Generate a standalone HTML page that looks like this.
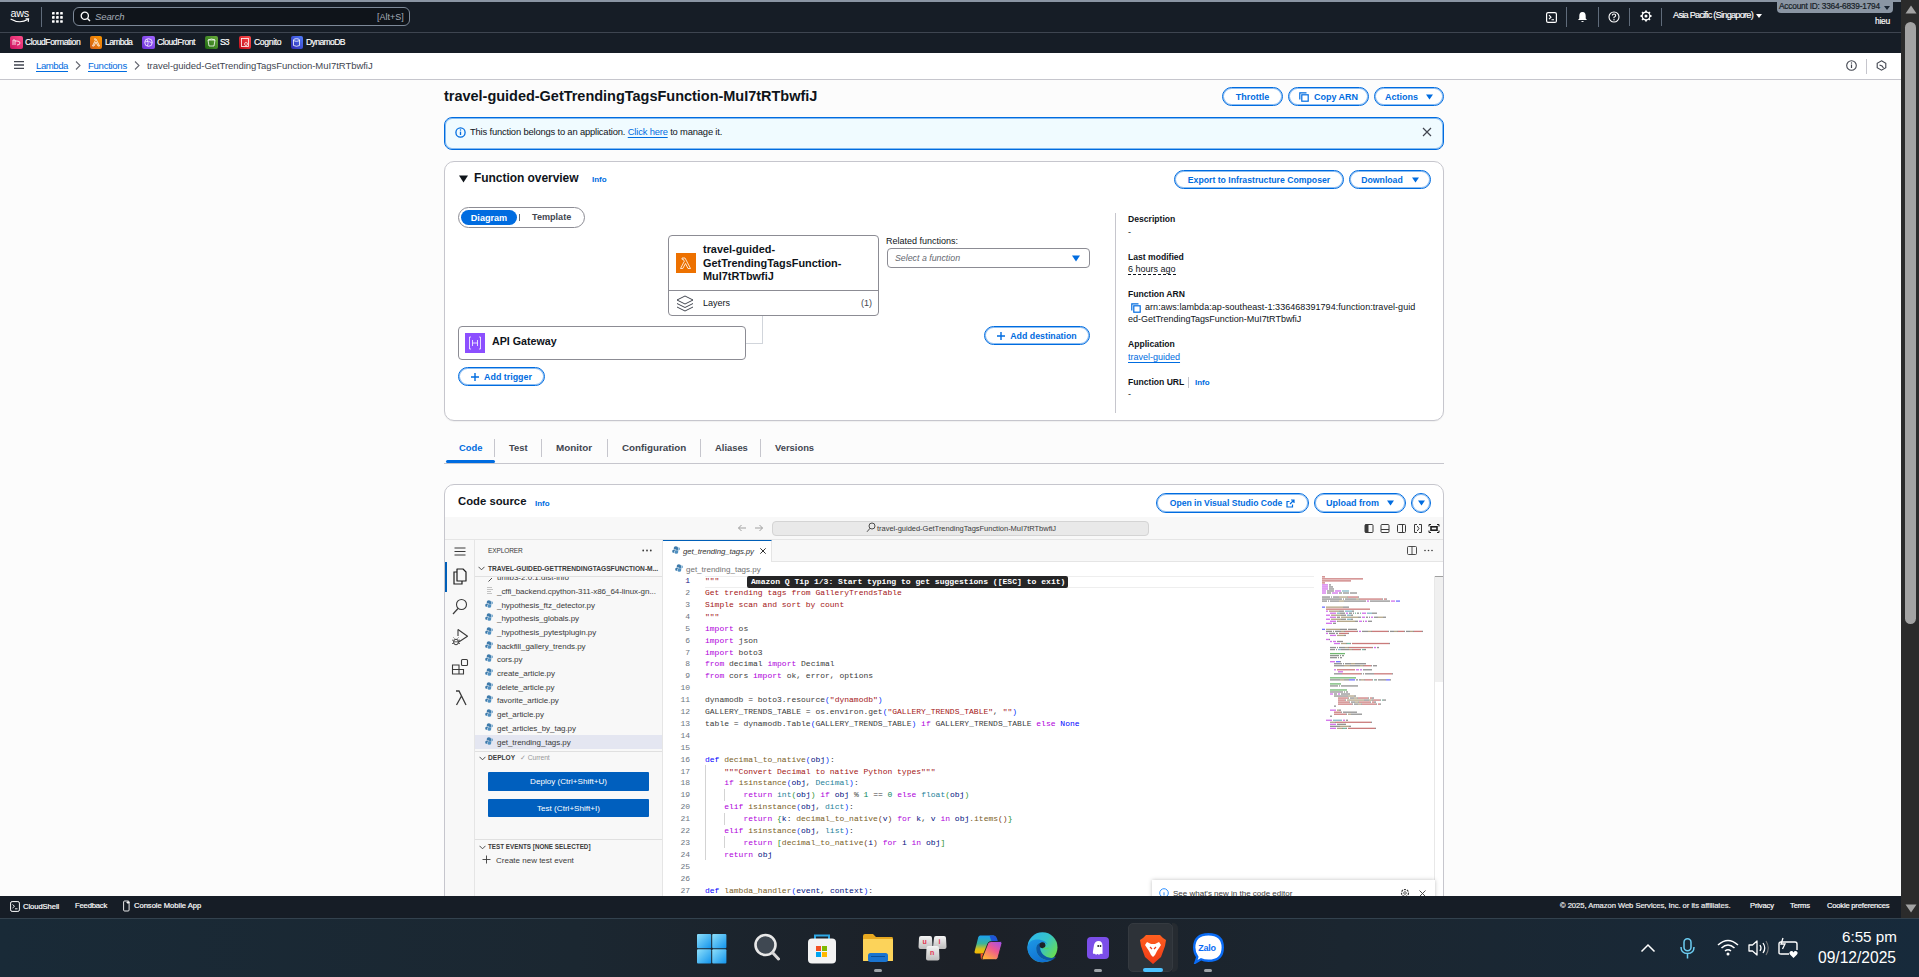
<!DOCTYPE html>
<html><head><meta charset="utf-8">
<style>
*{box-sizing:border-box;margin:0;padding:0}
html,body{width:1919px;height:977px;overflow:hidden;background:#fcfcfc;font-family:"Liberation Sans",sans-serif;color:#0f141a}
.a{position:absolute;white-space:nowrap}
svg{display:block}
.wt{color:#fff;-webkit-text-stroke:0.18px #fff}
.lnk{color:#006ce0;text-decoration:underline;text-underline-offset:2px}
.btn{position:absolute;border:1px solid #006ce0;box-shadow:inset 0 0 0 1px rgba(0,108,224,0.45);border-radius:12px;color:#006ce0;font-weight:700;font-size:9px;display:flex;align-items:center;justify-content:center;background:#fff;white-space:nowrap}
.lbl{font-weight:700;font-size:8.6px;color:#0f141a}
.val{font-size:9px;color:#0f141a}
.sep{position:absolute;width:1px;background:#5f6b7a}
</style></head>
<body>
<!-- top chrome -->
<div class="a" style="left:0;top:0;width:1901px;height:2px;background:#8a95a3"></div>
<div class="a" style="left:0;top:2px;width:1901px;height:30px;background:#161d26"></div>
<div class="a" style="left:0;top:32px;width:1901px;height:1px;background:#3e4550"></div>
<div class="a" style="left:0;top:33px;width:1901px;height:20px;background:#161d26"></div>
<!-- aws logo -->
<svg class="a" style="left:10px;top:9px" width="21" height="14" viewBox="0 0 21 14">
<text x="0.6" y="8.1" font-family="Liberation Sans" font-size="10.8" fill="#fff" letter-spacing="-0.35">aws</text>
<path d="M0.6 10 Q9.5 15.2 17.8 10.6" stroke="#fff" stroke-width="1.2" fill="none"/>
<path d="M15.6 9.9 L18.6 9.9 L18.2 12.9" stroke="#fff" stroke-width="1.1" fill="none"/>
</svg>
<div class="a" style="left:41px;top:7px;width:1px;height:20px;background:#5f6b7a"></div>
<!-- grid -->
<svg class="a" style="left:52px;top:12px" width="11" height="11" viewBox="0 0 10.5 10.5" fill="#fff"><rect x="0" y="0" width="2.5" height="2.5" rx="0.4"/><rect x="3.9" y="0" width="2.5" height="2.5" rx="0.4"/><rect x="7.8" y="0" width="2.5" height="2.5" rx="0.4"/><rect x="0" y="3.9" width="2.5" height="2.5" rx="0.4"/><rect x="3.9" y="3.9" width="2.5" height="2.5" rx="0.4"/><rect x="7.8" y="3.9" width="2.5" height="2.5" rx="0.4"/><rect x="0" y="7.8" width="2.5" height="2.5" rx="0.4"/><rect x="3.9" y="7.8" width="2.5" height="2.5" rx="0.4"/><rect x="7.8" y="7.8" width="2.5" height="2.5" rx="0.4"/></svg>
<!-- search -->
<div class="a" style="left:73px;top:7px;width:337px;height:19px;border:1px solid #7d8998;border-radius:6px;background:#0f141a"></div>
<svg class="a" style="left:80px;top:11px" width="11" height="11" viewBox="0 0 11 11"><circle cx="4.8" cy="4.8" r="3.6" stroke="#fff" stroke-width="1.3" fill="none"/><path d="M7.5 7.5 L10 10" stroke="#fff" stroke-width="1.4"/></svg>
<div class="a" style="left:95px;top:11px;font-size:9.5px;font-style:italic;color:#a4acb6;letter-spacing:-0.1px">Search</div>
<div class="a" style="left:377px;top:11.5px;font-size:9px;color:#a4acb6">[Alt+S]</div>
<!-- right icons -->
<svg class="a" style="left:1546px;top:12px" width="11" height="11" viewBox="0 0 11 11"><rect x="0.6" y="0.6" width="9.8" height="9.8" rx="1.5" stroke="#fff" stroke-width="1.2" fill="none"/><path d="M3 3.2 L5 5.2 L3 7.2 M5.5 7.8 H8" stroke="#fff" stroke-width="1.1" fill="none"/></svg>
<div class="sep" style="left:1566px;top:7px;height:20px"></div>
<svg class="a" style="left:1577px;top:11px" width="11" height="12" viewBox="0 0 11 12"><path d="M5.5 1 C3 1 2.3 3 2.3 5 V7.5 L1 9 H10 L8.7 7.5 V5 C8.7 3 8 1 5.5 1Z" fill="#fff"/><path d="M4 10 Q5.5 12 7 10" fill="#fff"/></svg>
<div class="sep" style="left:1598px;top:7px;height:20px"></div>
<svg class="a" style="left:1608px;top:11px" width="12" height="12" viewBox="0 0 12 12"><circle cx="6" cy="6" r="5" stroke="#fff" stroke-width="1.1" fill="none"/><path d="M4.3 4.6 Q4.3 3 6 3 Q7.7 3 7.7 4.5 Q7.7 5.5 6 6.3 V7.3" stroke="#fff" stroke-width="1.1" fill="none"/><circle cx="6" cy="8.8" r="0.7" fill="#fff"/></svg>
<div class="sep" style="left:1629px;top:8px;height:18px"></div>
<svg class="a" style="left:1640px;top:10px" width="12" height="12" viewBox="0 0 12 12"><circle cx="6" cy="6" r="3.9" stroke="#fff" stroke-width="1.2" fill="none"/><circle cx="6" cy="6" r="1.5" fill="#fff"/><g stroke="#fff" stroke-width="1.8"><path d="M6 0.5 V2.3 M6 9.7 V11.5 M0.5 6 H2.3 M9.7 6 H11.5 M2.1 2.1 L3.4 3.4 M8.6 8.6 L9.9 9.9 M2.1 9.9 L3.4 8.6 M8.6 3.4 L9.9 2.1"/></g></svg>
<div class="sep" style="left:1661px;top:8px;height:18px"></div>
<div class="a wt" style="left:1673px;top:10px;font-size:9.2px;letter-spacing:-0.75px;-webkit-text-stroke:0.15px #fff">Asia Pacific (Singapore)</div>
<svg class="a" style="left:1756px;top:14px" width="6" height="5" viewBox="0 0 6 5"><path d="M0 0 H6 L3 4Z" fill="#fff"/></svg>
<!-- account tag -->
<div class="a" style="left:1777px;top:0;width:116px;height:13px;background:#8a95a3;border-radius:0 0 4px 4px"></div>
<div class="a" style="left:1779px;top:1px;font-size:8.3px;color:#161d26;letter-spacing:-0.2px;-webkit-text-stroke:0.2px #161d26">Account ID: 3364-6839-1794</div>
<svg class="a" style="left:1884px;top:6px" width="6" height="5" viewBox="0 0 6 5"><path d="M0 0 H6 L3 4Z" fill="#1b2532"/></svg>
<div class="a wt" style="left:1875px;top:15.5px;font-size:8.5px;letter-spacing:-0.3px;-webkit-text-stroke:0.15px #fff">hieu</div>
<!-- services bar -->
<div class="a" style="left:10px;top:36px;width:13px;height:13px;border-radius:2px;background:linear-gradient(45deg,#c7105e,#ff4f8b)"></div>
<svg class="a" style="left:11px;top:37px" width="11" height="11" viewBox="0 0 11 11"><path d="M2 8 V3 H4 V8 M4 4 H6 Q9 4 9 6 Q9 8 6 8" stroke="#fff" stroke-width="0.8" fill="none"/></svg>
<div class="a wt" style="left:25px;top:37px;font-size:8.6px;letter-spacing:-0.42px">CloudFormation</div>
<div class="a" style="left:90px;top:36px;width:12px;height:13px;border-radius:2px;background:linear-gradient(45deg,#d05c17,#ff9900)"></div>
<svg class="a" style="left:91px;top:37px" width="10" height="11" viewBox="0 0 10 11"><path d="M3 2 H5 L8.5 9 H7 L5 5 L3 9 H1.5 L4.3 3.5 L3.8 2.5" stroke="#fff" stroke-width="0.8" fill="none"/></svg>
<div class="a wt" style="left:105px;top:37px;font-size:8.6px;letter-spacing:-0.65px">Lambda</div>
<div class="a" style="left:142px;top:36px;width:13px;height:13px;border-radius:2px;background:linear-gradient(45deg,#6a2fd6,#a166ff)"></div>
<svg class="a" style="left:143px;top:37px" width="11" height="11" viewBox="0 0 11 11"><circle cx="5.5" cy="5.5" r="3.8" stroke="#fff" stroke-width="0.8" fill="none"/><path d="M2 5 Q5.5 3 9 6 M4 2.3 Q6 6 4.5 9" stroke="#fff" stroke-width="0.7" fill="none"/></svg>
<div class="a wt" style="left:157px;top:37px;font-size:8.6px;letter-spacing:-0.45px">CloudFront</div>
<div class="a" style="left:205px;top:36px;width:13px;height:13px;border-radius:2px;background:linear-gradient(45deg,#1b660f,#6cae3e)"></div>
<svg class="a" style="left:206px;top:37px" width="11" height="11" viewBox="0 0 11 11"><path d="M2 3 L3 9 H8 L9 3Z M2 3 Q5.5 1 9 3" stroke="#fff" stroke-width="0.8" fill="none"/></svg>
<div class="a wt" style="left:220px;top:37px;font-size:8.6px;letter-spacing:-0.9px">S3</div>
<div class="a" style="left:239px;top:36px;width:12px;height:13px;border-radius:2px;background:linear-gradient(45deg,#bd0816,#ff5252)"></div>
<svg class="a" style="left:240px;top:37px" width="10" height="11" viewBox="0 0 10 11"><rect x="1.5" y="1.5" width="7" height="8" stroke="#fff" stroke-width="0.8" fill="none"/><circle cx="6" cy="7" r="1.5" stroke="#fff" stroke-width="0.7" fill="none"/></svg>
<div class="a wt" style="left:254px;top:37px;font-size:8.6px;letter-spacing:-0.35px">Cognito</div>
<div class="a" style="left:291px;top:36px;width:12px;height:13px;border-radius:2px;background:linear-gradient(45deg,#2e27ad,#527fff)"></div>
<svg class="a" style="left:292px;top:37px" width="10" height="11" viewBox="0 0 10 11"><ellipse cx="4.5" cy="3" rx="3" ry="1.3" stroke="#fff" stroke-width="0.8" fill="none"/><path d="M1.5 3 V8.5 Q4.5 10 7.5 8.5 V3" stroke="#fff" stroke-width="0.8" fill="none"/></svg>
<div class="a wt" style="left:306px;top:37px;font-size:8.6px;letter-spacing:-0.62px">DynamoDB</div>
<!-- breadcrumb bar -->
<div class="a" style="left:0;top:53px;width:1901px;height:27px;background:#fff;border-bottom:1px solid #c6c6cd"></div>
<svg class="a" style="left:14px;top:61px" width="10" height="8" viewBox="0 0 10 8"><path d="M0 0.7 H10 M0 4 H10 M0 7.3 H10" stroke="#424650" stroke-width="1.3"/></svg>
<div class="a" style="left:36px;top:60px;font-size:9.6px;color:#006ce0;letter-spacing:-0.45px;text-decoration:underline;text-underline-offset:2px">Lambda</div>
<svg class="a" style="left:75px;top:61px" width="6" height="9" viewBox="0 0 6 9"><path d="M1 0.5 L5 4.5 L1 8.5" stroke="#656871" stroke-width="1.1" fill="none"/></svg>
<div class="a" style="left:88px;top:60px;font-size:9.6px;color:#006ce0;letter-spacing:-0.3px;text-decoration:underline;text-underline-offset:2px">Functions</div>
<svg class="a" style="left:134px;top:61px" width="6" height="9" viewBox="0 0 6 9"><path d="M1 0.5 L5 4.5 L1 8.5" stroke="#656871" stroke-width="1.1" fill="none"/></svg>
<div class="a" style="left:147px;top:60px;font-size:9.5px;color:#424650;letter-spacing:-0.05px">travel-guided-GetTrendingTagsFunction-MuI7tRTbwfiJ</div>
<svg class="a" style="left:1846px;top:60px" width="11" height="11" viewBox="0 0 11 11"><circle cx="5.5" cy="5.5" r="4.8" stroke="#424650" stroke-width="1.1" fill="none"/><path d="M5.5 4.5 V8" stroke="#424650" stroke-width="1.2"/><circle cx="5.5" cy="3" r="0.7" fill="#424650"/></svg>
<div class="a" style="left:1866px;top:59px;width:1px;height:15px;background:#c6c6cd"></div>
<svg class="a" style="left:1876px;top:60px" width="11" height="11" viewBox="0 0 11 11"><path d="M5.5 0.8 L9.8 3.2 V7.8 L5.5 10.2 L1.2 7.8 V3.2Z" stroke="#424650" stroke-width="1.1" fill="none"/><path d="M3.5 5 L6 6 L7.5 8" stroke="#424650" stroke-width="1.2" fill="none"/></svg>
<!-- header -->
<div class="a" style="left:444px;top:87.5px;font-size:14.5px;font-weight:700;color:#0f141a;letter-spacing:-0.02px">travel-guided-GetTrendingTagsFunction-MuI7tRTbwfiJ</div>
<div class="btn" style="left:1222px;top:87px;width:61px;height:19px">Throttle</div>
<div class="btn" style="left:1288px;top:87px;width:81px;height:19px;letter-spacing:0px"><svg style="margin-right:5px" width="10" height="10" viewBox="0 0 10 10"><path d="M0.8 7.5 V0.8 H7.5" stroke="#006ce0" stroke-width="1.2" fill="none"/><rect x="2.8" y="2.8" width="6.4" height="6.4" stroke="#006ce0" stroke-width="1.2" fill="none"/></svg>Copy ARN</div>
<div class="btn" style="left:1374px;top:87px;width:70px;height:19px">Actions<svg style="margin-left:8px" width="7" height="6" viewBox="0 0 7 6"><path d="M0 0.5 H7 L3.5 5.5Z" fill="#006ce0"/></svg></div>
<!-- flash -->
<div class="a" style="left:444px;top:117px;width:1000px;height:33px;border:1px solid #006ce0;box-shadow:inset 0 0 0 1px rgba(0,108,224,0.45);border-radius:8px;background:#f0fbff"></div>
<svg class="a" style="left:455px;top:127px" width="11" height="11" viewBox="0 0 11 11"><circle cx="5.5" cy="5.5" r="4.6" stroke="#006ce0" stroke-width="1.3" fill="none"/><path d="M5.5 4.6 V8" stroke="#006ce0" stroke-width="1.3"/><circle cx="5.5" cy="3" r="0.75" fill="#006ce0"/></svg>
<div class="a" style="left:470px;top:126px;font-size:9.4px;letter-spacing:-0.17px;color:#0f141a">This function belongs to an application. <span class="lnk">Click here</span> to manage it.</div>
<svg class="a" style="left:1422px;top:127px" width="10" height="10" viewBox="0 0 10 10"><path d="M1 1 L9 9 M9 1 L1 9" stroke="#424650" stroke-width="1.2"/></svg>
<!-- function overview container -->
<div class="a" style="left:444px;top:161px;width:1000px;height:260px;background:#fff;border:1px solid #c6c6cd;border-radius:10px;box-shadow:0 1px 1px rgba(0,7,22,0.05)"></div>
<svg class="a" style="left:459px;top:175px" width="9" height="8" viewBox="0 0 9 8"><path d="M0 0.5 H9 L4.5 7.5Z" fill="#0f141a"/></svg>
<div class="a" style="left:474px;top:171px;font-size:12px;font-weight:700;color:#0f141a;letter-spacing:-0.05px">Function overview</div>
<div class="a" style="left:592px;top:175px;font-size:8px;font-weight:700;color:#006ce0">Info</div>
<div class="btn" style="left:1174px;top:170px;width:170px;height:19px;font-size:8.7px">Export to Infrastructure Composer</div>
<div class="btn" style="left:1349px;top:170px;width:82px;height:19px;font-size:8.7px">Download<svg style="margin-left:9px" width="7" height="6" viewBox="0 0 7 6"><path d="M0 0.5 H7 L3.5 5.5Z" fill="#006ce0"/></svg></div>
<!-- segmented -->
<div class="a" style="left:458px;top:207px;width:127px;height:21px;border:1px solid #8c8c94;border-radius:11px;background:#fff"></div>
<div class="a" style="left:461px;top:210px;width:56px;height:15px;border-radius:8px;background:#006ce0;color:#fff;font-size:9.1px;font-weight:700;display:flex;align-items:center;justify-content:center">Diagram</div>
<div class="a" style="left:519px;top:214px;width:1px;height:6.5px;background:#5f6b7a"></div>
<div class="a" style="left:532px;top:212px;font-size:9.1px;font-weight:700;color:#424650">Template</div>
<!-- lambda node -->
<div class="a" style="left:668px;top:235px;width:211px;height:81px;border:1px solid #8c8c94;border-radius:4px;background:#fff"></div>
<div class="a" style="left:669px;top:290px;width:209px;height:1px;background:#8c8c94"></div>
<div class="a" style="left:676px;top:253px;width:20px;height:20px;background:#ed7100"></div>
<svg class="a" style="left:676px;top:253px" width="20" height="20" viewBox="0 0 20 20"><path d="M6 5 H9 L14.5 15.5 H12 L9.5 10.5 L6.8 15.5 H4.5 L8.3 8.3 L7.3 6.3 H6Z" stroke="#fff" stroke-width="0.8" fill="none"/></svg>
<div class="a" style="left:703px;top:243px;font-size:10.9px;font-weight:700;line-height:13.5px;color:#0f141a;white-space:normal;width:170px">travel-guided-<br>GetTrendingTagsFunction-<br>MuI7tRTbwfiJ</div>
<svg class="a" style="left:676px;top:295px" width="18" height="17" viewBox="0 0 18 17"><path d="M9 1 L17 5 L9 9 L1 5Z M1 8.5 L9 12.5 L17 8.5 M1 12 L9 16 L17 12" stroke="#424650" stroke-width="1" fill="none" stroke-linejoin="round"/></svg>
<div class="a" style="left:703px;top:298px;font-size:9px;color:#0f141a">Layers</div>
<div class="a" style="left:861px;top:298px;font-size:9px;color:#424650">(1)</div>
<!-- connector -->
<div class="a" style="left:762px;top:316px;width:1px;height:28px;background:#d1d5db"></div>
<div class="a" style="left:745px;top:343px;width:18px;height:1px;background:#d1d5db"></div>
<!-- api gateway node -->
<div class="a" style="left:458px;top:326px;width:288px;height:34px;border:1px solid #8c8c94;border-radius:4px;background:#fff"></div>
<div class="a" style="left:465px;top:333px;width:20px;height:20px;background:#8c4fff"></div>
<svg class="a" style="left:465px;top:333px" width="20" height="20" viewBox="0 0 20 20"><path d="M6 4 H4.5 V16 H6 M14 4 H15.5 V16 H14 M7.5 7 V13 M12.5 7 V13 M7.5 10 H12.5" stroke="#fff" stroke-width="0.8" fill="none"/></svg>
<div class="a" style="left:492px;top:335px;font-size:10.7px;font-weight:700;color:#0f141a">API Gateway</div>
<div class="btn" style="left:458px;top:367px;width:87px;height:19px;font-size:8.9px"><svg style="margin-right:5px" width="8" height="8" viewBox="0 0 8 8"><path d="M4 0 V8 M0 4 H8" stroke="#006ce0" stroke-width="1.4"/></svg>Add trigger</div>
<!-- related functions -->
<div class="a" style="left:886px;top:236px;font-size:9px;color:#0f141a">Related functions:</div>
<div class="a" style="left:887px;top:248px;width:203px;height:20px;border:1px solid #8c8c94;border-radius:4px;background:#fff"></div>
<div class="a" style="left:895px;top:253px;font-size:8.8px;font-style:italic;color:#656871">Select a function</div>
<svg class="a" style="left:1072px;top:255px" width="8" height="7" viewBox="0 0 8 7"><path d="M0 0.5 H8 L4 6.5Z" fill="#006ce0"/></svg>
<div class="btn" style="left:984px;top:326px;width:106px;height:19px;font-size:8.8px"><svg style="margin-right:5px" width="8" height="8" viewBox="0 0 8 8"><path d="M4 0 V8 M0 4 H8" stroke="#006ce0" stroke-width="1.4"/></svg>Add destination</div>
<!-- right column -->
<div class="a" style="left:1115px;top:213px;width:1px;height:200px;background:#c6c6cd"></div>
<div class="a lbl" style="left:1128px;top:214px">Description</div>
<div class="a val" style="left:1128px;top:227px">-</div>
<div class="a lbl" style="left:1128px;top:252px">Last modified</div>
<div class="a val" style="left:1128px;top:264px;border-bottom:1px dashed #0f141a;line-height:10px">6 hours ago</div>
<div class="a lbl" style="left:1128px;top:289px">Function ARN</div>
<svg class="a" style="left:1131px;top:303px" width="10" height="10" viewBox="0 0 10 10"><path d="M0.8 7.5 V0.8 H7.5" stroke="#006ce0" stroke-width="1.2" fill="none"/><rect x="2.8" y="2.8" width="6.4" height="6.4" stroke="#006ce0" stroke-width="1.2" fill="none"/></svg>
<div class="a val" style="left:1145px;top:302px;letter-spacing:0.05px">arn:aws:lambda:ap-southeast-1:336468391794:function:travel-guid</div>
<div class="a val" style="left:1128px;top:314px;letter-spacing:-0.02px">ed-GetTrendingTagsFunction-MuI7tRTbwfiJ</div>
<div class="a lbl" style="left:1128px;top:339px">Application</div>
<div class="a val" style="left:1128px;top:352px;color:#006ce0;text-decoration:underline;text-underline-offset:2px">travel-guided</div>
<div class="a lbl" style="left:1128px;top:377px">Function URL</div>
<div class="a" style="left:1188px;top:377px;width:1px;height:11px;background:#c6c6cd"></div>
<div class="a" style="left:1195px;top:378px;font-size:8px;font-weight:700;color:#006ce0">Info</div>
<div class="a val" style="left:1128px;top:389px">-</div>
<!-- tabs -->
<div class="a" style="left:444px;top:463px;width:1000px;height:1px;background:#c6c6cd"></div>
<div class="a" style="left:446px;top:460px;width:49px;height:3px;background:#006ce0;border-radius:2px"></div>
<div class="a" style="left:459px;top:442px;font-size:9.4px;font-weight:700;color:#006ce0">Code</div>
<div class="a" style="left:494px;top:439px;width:1px;height:18px;background:#c6c6cd"></div>
<div class="a" style="left:509px;top:442px;font-size:9.4px;font-weight:700;color:#424650">Test</div>
<div class="a" style="left:541px;top:439px;width:1px;height:18px;background:#c6c6cd"></div>
<div class="a" style="left:556px;top:442px;font-size:9.9px;font-weight:700;color:#424650">Monitor</div>
<div class="a" style="left:607px;top:439px;width:1px;height:18px;background:#c6c6cd"></div>
<div class="a" style="left:622px;top:442px;font-size:9.8px;font-weight:700;color:#424650">Configuration</div>
<div class="a" style="left:700px;top:439px;width:1px;height:18px;background:#c6c6cd"></div>
<div class="a" style="left:715px;top:442px;font-size:9.4px;font-weight:700;color:#424650">Aliases</div>
<div class="a" style="left:760px;top:439px;width:1px;height:18px;background:#c6c6cd"></div>
<div class="a" style="left:775px;top:442px;font-size:9.4px;font-weight:700;color:#424650">Versions</div>
<!-- code source container -->
<div class="a" style="left:444px;top:484px;width:1000px;height:450px;background:#fff;border:1px solid #c6c6cd;border-radius:10px"></div>
<div class="a" style="left:458px;top:495px;font-size:11.3px;font-weight:700;color:#0f141a">Code source</div>
<div class="a" style="left:535px;top:499px;font-size:8px;font-weight:700;color:#006ce0">Info</div>
<div class="btn" style="left:1156px;top:493px;width:153px;height:20px;font-size:8.6px">Open in Visual Studio Code<svg style="margin-left:4px" width="9" height="9" viewBox="0 0 9 9"><path d="M5 1 H8 V4 M8 1 L4 5 M6.5 5.5 V8 H1 V2.5 H3.5" stroke="#006ce0" stroke-width="1.2" fill="none"/></svg></div>
<div class="btn" style="left:1314px;top:493px;width:92px;height:20px;font-size:9px">Upload from<svg style="margin-left:8px" width="7" height="6" viewBox="0 0 7 6"><path d="M0 0.5 H7 L3.5 5.5Z" fill="#006ce0"/></svg></div>
<div class="btn" style="left:1411px;top:493px;width:20px;height:20px;border-radius:50%"><svg width="7" height="6" viewBox="0 0 7 6"><path d="M0 0.5 H7 L3.5 5.5Z" fill="#006ce0"/></svg></div>
<style>
.ln{left:660px;width:30px;text-align:right;font-family:"Liberation Mono",monospace;font-size:8px;line-height:12px}
.cd{left:705px;font-family:"Liberation Mono",monospace;font-size:8px;line-height:12px;white-space:pre}
.fr{position:absolute;left:475px;width:187px;height:14px}
.fi{position:absolute;left:497px;font-size:8px;color:#3b3b3b;white-space:nowrap;letter-spacing:-0.05px}
</style>
<!-- editor chrome -->
<div class="a" style="left:445px;top:517px;width:998px;height:23px;background:#f8f8f8;border-bottom:1px solid #e5e5e5"></div>
<svg class="a" style="left:737px;top:524px" width="10" height="8" viewBox="0 0 10 8"><path d="M9 4 H1.5 M4.5 1 L1.5 4 L4.5 7" stroke="#a0a0a0" stroke-width="1" fill="none"/></svg>
<svg class="a" style="left:754px;top:524px" width="10" height="8" viewBox="0 0 10 8"><path d="M1 4 H8.5 M5.5 1 L8.5 4 L5.5 7" stroke="#a0a0a0" stroke-width="1" fill="none"/></svg>
<div class="a" style="left:772px;top:521px;width:377px;height:15px;background:#e9e9e9;border:1px solid #d4d4d4;border-radius:4px"></div>
<svg class="a" style="left:866px;top:522px" width="10" height="11" viewBox="0 0 10 11"><circle cx="6" cy="4" r="3" stroke="#3b3b3b" stroke-width="0.9" fill="none"/><path d="M4 6.3 L1 9.8" stroke="#3b3b3b" stroke-width="0.9"/></svg>
<div class="a" style="left:877px;top:524px;font-size:7.5px;color:#3b3b3b;letter-spacing:-0.02px">travel-guided-GetTrendingTagsFunction-MuI7tRTbwfiJ</div>
<!-- layout icons -->
<svg class="a" style="left:1364px;top:523px" width="76" height="11" viewBox="0 0 76 11">
<rect x="1" y="1.5" width="8" height="8" rx="1" stroke="#3b3b3b" stroke-width="1" fill="none"/><rect x="1" y="1.5" width="3.5" height="8" fill="#3b3b3b"/>
<rect x="17" y="1.5" width="8" height="8" rx="1" stroke="#3b3b3b" stroke-width="1" fill="none"/><path d="M17 6.5 H25" stroke="#3b3b3b" stroke-width="1"/>
<rect x="33.5" y="1.5" width="8" height="8" rx="1" stroke="#3b3b3b" stroke-width="1" fill="none"/><path d="M38.5 1.5 V9.5" stroke="#3b3b3b" stroke-width="1"/>
<path d="M53 1.5 H50.5 V9.5 H53 M55 1.5 H57.5 V9.5 H55 M53.2 3 L55 5.5 L53.2 8" stroke="#3b3b3b" stroke-width="1" fill="none"/>
<rect x="67" y="3.8" width="6" height="3.4" stroke="#1f1f1f" stroke-width="1.6" fill="none"/><path d="M65 1.5 V3.5 M65 1.5 H67 M75 1.5 V3.5 M75 1.5 H73 M65 9.5 V7.5 M65 9.5 H67 M75 9.5 V7.5 M75 9.5 H73" stroke="#1f1f1f" stroke-width="1.1" fill="none"/>
</svg>
<!-- activity bar -->
<div class="a" style="left:445px;top:540px;width:30px;height:356px;background:#f8f8f8;border-right:1px solid #e5e5e5"></div>
<div class="a" style="left:445px;top:562px;width:2px;height:30px;background:#005fb8"></div>
<svg class="a" style="left:454px;top:547px" width="12" height="9" viewBox="0 0 12 9"><path d="M0.5 1 H11.5 M0.5 4.5 H11.5 M0.5 8 H11.5" stroke="#3b3b3b" stroke-width="1"/></svg>
<svg class="a" style="left:452px;top:568px" width="16" height="17" viewBox="0 0 16 17"><path d="M5 4 H2 V16 H10 V13" stroke="#1f1f1f" stroke-width="1.2" fill="none"/><path d="M5 1 H11 L14 4 V13 H5Z" stroke="#1f1f1f" stroke-width="1.2" fill="none" stroke-linejoin="round"/></svg>
<svg class="a" style="left:452px;top:598px" width="16" height="17" viewBox="0 0 16 17"><circle cx="9.5" cy="6.5" r="5" stroke="#3b3b3b" stroke-width="1.1" fill="none"/><path d="M6 10.5 L1 16" stroke="#3b3b3b" stroke-width="1.2"/></svg>
<svg class="a" style="left:451px;top:628px" width="18" height="18" viewBox="0 0 18 18"><path d="M7 1.5 L16.5 8.2 L7 14.5" stroke="#3b3b3b" stroke-width="1.1" fill="none" stroke-linejoin="round"/><path d="M7 1.5 V8" stroke="#3b3b3b" stroke-width="1.1"/><ellipse cx="5" cy="14" rx="2.4" ry="2.8" stroke="#3b3b3b" stroke-width="1" fill="#f8f8f8"/><path d="M1 12.2 H2.6 M7.4 12.2 H9 M1 15.5 H2.6 M7.4 15.5 H9 M3.5 10.5 L2.5 9.5 M6.5 10.5 L7.5 9.5 M2.6 13.8 H7.4" stroke="#3b3b3b" stroke-width="0.8"/></svg>
<svg class="a" style="left:451px;top:658px" width="18" height="18" viewBox="0 0 18 18"><path d="M1.5 7 H8 V16 H1.5Z M1.5 11.5 H8 M8 11.5 H12.5 V16 H8" stroke="#3b3b3b" stroke-width="1.1" fill="none"/><rect x="10.5" y="1.5" width="6" height="6" rx="1" stroke="#3b3b3b" stroke-width="1.1" fill="none"/></svg>
<svg class="a" style="left:454px;top:689px" width="14" height="17" viewBox="0 0 14 17"><path d="M2 2 H5 L12 16 M7.5 7 L2.5 16" stroke="#3b3b3b" stroke-width="1.3" fill="none"/></svg>
<!-- sidebar -->
<div class="a" style="left:475px;top:540px;width:188px;height:356px;background:#f8f8f8;border-right:1px solid #e5e5e5"></div>
<div class="a" style="left:488px;top:547px;font-size:6.6px;color:#3b3b3b;letter-spacing:-0.15px">EXPLORER</div>
<svg class="a" style="left:642px;top:549px" width="10" height="3" viewBox="0 0 10 3" fill="#3b3b3b"><circle cx="1.2" cy="1.5" r="0.9"/><circle cx="5" cy="1.5" r="0.9"/><circle cx="8.8" cy="1.5" r="0.9"/></svg>
<svg class="a" style="left:478px;top:566px" width="7" height="5" viewBox="0 0 7 5"><path d="M0.5 0.8 L3.5 3.8 L6.5 0.8" stroke="#3b3b3b" stroke-width="0.9" fill="none"/></svg>
<div class="a" style="left:488px;top:564.5px;font-size:6.65px;font-weight:700;color:#3b3b3b;letter-spacing:0px">TRAVEL-GUIDED-GETTRENDINGTAGSFUNCTION-M...</div>
<div class="a" style="left:475px;top:576px;width:187px;height:1px;background:#e0e0e0"></div>
<div class="a" style="left:497px;top:577px;height:5px;overflow:hidden;width:150px"><div style="margin-top:-4px;font-size:8px;color:#3b3b3b">urllib3-2.0.1.dist-info</div></div>
<svg class="a" style="left:488px;top:577px" width="5" height="5" viewBox="0 0 5 5"><path d="M0.5 4.5 L4 1" stroke="#3b3b3b" stroke-width="0.9"/></svg>
<svg class="a" style="left:487px;top:587px" width="7" height="7" viewBox="0 0 7 7"><path d="M0 0.5 H5 M0 2.5 H6 M0 4.5 H4 M0 6.5 H5" stroke="#a0a0a0" stroke-width="0.6"/></svg>
<div class="fi" style="top:587px">_cffi_backend.cpython-311-x86_64-linux-gn...</div>
<svg class="a" style="left:485px;top:599.5px" width="8" height="8" viewBox="0 0 8 8"><path d="M3.8 0.3 Q1.8 0.3 1.8 1.8 V3.2 H4.2 V3.7 H1.2 Q0.2 3.7 0.2 5.2 Q0.2 6.8 1.3 6.8 H2.2 V5.6 Q2.2 4.5 3.4 4.5 H5 Q6 4.5 6 3.5 V1.8 Q6 0.3 3.8 0.3Z" fill="#3d7aab"/><path d="M4.2 7.7 Q6.2 7.7 6.2 6.2 V4.8 H3.8 V4.3 H6.8 Q7.8 4.3 7.8 2.8 Q7.8 1.2 6.7 1.2 H6.5 V3.5 Q6.5 5 5 5 H3.4 Q2.5 5 2.5 6 V6.2 Q2.5 7.7 4.2 7.7Z" fill="#4f8fc0"/></svg>
<div class="fi" style="top:600.5px">_hypothesis_ftz_detector.py</div>
<svg class="a" style="left:485px;top:613.2px" width="8" height="8" viewBox="0 0 8 8"><path d="M3.8 0.3 Q1.8 0.3 1.8 1.8 V3.2 H4.2 V3.7 H1.2 Q0.2 3.7 0.2 5.2 Q0.2 6.8 1.3 6.8 H2.2 V5.6 Q2.2 4.5 3.4 4.5 H5 Q6 4.5 6 3.5 V1.8 Q6 0.3 3.8 0.3Z" fill="#3d7aab"/><path d="M4.2 7.7 Q6.2 7.7 6.2 6.2 V4.8 H3.8 V4.3 H6.8 Q7.8 4.3 7.8 2.8 Q7.8 1.2 6.7 1.2 H6.5 V3.5 Q6.5 5 5 5 H3.4 Q2.5 5 2.5 6 V6.2 Q2.5 7.7 4.2 7.7Z" fill="#4f8fc0"/></svg>
<div class="fi" style="top:614.2px">_hypothesis_globals.py</div>
<svg class="a" style="left:485px;top:626.9px" width="8" height="8" viewBox="0 0 8 8"><path d="M3.8 0.3 Q1.8 0.3 1.8 1.8 V3.2 H4.2 V3.7 H1.2 Q0.2 3.7 0.2 5.2 Q0.2 6.8 1.3 6.8 H2.2 V5.6 Q2.2 4.5 3.4 4.5 H5 Q6 4.5 6 3.5 V1.8 Q6 0.3 3.8 0.3Z" fill="#3d7aab"/><path d="M4.2 7.7 Q6.2 7.7 6.2 6.2 V4.8 H3.8 V4.3 H6.8 Q7.8 4.3 7.8 2.8 Q7.8 1.2 6.7 1.2 H6.5 V3.5 Q6.5 5 5 5 H3.4 Q2.5 5 2.5 6 V6.2 Q2.5 7.7 4.2 7.7Z" fill="#4f8fc0"/></svg>
<div class="fi" style="top:627.9px">_hypothesis_pytestplugin.py</div>
<svg class="a" style="left:485px;top:640.6px" width="8" height="8" viewBox="0 0 8 8"><path d="M3.8 0.3 Q1.8 0.3 1.8 1.8 V3.2 H4.2 V3.7 H1.2 Q0.2 3.7 0.2 5.2 Q0.2 6.8 1.3 6.8 H2.2 V5.6 Q2.2 4.5 3.4 4.5 H5 Q6 4.5 6 3.5 V1.8 Q6 0.3 3.8 0.3Z" fill="#3d7aab"/><path d="M4.2 7.7 Q6.2 7.7 6.2 6.2 V4.8 H3.8 V4.3 H6.8 Q7.8 4.3 7.8 2.8 Q7.8 1.2 6.7 1.2 H6.5 V3.5 Q6.5 5 5 5 H3.4 Q2.5 5 2.5 6 V6.2 Q2.5 7.7 4.2 7.7Z" fill="#4f8fc0"/></svg>
<div class="fi" style="top:641.6px">backfill_gallery_trends.py</div>
<svg class="a" style="left:485px;top:654.3px" width="8" height="8" viewBox="0 0 8 8"><path d="M3.8 0.3 Q1.8 0.3 1.8 1.8 V3.2 H4.2 V3.7 H1.2 Q0.2 3.7 0.2 5.2 Q0.2 6.8 1.3 6.8 H2.2 V5.6 Q2.2 4.5 3.4 4.5 H5 Q6 4.5 6 3.5 V1.8 Q6 0.3 3.8 0.3Z" fill="#3d7aab"/><path d="M4.2 7.7 Q6.2 7.7 6.2 6.2 V4.8 H3.8 V4.3 H6.8 Q7.8 4.3 7.8 2.8 Q7.8 1.2 6.7 1.2 H6.5 V3.5 Q6.5 5 5 5 H3.4 Q2.5 5 2.5 6 V6.2 Q2.5 7.7 4.2 7.7Z" fill="#4f8fc0"/></svg>
<div class="fi" style="top:655.3px">cors.py</div>
<svg class="a" style="left:485px;top:668.0px" width="8" height="8" viewBox="0 0 8 8"><path d="M3.8 0.3 Q1.8 0.3 1.8 1.8 V3.2 H4.2 V3.7 H1.2 Q0.2 3.7 0.2 5.2 Q0.2 6.8 1.3 6.8 H2.2 V5.6 Q2.2 4.5 3.4 4.5 H5 Q6 4.5 6 3.5 V1.8 Q6 0.3 3.8 0.3Z" fill="#3d7aab"/><path d="M4.2 7.7 Q6.2 7.7 6.2 6.2 V4.8 H3.8 V4.3 H6.8 Q7.8 4.3 7.8 2.8 Q7.8 1.2 6.7 1.2 H6.5 V3.5 Q6.5 5 5 5 H3.4 Q2.5 5 2.5 6 V6.2 Q2.5 7.7 4.2 7.7Z" fill="#4f8fc0"/></svg>
<div class="fi" style="top:669.0px">create_article.py</div>
<svg class="a" style="left:485px;top:681.7px" width="8" height="8" viewBox="0 0 8 8"><path d="M3.8 0.3 Q1.8 0.3 1.8 1.8 V3.2 H4.2 V3.7 H1.2 Q0.2 3.7 0.2 5.2 Q0.2 6.8 1.3 6.8 H2.2 V5.6 Q2.2 4.5 3.4 4.5 H5 Q6 4.5 6 3.5 V1.8 Q6 0.3 3.8 0.3Z" fill="#3d7aab"/><path d="M4.2 7.7 Q6.2 7.7 6.2 6.2 V4.8 H3.8 V4.3 H6.8 Q7.8 4.3 7.8 2.8 Q7.8 1.2 6.7 1.2 H6.5 V3.5 Q6.5 5 5 5 H3.4 Q2.5 5 2.5 6 V6.2 Q2.5 7.7 4.2 7.7Z" fill="#4f8fc0"/></svg>
<div class="fi" style="top:682.7px">delete_article.py</div>
<svg class="a" style="left:485px;top:695.4px" width="8" height="8" viewBox="0 0 8 8"><path d="M3.8 0.3 Q1.8 0.3 1.8 1.8 V3.2 H4.2 V3.7 H1.2 Q0.2 3.7 0.2 5.2 Q0.2 6.8 1.3 6.8 H2.2 V5.6 Q2.2 4.5 3.4 4.5 H5 Q6 4.5 6 3.5 V1.8 Q6 0.3 3.8 0.3Z" fill="#3d7aab"/><path d="M4.2 7.7 Q6.2 7.7 6.2 6.2 V4.8 H3.8 V4.3 H6.8 Q7.8 4.3 7.8 2.8 Q7.8 1.2 6.7 1.2 H6.5 V3.5 Q6.5 5 5 5 H3.4 Q2.5 5 2.5 6 V6.2 Q2.5 7.7 4.2 7.7Z" fill="#4f8fc0"/></svg>
<div class="fi" style="top:696.4px">favorite_article.py</div>
<svg class="a" style="left:485px;top:709.1px" width="8" height="8" viewBox="0 0 8 8"><path d="M3.8 0.3 Q1.8 0.3 1.8 1.8 V3.2 H4.2 V3.7 H1.2 Q0.2 3.7 0.2 5.2 Q0.2 6.8 1.3 6.8 H2.2 V5.6 Q2.2 4.5 3.4 4.5 H5 Q6 4.5 6 3.5 V1.8 Q6 0.3 3.8 0.3Z" fill="#3d7aab"/><path d="M4.2 7.7 Q6.2 7.7 6.2 6.2 V4.8 H3.8 V4.3 H6.8 Q7.8 4.3 7.8 2.8 Q7.8 1.2 6.7 1.2 H6.5 V3.5 Q6.5 5 5 5 H3.4 Q2.5 5 2.5 6 V6.2 Q2.5 7.7 4.2 7.7Z" fill="#4f8fc0"/></svg>
<div class="fi" style="top:710.1px">get_article.py</div>
<svg class="a" style="left:485px;top:722.8px" width="8" height="8" viewBox="0 0 8 8"><path d="M3.8 0.3 Q1.8 0.3 1.8 1.8 V3.2 H4.2 V3.7 H1.2 Q0.2 3.7 0.2 5.2 Q0.2 6.8 1.3 6.8 H2.2 V5.6 Q2.2 4.5 3.4 4.5 H5 Q6 4.5 6 3.5 V1.8 Q6 0.3 3.8 0.3Z" fill="#3d7aab"/><path d="M4.2 7.7 Q6.2 7.7 6.2 6.2 V4.8 H3.8 V4.3 H6.8 Q7.8 4.3 7.8 2.8 Q7.8 1.2 6.7 1.2 H6.5 V3.5 Q6.5 5 5 5 H3.4 Q2.5 5 2.5 6 V6.2 Q2.5 7.7 4.2 7.7Z" fill="#4f8fc0"/></svg>
<div class="fi" style="top:723.8px">get_articles_by_tag.py</div>
<div class="a" style="left:475px;top:735px;width:187px;height:14px;background:#e4e6f1"></div>
<svg class="a" style="left:485px;top:736.5px" width="8" height="8" viewBox="0 0 8 8"><path d="M3.8 0.3 Q1.8 0.3 1.8 1.8 V3.2 H4.2 V3.7 H1.2 Q0.2 3.7 0.2 5.2 Q0.2 6.8 1.3 6.8 H2.2 V5.6 Q2.2 4.5 3.4 4.5 H5 Q6 4.5 6 3.5 V1.8 Q6 0.3 3.8 0.3Z" fill="#3d7aab"/><path d="M4.2 7.7 Q6.2 7.7 6.2 6.2 V4.8 H3.8 V4.3 H6.8 Q7.8 4.3 7.8 2.8 Q7.8 1.2 6.7 1.2 H6.5 V3.5 Q6.5 5 5 5 H3.4 Q2.5 5 2.5 6 V6.2 Q2.5 7.7 4.2 7.7Z" fill="#4f8fc0"/></svg>
<div class="fi" style="top:737.5px">get_trending_tags.py</div><div class="a" style="left:475px;top:751px;width:187px;height:1px;background:#e0e0e0"></div>
<svg class="a" style="left:479px;top:756px" width="7" height="5" viewBox="0 0 7 5"><path d="M0.5 0.8 L3.5 3.8 L6.5 0.8" stroke="#3b3b3b" stroke-width="0.9" fill="none"/></svg>
<div class="a" style="left:488px;top:754px;font-size:6.6px;font-weight:700;color:#3b3b3b">DEPLOY</div>
<div class="a" style="left:520px;top:754px;font-size:6.8px;color:#9a9a9a;letter-spacing:-0.1px">&#10003; Current</div>
<div class="a" style="left:488px;top:772px;width:161px;height:19px;background:#005fbe;border-radius:1px;color:#fff;font-size:8.1px;display:flex;align-items:center;justify-content:center">Deploy (Ctrl+Shift+U)</div>
<div class="a" style="left:488px;top:799px;width:161px;height:18px;background:#005fbe;border-radius:1px;color:#fff;font-size:8.1px;display:flex;align-items:center;justify-content:center">Test (Ctrl+Shift+I)</div>
<div class="a" style="left:475px;top:839px;width:187px;height:1px;background:#e0e0e0"></div>
<svg class="a" style="left:479px;top:845px" width="7" height="5" viewBox="0 0 7 5"><path d="M0.5 0.8 L3.5 3.8 L6.5 0.8" stroke="#3b3b3b" stroke-width="0.9" fill="none"/></svg>
<div class="a" style="left:488px;top:843px;font-size:6.3px;font-weight:700;color:#3b3b3b">TEST EVENTS [NONE SELECTED]</div>
<svg class="a" style="left:482px;top:855px" width="9" height="9" viewBox="0 0 9 9"><path d="M4.5 0.5 V8.5 M0.5 4.5 H8.5" stroke="#3b3b3b" stroke-width="0.9"/></svg>
<div class="a" style="left:496px;top:856px;font-size:8px;color:#3b3b3b">Create new test event</div>
<!-- editor tabs -->
<div class="a" style="left:663px;top:540px;width:780px;height:22px;background:#f8f8f8;border-bottom:1px solid #e5e5e5"></div>
<div class="a" style="left:663px;top:540px;width:109px;height:22px;background:#fff;border-top:1px solid #005fb8;border-right:1px solid #e5e5e5"></div>
<svg class="a" style="left:672px;top:546px" width="8" height="8" viewBox="0 0 8 8"><path d="M3.8 0.3 Q1.8 0.3 1.8 1.8 V3.2 H4.2 V3.7 H1.2 Q0.2 3.7 0.2 5.2 Q0.2 6.8 1.3 6.8 H2.2 V5.6 Q2.2 4.5 3.4 4.5 H5 Q6 4.5 6 3.5 V1.8 Q6 0.3 3.8 0.3Z" fill="#3d7aab"/><path d="M4.2 7.7 Q6.2 7.7 6.2 6.2 V4.8 H3.8 V4.3 H6.8 Q7.8 4.3 7.8 2.8 Q7.8 1.2 6.7 1.2 H6.5 V3.5 Q6.5 5 5 5 H3.4 Q2.5 5 2.5 6 V6.2 Q2.5 7.7 4.2 7.7Z" fill="#4f8fc0"/></svg>
<div class="a" style="left:683px;top:546.5px;font-size:7.8px;font-style:italic;color:#333;letter-spacing:-0.1px">get_trending_tags.py</div>
<svg class="a" style="left:760px;top:548px" width="6" height="6" viewBox="0 0 6 6"><path d="M0.3 0.3 L5.7 5.7 M5.7 0.3 L0.3 5.7" stroke="#333" stroke-width="1"/></svg>
<svg class="a" style="left:1407px;top:546px" width="10" height="9" viewBox="0 0 10 9"><rect x="0.5" y="0.5" width="9" height="8" rx="1" stroke="#3b3b3b" stroke-width="0.9" fill="none"/><path d="M5 0.5 V8.5" stroke="#3b3b3b" stroke-width="0.9"/></svg>
<svg class="a" style="left:1424px;top:549px" width="9" height="3" viewBox="0 0 9 3" fill="#3b3b3b"><circle cx="1" cy="1.5" r="0.8"/><circle cx="4.5" cy="1.5" r="0.8"/><circle cx="8" cy="1.5" r="0.8"/></svg>
<!-- editor body -->
<div class="a" style="left:663px;top:562px;width:780px;height:334px;background:#fff"></div>
<svg class="a" style="left:675px;top:564px" width="8" height="8" viewBox="0 0 8 8"><path d="M3.8 0.3 Q1.8 0.3 1.8 1.8 V3.2 H4.2 V3.7 H1.2 Q0.2 3.7 0.2 5.2 Q0.2 6.8 1.3 6.8 H2.2 V5.6 Q2.2 4.5 3.4 4.5 H5 Q6 4.5 6 3.5 V1.8 Q6 0.3 3.8 0.3Z" fill="#3d7aab"/><path d="M4.2 7.7 Q6.2 7.7 6.2 6.2 V4.8 H3.8 V4.3 H6.8 Q7.8 4.3 7.8 2.8 Q7.8 1.2 6.7 1.2 H6.5 V3.5 Q6.5 5 5 5 H3.4 Q2.5 5 2.5 6 V6.2 Q2.5 7.7 4.2 7.7Z" fill="#4f8fc0"/></svg>
<div class="a" style="left:686px;top:565px;font-size:8px;color:#737373">get_trending_tags.py</div>
<div class="a" style="left:705px;top:576px;width:609px;height:12px;border-top:1px solid #eeeeee;border-bottom:1px solid #eeeeee"></div>
<!-- indent guides -->
<div class="a" style="left:705px;top:765px;width:1px;height:95px;background:#d3d3d3"></div>
<div class="a" style="left:724px;top:789px;width:1px;height:12px;background:#d3d3d3"></div>
<div class="a" style="left:724px;top:813px;width:1px;height:12px;background:#d3d3d3"></div>
<div class="a" style="left:724px;top:836px;width:1px;height:12px;background:#d3d3d3"></div>
<div class="a ln" style="top:575.1px;color:#171184">1</div>
<div class="a cd" style="top:575.1px"><span style="color:#a31515">&quot;&quot;&quot;</span></div>
<div class="a ln" style="top:587.0px;color:#6e7681">2</div>
<div class="a cd" style="top:587.0px"><span style="color:#a31515">Get trending tags from GalleryTrendsTable</span></div>
<div class="a ln" style="top:598.9px;color:#6e7681">3</div>
<div class="a cd" style="top:598.9px"><span style="color:#a31515">Simple scan and sort by count</span></div>
<div class="a ln" style="top:610.8px;color:#6e7681">4</div>
<div class="a cd" style="top:610.8px"><span style="color:#a31515">&quot;&quot;&quot;</span></div>
<div class="a ln" style="top:622.7px;color:#6e7681">5</div>
<div class="a cd" style="top:622.7px"><span style="color:#af00db">import</span><span style="color:#3b3b3b"> os</span></div>
<div class="a ln" style="top:634.6px;color:#6e7681">6</div>
<div class="a cd" style="top:634.6px"><span style="color:#af00db">import</span><span style="color:#3b3b3b"> json</span></div>
<div class="a ln" style="top:646.5px;color:#6e7681">7</div>
<div class="a cd" style="top:646.5px"><span style="color:#af00db">import</span><span style="color:#3b3b3b"> boto3</span></div>
<div class="a ln" style="top:658.4px;color:#6e7681">8</div>
<div class="a cd" style="top:658.4px"><span style="color:#af00db">from</span><span style="color:#3b3b3b"> decimal </span><span style="color:#af00db">import</span><span style="color:#3b3b3b"> Decimal</span></div>
<div class="a ln" style="top:670.3px;color:#6e7681">9</div>
<div class="a cd" style="top:670.3px"><span style="color:#af00db">from</span><span style="color:#3b3b3b"> cors </span><span style="color:#af00db">import</span><span style="color:#3b3b3b"> ok, error, options</span></div>
<div class="a ln" style="top:682.2px;color:#6e7681">10</div>
<div class="a ln" style="top:694.1px;color:#6e7681">11</div>
<div class="a cd" style="top:694.1px"><span style="color:#3b3b3b">dynamodb = boto3.resource</span><span style="color:#0431fa">(</span><span style="color:#a31515">&quot;dynamodb&quot;</span><span style="color:#0431fa">)</span></div>
<div class="a ln" style="top:706.0px;color:#6e7681">12</div>
<div class="a cd" style="top:706.0px"><span style="color:#3b3b3b">GALLERY_TRENDS_TABLE = os.environ.get</span><span style="color:#0431fa">(</span><span style="color:#a31515">&quot;GALLERY_TRENDS_TABLE&quot;</span><span style="color:#3b3b3b">, </span><span style="color:#a31515">&quot;&quot;</span><span style="color:#0431fa">)</span></div>
<div class="a ln" style="top:717.9px;color:#6e7681">13</div>
<div class="a cd" style="top:717.9px"><span style="color:#3b3b3b">table = dynamodb.Table</span><span style="color:#0431fa">(</span><span style="color:#3b3b3b">GALLERY_TRENDS_TABLE</span><span style="color:#0431fa">)</span><span style="color:#3b3b3b"> </span><span style="color:#af00db">if</span><span style="color:#3b3b3b"> GALLERY_TRENDS_TABLE </span><span style="color:#af00db">else</span><span style="color:#3b3b3b"> </span><span style="color:#0000ff">None</span></div>
<div class="a ln" style="top:729.8px;color:#6e7681">14</div>
<div class="a ln" style="top:741.7px;color:#6e7681">15</div>
<div class="a ln" style="top:753.6px;color:#6e7681">16</div>
<div class="a cd" style="top:753.6px"><span style="color:#0000ff">def</span><span style="color:#3b3b3b"> </span><span style="color:#795e26">decimal_to_native</span><span style="color:#0431fa">(</span><span style="color:#001080">obj</span><span style="color:#0431fa">)</span><span style="color:#3b3b3b">:</span></div>
<div class="a ln" style="top:765.5px;color:#6e7681">17</div>
<div class="a cd" style="top:765.5px"><span style="color:#3b3b3b">    </span><span style="color:#a31515">&quot;&quot;&quot;Convert Decimal to native Python types&quot;&quot;&quot;</span></div>
<div class="a ln" style="top:777.4px;color:#6e7681">18</div>
<div class="a cd" style="top:777.4px"><span style="color:#3b3b3b">    </span><span style="color:#af00db">if</span><span style="color:#3b3b3b"> </span><span style="color:#795e26">isinstance</span><span style="color:#0431fa">(</span><span style="color:#001080">obj</span><span style="color:#3b3b3b">, </span><span style="color:#267f99">Decimal</span><span style="color:#0431fa">)</span><span style="color:#3b3b3b">:</span></div>
<div class="a ln" style="top:789.3px;color:#6e7681">19</div>
<div class="a cd" style="top:789.3px"><span style="color:#3b3b3b">        </span><span style="color:#af00db">return</span><span style="color:#3b3b3b"> </span><span style="color:#267f99">int</span><span style="color:#319331">(</span><span style="color:#001080">obj</span><span style="color:#319331">)</span><span style="color:#3b3b3b"> </span><span style="color:#af00db">if</span><span style="color:#3b3b3b"> </span><span style="color:#001080">obj</span><span style="color:#3b3b3b"> % </span><span style="color:#098658">1</span><span style="color:#3b3b3b"> == </span><span style="color:#098658">0</span><span style="color:#3b3b3b"> </span><span style="color:#af00db">else</span><span style="color:#3b3b3b"> </span><span style="color:#267f99">float</span><span style="color:#319331">(</span><span style="color:#001080">obj</span><span style="color:#319331">)</span></div>
<div class="a ln" style="top:801.2px;color:#6e7681">20</div>
<div class="a cd" style="top:801.2px"><span style="color:#3b3b3b">    </span><span style="color:#af00db">elif</span><span style="color:#3b3b3b"> </span><span style="color:#795e26">isinstance</span><span style="color:#0431fa">(</span><span style="color:#001080">obj</span><span style="color:#3b3b3b">, </span><span style="color:#267f99">dict</span><span style="color:#0431fa">)</span><span style="color:#3b3b3b">:</span></div>
<div class="a ln" style="top:813.1px;color:#6e7681">21</div>
<div class="a cd" style="top:813.1px"><span style="color:#3b3b3b">        </span><span style="color:#af00db">return</span><span style="color:#3b3b3b"> </span><span style="color:#319331">{</span><span style="color:#001080">k</span><span style="color:#3b3b3b">: </span><span style="color:#795e26">decimal_to_native</span><span style="color:#7b3814">(</span><span style="color:#001080">v</span><span style="color:#7b3814">)</span><span style="color:#3b3b3b"> </span><span style="color:#af00db">for</span><span style="color:#3b3b3b"> </span><span style="color:#001080">k</span><span style="color:#3b3b3b">, </span><span style="color:#001080">v</span><span style="color:#3b3b3b"> </span><span style="color:#af00db">in</span><span style="color:#3b3b3b"> </span><span style="color:#001080">obj</span><span style="color:#795e26">.items</span><span style="color:#7b3814">(</span><span style="color:#7b3814">)</span><span style="color:#319331">}</span></div>
<div class="a ln" style="top:825.0px;color:#6e7681">22</div>
<div class="a cd" style="top:825.0px"><span style="color:#3b3b3b">    </span><span style="color:#af00db">elif</span><span style="color:#3b3b3b"> </span><span style="color:#795e26">isinstance</span><span style="color:#0431fa">(</span><span style="color:#001080">obj</span><span style="color:#3b3b3b">, </span><span style="color:#267f99">list</span><span style="color:#0431fa">)</span><span style="color:#3b3b3b">:</span></div>
<div class="a ln" style="top:836.9px;color:#6e7681">23</div>
<div class="a cd" style="top:836.9px"><span style="color:#3b3b3b">        </span><span style="color:#af00db">return</span><span style="color:#3b3b3b"> </span><span style="color:#319331">[</span><span style="color:#795e26">decimal_to_native</span><span style="color:#7b3814">(</span><span style="color:#001080">i</span><span style="color:#7b3814">)</span><span style="color:#3b3b3b"> </span><span style="color:#af00db">for</span><span style="color:#3b3b3b"> </span><span style="color:#001080">i</span><span style="color:#3b3b3b"> </span><span style="color:#af00db">in</span><span style="color:#3b3b3b"> </span><span style="color:#001080">obj</span><span style="color:#319331">]</span></div>
<div class="a ln" style="top:848.8px;color:#6e7681">24</div>
<div class="a cd" style="top:848.8px"><span style="color:#3b3b3b">    </span><span style="color:#af00db">return</span><span style="color:#3b3b3b"> </span><span style="color:#001080">obj</span></div>
<div class="a ln" style="top:860.7px;color:#6e7681">25</div>
<div class="a ln" style="top:872.6px;color:#6e7681">26</div>
<div class="a ln" style="top:884.5px;color:#6e7681">27</div>
<div class="a cd" style="top:884.5px"><span style="color:#0000ff">def</span><span style="color:#3b3b3b"> </span><span style="color:#795e26">lambda_handler</span><span style="color:#0431fa">(</span><span style="color:#001080">event</span><span style="color:#3b3b3b">, </span><span style="color:#001080">context</span><span style="color:#0431fa">)</span><span style="color:#3b3b3b">:</span></div><svg class="a" style="left:1322px;top:575.6px;opacity:0.7" width="115" height="160" viewBox="0 0 115 160"><rect x="0.1" y="0.20" width="0.8" height="1.3" fill="#a31515"/><rect x="1.1" y="0.20" width="0.8" height="1.3" fill="#a31515"/><rect x="2.1" y="0.20" width="0.8" height="1.3" fill="#a31515"/><rect x="0.1" y="2.22" width="0.8" height="1.3" fill="#a31515"/><rect x="1.1" y="2.22" width="0.8" height="1.3" fill="#a31515"/><rect x="2.1" y="2.22" width="0.8" height="1.3" fill="#a31515"/><rect x="3.1" y="2.22" width="0.8" height="1.3" fill="#a31515"/><rect x="4.1" y="2.22" width="0.8" height="1.3" fill="#a31515"/><rect x="5.1" y="2.22" width="0.8" height="1.3" fill="#a31515"/><rect x="6.1" y="2.22" width="0.8" height="1.3" fill="#a31515"/><rect x="7.1" y="2.22" width="0.8" height="1.3" fill="#a31515"/><rect x="8.1" y="2.22" width="0.8" height="1.3" fill="#a31515"/><rect x="9.1" y="2.22" width="0.8" height="1.3" fill="#a31515"/><rect x="10.1" y="2.22" width="0.8" height="1.3" fill="#a31515"/><rect x="11.1" y="2.22" width="0.8" height="1.3" fill="#a31515"/><rect x="12.1" y="2.22" width="0.8" height="1.3" fill="#a31515"/><rect x="13.1" y="2.22" width="0.8" height="1.3" fill="#a31515"/><rect x="14.1" y="2.22" width="0.8" height="1.3" fill="#a31515"/><rect x="15.1" y="2.22" width="0.8" height="1.3" fill="#a31515"/><rect x="16.1" y="2.22" width="0.8" height="1.3" fill="#a31515"/><rect x="17.1" y="2.22" width="0.8" height="1.3" fill="#a31515"/><rect x="18.1" y="2.22" width="0.8" height="1.3" fill="#a31515"/><rect x="19.1" y="2.22" width="0.8" height="1.3" fill="#a31515"/><rect x="20.1" y="2.22" width="0.8" height="1.3" fill="#a31515"/><rect x="21.1" y="2.22" width="0.8" height="1.3" fill="#a31515"/><rect x="22.1" y="2.22" width="0.8" height="1.3" fill="#a31515"/><rect x="23.1" y="2.22" width="0.8" height="1.3" fill="#a31515"/><rect x="24.1" y="2.22" width="0.8" height="1.3" fill="#a31515"/><rect x="25.1" y="2.22" width="0.8" height="1.3" fill="#a31515"/><rect x="26.1" y="2.22" width="0.8" height="1.3" fill="#a31515"/><rect x="27.1" y="2.22" width="0.8" height="1.3" fill="#a31515"/><rect x="28.1" y="2.22" width="0.8" height="1.3" fill="#a31515"/><rect x="29.1" y="2.22" width="0.8" height="1.3" fill="#a31515"/><rect x="30.1" y="2.22" width="0.8" height="1.3" fill="#a31515"/><rect x="31.1" y="2.22" width="0.8" height="1.3" fill="#a31515"/><rect x="32.1" y="2.22" width="0.8" height="1.3" fill="#a31515"/><rect x="33.1" y="2.22" width="0.8" height="1.3" fill="#a31515"/><rect x="34.1" y="2.22" width="0.8" height="1.3" fill="#a31515"/><rect x="35.1" y="2.22" width="0.8" height="1.3" fill="#a31515"/><rect x="36.1" y="2.22" width="0.8" height="1.3" fill="#a31515"/><rect x="37.1" y="2.22" width="0.8" height="1.3" fill="#a31515"/><rect x="38.1" y="2.22" width="0.8" height="1.3" fill="#a31515"/><rect x="39.1" y="2.22" width="0.8" height="1.3" fill="#a31515"/><rect x="40.1" y="2.22" width="0.8" height="1.3" fill="#a31515"/><rect x="0.1" y="4.24" width="0.8" height="1.3" fill="#a31515"/><rect x="1.1" y="4.24" width="0.8" height="1.3" fill="#a31515"/><rect x="2.1" y="4.24" width="0.8" height="1.3" fill="#a31515"/><rect x="3.1" y="4.24" width="0.8" height="1.3" fill="#a31515"/><rect x="4.1" y="4.24" width="0.8" height="1.3" fill="#a31515"/><rect x="5.1" y="4.24" width="0.8" height="1.3" fill="#a31515"/><rect x="6.1" y="4.24" width="0.8" height="1.3" fill="#a31515"/><rect x="7.1" y="4.24" width="0.8" height="1.3" fill="#a31515"/><rect x="8.1" y="4.24" width="0.8" height="1.3" fill="#a31515"/><rect x="9.1" y="4.24" width="0.8" height="1.3" fill="#a31515"/><rect x="10.1" y="4.24" width="0.8" height="1.3" fill="#a31515"/><rect x="11.1" y="4.24" width="0.8" height="1.3" fill="#a31515"/><rect x="12.1" y="4.24" width="0.8" height="1.3" fill="#a31515"/><rect x="13.1" y="4.24" width="0.8" height="1.3" fill="#a31515"/><rect x="14.1" y="4.24" width="0.8" height="1.3" fill="#a31515"/><rect x="15.1" y="4.24" width="0.8" height="1.3" fill="#a31515"/><rect x="16.1" y="4.24" width="0.8" height="1.3" fill="#a31515"/><rect x="17.1" y="4.24" width="0.8" height="1.3" fill="#a31515"/><rect x="18.1" y="4.24" width="0.8" height="1.3" fill="#a31515"/><rect x="19.1" y="4.24" width="0.8" height="1.3" fill="#a31515"/><rect x="20.1" y="4.24" width="0.8" height="1.3" fill="#a31515"/><rect x="21.1" y="4.24" width="0.8" height="1.3" fill="#a31515"/><rect x="22.1" y="4.24" width="0.8" height="1.3" fill="#a31515"/><rect x="23.1" y="4.24" width="0.8" height="1.3" fill="#a31515"/><rect x="24.1" y="4.24" width="0.8" height="1.3" fill="#a31515"/><rect x="25.1" y="4.24" width="0.8" height="1.3" fill="#a31515"/><rect x="26.1" y="4.24" width="0.8" height="1.3" fill="#a31515"/><rect x="27.1" y="4.24" width="0.8" height="1.3" fill="#a31515"/><rect x="28.1" y="4.24" width="0.8" height="1.3" fill="#a31515"/><rect x="0.1" y="6.26" width="0.8" height="1.3" fill="#a31515"/><rect x="1.1" y="6.26" width="0.8" height="1.3" fill="#a31515"/><rect x="2.1" y="6.26" width="0.8" height="1.3" fill="#a31515"/><rect x="0.1" y="8.28" width="0.8" height="1.3" fill="#af00db"/><rect x="1.1" y="8.28" width="0.8" height="1.3" fill="#af00db"/><rect x="2.1" y="8.28" width="0.8" height="1.3" fill="#af00db"/><rect x="3.1" y="8.28" width="0.8" height="1.3" fill="#af00db"/><rect x="4.1" y="8.28" width="0.8" height="1.3" fill="#af00db"/><rect x="5.1" y="8.28" width="0.8" height="1.3" fill="#af00db"/><rect x="7.1" y="8.28" width="0.8" height="1.3" fill="#3b3b3b"/><rect x="8.1" y="8.28" width="0.8" height="1.3" fill="#3b3b3b"/><rect x="0.1" y="10.30" width="0.8" height="1.3" fill="#af00db"/><rect x="1.1" y="10.30" width="0.8" height="1.3" fill="#af00db"/><rect x="2.1" y="10.30" width="0.8" height="1.3" fill="#af00db"/><rect x="3.1" y="10.30" width="0.8" height="1.3" fill="#af00db"/><rect x="4.1" y="10.30" width="0.8" height="1.3" fill="#af00db"/><rect x="5.1" y="10.30" width="0.8" height="1.3" fill="#af00db"/><rect x="7.1" y="10.30" width="0.8" height="1.3" fill="#3b3b3b"/><rect x="8.1" y="10.30" width="0.8" height="1.3" fill="#3b3b3b"/><rect x="9.1" y="10.30" width="0.8" height="1.3" fill="#3b3b3b"/><rect x="10.1" y="10.30" width="0.8" height="1.3" fill="#3b3b3b"/><rect x="0.1" y="12.32" width="0.8" height="1.3" fill="#af00db"/><rect x="1.1" y="12.32" width="0.8" height="1.3" fill="#af00db"/><rect x="2.1" y="12.32" width="0.8" height="1.3" fill="#af00db"/><rect x="3.1" y="12.32" width="0.8" height="1.3" fill="#af00db"/><rect x="4.1" y="12.32" width="0.8" height="1.3" fill="#af00db"/><rect x="5.1" y="12.32" width="0.8" height="1.3" fill="#af00db"/><rect x="7.1" y="12.32" width="0.8" height="1.3" fill="#3b3b3b"/><rect x="8.1" y="12.32" width="0.8" height="1.3" fill="#3b3b3b"/><rect x="9.1" y="12.32" width="0.8" height="1.3" fill="#3b3b3b"/><rect x="10.1" y="12.32" width="0.8" height="1.3" fill="#3b3b3b"/><rect x="11.1" y="12.32" width="0.8" height="1.3" fill="#3b3b3b"/><rect x="0.1" y="14.34" width="0.8" height="1.3" fill="#af00db"/><rect x="1.1" y="14.34" width="0.8" height="1.3" fill="#af00db"/><rect x="2.1" y="14.34" width="0.8" height="1.3" fill="#af00db"/><rect x="3.1" y="14.34" width="0.8" height="1.3" fill="#af00db"/><rect x="5.1" y="14.34" width="0.8" height="1.3" fill="#3b3b3b"/><rect x="6.1" y="14.34" width="0.8" height="1.3" fill="#3b3b3b"/><rect x="7.1" y="14.34" width="0.8" height="1.3" fill="#3b3b3b"/><rect x="8.1" y="14.34" width="0.8" height="1.3" fill="#3b3b3b"/><rect x="9.1" y="14.34" width="0.8" height="1.3" fill="#3b3b3b"/><rect x="10.1" y="14.34" width="0.8" height="1.3" fill="#3b3b3b"/><rect x="11.1" y="14.34" width="0.8" height="1.3" fill="#3b3b3b"/><rect x="13.1" y="14.34" width="0.8" height="1.3" fill="#af00db"/><rect x="14.1" y="14.34" width="0.8" height="1.3" fill="#af00db"/><rect x="15.1" y="14.34" width="0.8" height="1.3" fill="#af00db"/><rect x="16.1" y="14.34" width="0.8" height="1.3" fill="#af00db"/><rect x="17.1" y="14.34" width="0.8" height="1.3" fill="#af00db"/><rect x="18.1" y="14.34" width="0.8" height="1.3" fill="#af00db"/><rect x="20.1" y="14.34" width="0.8" height="1.3" fill="#267f99"/><rect x="21.1" y="14.34" width="0.8" height="1.3" fill="#267f99"/><rect x="22.1" y="14.34" width="0.8" height="1.3" fill="#267f99"/><rect x="23.1" y="14.34" width="0.8" height="1.3" fill="#267f99"/><rect x="24.1" y="14.34" width="0.8" height="1.3" fill="#267f99"/><rect x="25.1" y="14.34" width="0.8" height="1.3" fill="#267f99"/><rect x="26.1" y="14.34" width="0.8" height="1.3" fill="#267f99"/><rect x="0.1" y="16.36" width="0.8" height="1.3" fill="#af00db"/><rect x="1.1" y="16.36" width="0.8" height="1.3" fill="#af00db"/><rect x="2.1" y="16.36" width="0.8" height="1.3" fill="#af00db"/><rect x="3.1" y="16.36" width="0.8" height="1.3" fill="#af00db"/><rect x="5.1" y="16.36" width="0.8" height="1.3" fill="#3b3b3b"/><rect x="6.1" y="16.36" width="0.8" height="1.3" fill="#3b3b3b"/><rect x="7.1" y="16.36" width="0.8" height="1.3" fill="#3b3b3b"/><rect x="8.1" y="16.36" width="0.8" height="1.3" fill="#3b3b3b"/><rect x="10.1" y="16.36" width="0.8" height="1.3" fill="#af00db"/><rect x="11.1" y="16.36" width="0.8" height="1.3" fill="#af00db"/><rect x="12.1" y="16.36" width="0.8" height="1.3" fill="#af00db"/><rect x="13.1" y="16.36" width="0.8" height="1.3" fill="#af00db"/><rect x="14.1" y="16.36" width="0.8" height="1.3" fill="#af00db"/><rect x="15.1" y="16.36" width="0.8" height="1.3" fill="#af00db"/><rect x="17.1" y="16.36" width="0.8" height="1.3" fill="#3b3b3b"/><rect x="18.1" y="16.36" width="0.8" height="1.3" fill="#3b3b3b"/><rect x="19.1" y="16.36" width="0.8" height="1.3" fill="#3b3b3b"/><rect x="21.1" y="16.36" width="0.8" height="1.3" fill="#3b3b3b"/><rect x="22.1" y="16.36" width="0.8" height="1.3" fill="#3b3b3b"/><rect x="23.1" y="16.36" width="0.8" height="1.3" fill="#3b3b3b"/><rect x="24.1" y="16.36" width="0.8" height="1.3" fill="#3b3b3b"/><rect x="25.1" y="16.36" width="0.8" height="1.3" fill="#3b3b3b"/><rect x="26.1" y="16.36" width="0.8" height="1.3" fill="#3b3b3b"/><rect x="28.1" y="16.36" width="0.8" height="1.3" fill="#3b3b3b"/><rect x="29.1" y="16.36" width="0.8" height="1.3" fill="#3b3b3b"/><rect x="30.1" y="16.36" width="0.8" height="1.3" fill="#3b3b3b"/><rect x="31.1" y="16.36" width="0.8" height="1.3" fill="#3b3b3b"/><rect x="32.1" y="16.36" width="0.8" height="1.3" fill="#3b3b3b"/><rect x="33.1" y="16.36" width="0.8" height="1.3" fill="#3b3b3b"/><rect x="34.1" y="16.36" width="0.8" height="1.3" fill="#3b3b3b"/><rect x="0.1" y="20.40" width="0.8" height="1.3" fill="#3b3b3b"/><rect x="1.1" y="20.40" width="0.8" height="1.3" fill="#3b3b3b"/><rect x="2.1" y="20.40" width="0.8" height="1.3" fill="#3b3b3b"/><rect x="3.1" y="20.40" width="0.8" height="1.3" fill="#3b3b3b"/><rect x="4.1" y="20.40" width="0.8" height="1.3" fill="#3b3b3b"/><rect x="5.1" y="20.40" width="0.8" height="1.3" fill="#3b3b3b"/><rect x="6.1" y="20.40" width="0.8" height="1.3" fill="#3b3b3b"/><rect x="7.1" y="20.40" width="0.8" height="1.3" fill="#3b3b3b"/><rect x="9.1" y="20.40" width="0.8" height="1.3" fill="#3b3b3b"/><rect x="11.1" y="20.40" width="0.8" height="1.3" fill="#3b3b3b"/><rect x="12.1" y="20.40" width="0.8" height="1.3" fill="#3b3b3b"/><rect x="13.1" y="20.40" width="0.8" height="1.3" fill="#3b3b3b"/><rect x="14.1" y="20.40" width="0.8" height="1.3" fill="#3b3b3b"/><rect x="15.1" y="20.40" width="0.8" height="1.3" fill="#3b3b3b"/><rect x="16.1" y="20.40" width="0.8" height="1.3" fill="#3b3b3b"/><rect x="17.1" y="20.40" width="0.8" height="1.3" fill="#795e26"/><rect x="18.1" y="20.40" width="0.8" height="1.3" fill="#795e26"/><rect x="19.1" y="20.40" width="0.8" height="1.3" fill="#795e26"/><rect x="20.1" y="20.40" width="0.8" height="1.3" fill="#795e26"/><rect x="21.1" y="20.40" width="0.8" height="1.3" fill="#795e26"/><rect x="22.1" y="20.40" width="0.8" height="1.3" fill="#795e26"/><rect x="23.1" y="20.40" width="0.8" height="1.3" fill="#795e26"/><rect x="24.1" y="20.40" width="0.8" height="1.3" fill="#795e26"/><rect x="25.1" y="20.40" width="0.8" height="1.3" fill="#3b3b3b"/><rect x="26.1" y="20.40" width="0.8" height="1.3" fill="#a31515"/><rect x="27.1" y="20.40" width="0.8" height="1.3" fill="#a31515"/><rect x="28.1" y="20.40" width="0.8" height="1.3" fill="#a31515"/><rect x="29.1" y="20.40" width="0.8" height="1.3" fill="#a31515"/><rect x="30.1" y="20.40" width="0.8" height="1.3" fill="#a31515"/><rect x="31.1" y="20.40" width="0.8" height="1.3" fill="#a31515"/><rect x="32.1" y="20.40" width="0.8" height="1.3" fill="#a31515"/><rect x="33.1" y="20.40" width="0.8" height="1.3" fill="#a31515"/><rect x="34.1" y="20.40" width="0.8" height="1.3" fill="#a31515"/><rect x="35.1" y="20.40" width="0.8" height="1.3" fill="#a31515"/><rect x="36.1" y="20.40" width="0.8" height="1.3" fill="#3b3b3b"/><rect x="0.1" y="22.42" width="0.8" height="1.3" fill="#3b3b3b"/><rect x="1.1" y="22.42" width="0.8" height="1.3" fill="#3b3b3b"/><rect x="2.1" y="22.42" width="0.8" height="1.3" fill="#3b3b3b"/><rect x="3.1" y="22.42" width="0.8" height="1.3" fill="#3b3b3b"/><rect x="4.1" y="22.42" width="0.8" height="1.3" fill="#3b3b3b"/><rect x="5.1" y="22.42" width="0.8" height="1.3" fill="#3b3b3b"/><rect x="6.1" y="22.42" width="0.8" height="1.3" fill="#3b3b3b"/><rect x="7.1" y="22.42" width="0.8" height="1.3" fill="#3b3b3b"/><rect x="8.1" y="22.42" width="0.8" height="1.3" fill="#3b3b3b"/><rect x="9.1" y="22.42" width="0.8" height="1.3" fill="#3b3b3b"/><rect x="10.1" y="22.42" width="0.8" height="1.3" fill="#3b3b3b"/><rect x="11.1" y="22.42" width="0.8" height="1.3" fill="#3b3b3b"/><rect x="12.1" y="22.42" width="0.8" height="1.3" fill="#3b3b3b"/><rect x="13.1" y="22.42" width="0.8" height="1.3" fill="#3b3b3b"/><rect x="14.1" y="22.42" width="0.8" height="1.3" fill="#3b3b3b"/><rect x="15.1" y="22.42" width="0.8" height="1.3" fill="#3b3b3b"/><rect x="16.1" y="22.42" width="0.8" height="1.3" fill="#3b3b3b"/><rect x="17.1" y="22.42" width="0.8" height="1.3" fill="#3b3b3b"/><rect x="18.1" y="22.42" width="0.8" height="1.3" fill="#3b3b3b"/><rect x="19.1" y="22.42" width="0.8" height="1.3" fill="#3b3b3b"/><rect x="21.1" y="22.42" width="0.8" height="1.3" fill="#3b3b3b"/><rect x="23.1" y="22.42" width="0.8" height="1.3" fill="#3b3b3b"/><rect x="24.1" y="22.42" width="0.8" height="1.3" fill="#3b3b3b"/><rect x="25.1" y="22.42" width="0.8" height="1.3" fill="#3b3b3b"/><rect x="26.1" y="22.42" width="0.8" height="1.3" fill="#3b3b3b"/><rect x="27.1" y="22.42" width="0.8" height="1.3" fill="#3b3b3b"/><rect x="28.1" y="22.42" width="0.8" height="1.3" fill="#3b3b3b"/><rect x="29.1" y="22.42" width="0.8" height="1.3" fill="#3b3b3b"/><rect x="30.1" y="22.42" width="0.8" height="1.3" fill="#3b3b3b"/><rect x="31.1" y="22.42" width="0.8" height="1.3" fill="#3b3b3b"/><rect x="32.1" y="22.42" width="0.8" height="1.3" fill="#3b3b3b"/><rect x="33.1" y="22.42" width="0.8" height="1.3" fill="#3b3b3b"/><rect x="34.1" y="22.42" width="0.8" height="1.3" fill="#795e26"/><rect x="35.1" y="22.42" width="0.8" height="1.3" fill="#795e26"/><rect x="36.1" y="22.42" width="0.8" height="1.3" fill="#795e26"/><rect x="37.1" y="22.42" width="0.8" height="1.3" fill="#3b3b3b"/><rect x="38.1" y="22.42" width="0.8" height="1.3" fill="#a31515"/><rect x="39.1" y="22.42" width="0.8" height="1.3" fill="#a31515"/><rect x="40.1" y="22.42" width="0.8" height="1.3" fill="#a31515"/><rect x="41.1" y="22.42" width="0.8" height="1.3" fill="#a31515"/><rect x="42.1" y="22.42" width="0.8" height="1.3" fill="#a31515"/><rect x="43.1" y="22.42" width="0.8" height="1.3" fill="#a31515"/><rect x="44.1" y="22.42" width="0.8" height="1.3" fill="#a31515"/><rect x="45.1" y="22.42" width="0.8" height="1.3" fill="#a31515"/><rect x="46.1" y="22.42" width="0.8" height="1.3" fill="#a31515"/><rect x="47.1" y="22.42" width="0.8" height="1.3" fill="#a31515"/><rect x="48.1" y="22.42" width="0.8" height="1.3" fill="#a31515"/><rect x="49.1" y="22.42" width="0.8" height="1.3" fill="#a31515"/><rect x="50.1" y="22.42" width="0.8" height="1.3" fill="#a31515"/><rect x="51.1" y="22.42" width="0.8" height="1.3" fill="#a31515"/><rect x="52.1" y="22.42" width="0.8" height="1.3" fill="#a31515"/><rect x="53.1" y="22.42" width="0.8" height="1.3" fill="#a31515"/><rect x="54.1" y="22.42" width="0.8" height="1.3" fill="#a31515"/><rect x="55.1" y="22.42" width="0.8" height="1.3" fill="#a31515"/><rect x="56.1" y="22.42" width="0.8" height="1.3" fill="#a31515"/><rect x="57.1" y="22.42" width="0.8" height="1.3" fill="#a31515"/><rect x="58.1" y="22.42" width="0.8" height="1.3" fill="#a31515"/><rect x="59.1" y="22.42" width="0.8" height="1.3" fill="#a31515"/><rect x="60.1" y="22.42" width="0.8" height="1.3" fill="#3b3b3b"/><rect x="62.1" y="22.42" width="0.8" height="1.3" fill="#a31515"/><rect x="63.1" y="22.42" width="0.8" height="1.3" fill="#a31515"/><rect x="64.1" y="22.42" width="0.8" height="1.3" fill="#3b3b3b"/><rect x="0.1" y="24.44" width="0.8" height="1.3" fill="#3b3b3b"/><rect x="1.1" y="24.44" width="0.8" height="1.3" fill="#3b3b3b"/><rect x="2.1" y="24.44" width="0.8" height="1.3" fill="#3b3b3b"/><rect x="3.1" y="24.44" width="0.8" height="1.3" fill="#3b3b3b"/><rect x="4.1" y="24.44" width="0.8" height="1.3" fill="#3b3b3b"/><rect x="6.1" y="24.44" width="0.8" height="1.3" fill="#3b3b3b"/><rect x="8.1" y="24.44" width="0.8" height="1.3" fill="#3b3b3b"/><rect x="9.1" y="24.44" width="0.8" height="1.3" fill="#3b3b3b"/><rect x="10.1" y="24.44" width="0.8" height="1.3" fill="#3b3b3b"/><rect x="11.1" y="24.44" width="0.8" height="1.3" fill="#3b3b3b"/><rect x="12.1" y="24.44" width="0.8" height="1.3" fill="#3b3b3b"/><rect x="13.1" y="24.44" width="0.8" height="1.3" fill="#3b3b3b"/><rect x="14.1" y="24.44" width="0.8" height="1.3" fill="#3b3b3b"/><rect x="15.1" y="24.44" width="0.8" height="1.3" fill="#3b3b3b"/><rect x="16.1" y="24.44" width="0.8" height="1.3" fill="#3b3b3b"/><rect x="17.1" y="24.44" width="0.8" height="1.3" fill="#795e26"/><rect x="18.1" y="24.44" width="0.8" height="1.3" fill="#795e26"/><rect x="19.1" y="24.44" width="0.8" height="1.3" fill="#795e26"/><rect x="20.1" y="24.44" width="0.8" height="1.3" fill="#795e26"/><rect x="21.1" y="24.44" width="0.8" height="1.3" fill="#795e26"/><rect x="22.1" y="24.44" width="0.8" height="1.3" fill="#3b3b3b"/><rect x="23.1" y="24.44" width="0.8" height="1.3" fill="#3b3b3b"/><rect x="24.1" y="24.44" width="0.8" height="1.3" fill="#3b3b3b"/><rect x="25.1" y="24.44" width="0.8" height="1.3" fill="#3b3b3b"/><rect x="26.1" y="24.44" width="0.8" height="1.3" fill="#3b3b3b"/><rect x="27.1" y="24.44" width="0.8" height="1.3" fill="#3b3b3b"/><rect x="28.1" y="24.44" width="0.8" height="1.3" fill="#3b3b3b"/><rect x="29.1" y="24.44" width="0.8" height="1.3" fill="#3b3b3b"/><rect x="30.1" y="24.44" width="0.8" height="1.3" fill="#3b3b3b"/><rect x="31.1" y="24.44" width="0.8" height="1.3" fill="#3b3b3b"/><rect x="32.1" y="24.44" width="0.8" height="1.3" fill="#3b3b3b"/><rect x="33.1" y="24.44" width="0.8" height="1.3" fill="#3b3b3b"/><rect x="34.1" y="24.44" width="0.8" height="1.3" fill="#3b3b3b"/><rect x="35.1" y="24.44" width="0.8" height="1.3" fill="#3b3b3b"/><rect x="36.1" y="24.44" width="0.8" height="1.3" fill="#3b3b3b"/><rect x="37.1" y="24.44" width="0.8" height="1.3" fill="#3b3b3b"/><rect x="38.1" y="24.44" width="0.8" height="1.3" fill="#3b3b3b"/><rect x="39.1" y="24.44" width="0.8" height="1.3" fill="#3b3b3b"/><rect x="40.1" y="24.44" width="0.8" height="1.3" fill="#3b3b3b"/><rect x="41.1" y="24.44" width="0.8" height="1.3" fill="#3b3b3b"/><rect x="42.1" y="24.44" width="0.8" height="1.3" fill="#3b3b3b"/><rect x="43.1" y="24.44" width="0.8" height="1.3" fill="#3b3b3b"/><rect x="45.1" y="24.44" width="0.8" height="1.3" fill="#af00db"/><rect x="46.1" y="24.44" width="0.8" height="1.3" fill="#af00db"/><rect x="48.1" y="24.44" width="0.8" height="1.3" fill="#3b3b3b"/><rect x="49.1" y="24.44" width="0.8" height="1.3" fill="#3b3b3b"/><rect x="50.1" y="24.44" width="0.8" height="1.3" fill="#3b3b3b"/><rect x="51.1" y="24.44" width="0.8" height="1.3" fill="#3b3b3b"/><rect x="52.1" y="24.44" width="0.8" height="1.3" fill="#3b3b3b"/><rect x="53.1" y="24.44" width="0.8" height="1.3" fill="#3b3b3b"/><rect x="54.1" y="24.44" width="0.8" height="1.3" fill="#3b3b3b"/><rect x="55.1" y="24.44" width="0.8" height="1.3" fill="#3b3b3b"/><rect x="56.1" y="24.44" width="0.8" height="1.3" fill="#3b3b3b"/><rect x="57.1" y="24.44" width="0.8" height="1.3" fill="#3b3b3b"/><rect x="58.1" y="24.44" width="0.8" height="1.3" fill="#3b3b3b"/><rect x="59.1" y="24.44" width="0.8" height="1.3" fill="#3b3b3b"/><rect x="60.1" y="24.44" width="0.8" height="1.3" fill="#3b3b3b"/><rect x="61.1" y="24.44" width="0.8" height="1.3" fill="#3b3b3b"/><rect x="62.1" y="24.44" width="0.8" height="1.3" fill="#3b3b3b"/><rect x="63.1" y="24.44" width="0.8" height="1.3" fill="#3b3b3b"/><rect x="64.1" y="24.44" width="0.8" height="1.3" fill="#3b3b3b"/><rect x="65.1" y="24.44" width="0.8" height="1.3" fill="#3b3b3b"/><rect x="66.1" y="24.44" width="0.8" height="1.3" fill="#3b3b3b"/><rect x="67.1" y="24.44" width="0.8" height="1.3" fill="#3b3b3b"/><rect x="69.1" y="24.44" width="0.8" height="1.3" fill="#af00db"/><rect x="70.1" y="24.44" width="0.8" height="1.3" fill="#af00db"/><rect x="71.1" y="24.44" width="0.8" height="1.3" fill="#af00db"/><rect x="72.1" y="24.44" width="0.8" height="1.3" fill="#af00db"/><rect x="74.1" y="24.44" width="0.8" height="1.3" fill="#0000ff"/><rect x="75.1" y="24.44" width="0.8" height="1.3" fill="#0000ff"/><rect x="76.1" y="24.44" width="0.8" height="1.3" fill="#0000ff"/><rect x="77.1" y="24.44" width="0.8" height="1.3" fill="#0000ff"/><rect x="0.1" y="30.50" width="0.8" height="1.3" fill="#0000ff"/><rect x="1.1" y="30.50" width="0.8" height="1.3" fill="#0000ff"/><rect x="2.1" y="30.50" width="0.8" height="1.3" fill="#0000ff"/><rect x="4.1" y="30.50" width="0.8" height="1.3" fill="#795e26"/><rect x="5.1" y="30.50" width="0.8" height="1.3" fill="#795e26"/><rect x="6.1" y="30.50" width="0.8" height="1.3" fill="#795e26"/><rect x="7.1" y="30.50" width="0.8" height="1.3" fill="#795e26"/><rect x="8.1" y="30.50" width="0.8" height="1.3" fill="#795e26"/><rect x="9.1" y="30.50" width="0.8" height="1.3" fill="#795e26"/><rect x="10.1" y="30.50" width="0.8" height="1.3" fill="#795e26"/><rect x="11.1" y="30.50" width="0.8" height="1.3" fill="#795e26"/><rect x="12.1" y="30.50" width="0.8" height="1.3" fill="#795e26"/><rect x="13.1" y="30.50" width="0.8" height="1.3" fill="#795e26"/><rect x="14.1" y="30.50" width="0.8" height="1.3" fill="#795e26"/><rect x="15.1" y="30.50" width="0.8" height="1.3" fill="#795e26"/><rect x="16.1" y="30.50" width="0.8" height="1.3" fill="#795e26"/><rect x="17.1" y="30.50" width="0.8" height="1.3" fill="#795e26"/><rect x="18.1" y="30.50" width="0.8" height="1.3" fill="#795e26"/><rect x="19.1" y="30.50" width="0.8" height="1.3" fill="#795e26"/><rect x="20.1" y="30.50" width="0.8" height="1.3" fill="#795e26"/><rect x="21.1" y="30.50" width="0.8" height="1.3" fill="#3b3b3b"/><rect x="22.1" y="30.50" width="0.8" height="1.3" fill="#3b3b3b"/><rect x="23.1" y="30.50" width="0.8" height="1.3" fill="#3b3b3b"/><rect x="24.1" y="30.50" width="0.8" height="1.3" fill="#3b3b3b"/><rect x="25.1" y="30.50" width="0.8" height="1.3" fill="#3b3b3b"/><rect x="26.1" y="30.50" width="0.8" height="1.3" fill="#3b3b3b"/><rect x="4.1" y="32.52" width="0.8" height="1.3" fill="#a31515"/><rect x="5.1" y="32.52" width="0.8" height="1.3" fill="#a31515"/><rect x="6.1" y="32.52" width="0.8" height="1.3" fill="#a31515"/><rect x="7.1" y="32.52" width="0.8" height="1.3" fill="#a31515"/><rect x="8.1" y="32.52" width="0.8" height="1.3" fill="#a31515"/><rect x="9.1" y="32.52" width="0.8" height="1.3" fill="#a31515"/><rect x="10.1" y="32.52" width="0.8" height="1.3" fill="#a31515"/><rect x="11.1" y="32.52" width="0.8" height="1.3" fill="#a31515"/><rect x="12.1" y="32.52" width="0.8" height="1.3" fill="#a31515"/><rect x="13.1" y="32.52" width="0.8" height="1.3" fill="#a31515"/><rect x="14.1" y="32.52" width="0.8" height="1.3" fill="#a31515"/><rect x="15.1" y="32.52" width="0.8" height="1.3" fill="#a31515"/><rect x="16.1" y="32.52" width="0.8" height="1.3" fill="#a31515"/><rect x="17.1" y="32.52" width="0.8" height="1.3" fill="#a31515"/><rect x="18.1" y="32.52" width="0.8" height="1.3" fill="#a31515"/><rect x="19.1" y="32.52" width="0.8" height="1.3" fill="#a31515"/><rect x="20.1" y="32.52" width="0.8" height="1.3" fill="#a31515"/><rect x="21.1" y="32.52" width="0.8" height="1.3" fill="#a31515"/><rect x="22.1" y="32.52" width="0.8" height="1.3" fill="#a31515"/><rect x="23.1" y="32.52" width="0.8" height="1.3" fill="#a31515"/><rect x="24.1" y="32.52" width="0.8" height="1.3" fill="#a31515"/><rect x="25.1" y="32.52" width="0.8" height="1.3" fill="#a31515"/><rect x="26.1" y="32.52" width="0.8" height="1.3" fill="#a31515"/><rect x="27.1" y="32.52" width="0.8" height="1.3" fill="#a31515"/><rect x="28.1" y="32.52" width="0.8" height="1.3" fill="#a31515"/><rect x="29.1" y="32.52" width="0.8" height="1.3" fill="#a31515"/><rect x="30.1" y="32.52" width="0.8" height="1.3" fill="#a31515"/><rect x="31.1" y="32.52" width="0.8" height="1.3" fill="#a31515"/><rect x="32.1" y="32.52" width="0.8" height="1.3" fill="#a31515"/><rect x="33.1" y="32.52" width="0.8" height="1.3" fill="#a31515"/><rect x="34.1" y="32.52" width="0.8" height="1.3" fill="#a31515"/><rect x="35.1" y="32.52" width="0.8" height="1.3" fill="#a31515"/><rect x="36.1" y="32.52" width="0.8" height="1.3" fill="#a31515"/><rect x="37.1" y="32.52" width="0.8" height="1.3" fill="#a31515"/><rect x="38.1" y="32.52" width="0.8" height="1.3" fill="#a31515"/><rect x="39.1" y="32.52" width="0.8" height="1.3" fill="#a31515"/><rect x="40.1" y="32.52" width="0.8" height="1.3" fill="#a31515"/><rect x="41.1" y="32.52" width="0.8" height="1.3" fill="#a31515"/><rect x="42.1" y="32.52" width="0.8" height="1.3" fill="#a31515"/><rect x="43.1" y="32.52" width="0.8" height="1.3" fill="#a31515"/><rect x="44.1" y="32.52" width="0.8" height="1.3" fill="#a31515"/><rect x="45.1" y="32.52" width="0.8" height="1.3" fill="#a31515"/><rect x="46.1" y="32.52" width="0.8" height="1.3" fill="#a31515"/><rect x="47.1" y="32.52" width="0.8" height="1.3" fill="#a31515"/><rect x="4.1" y="34.54" width="0.8" height="1.3" fill="#af00db"/><rect x="5.1" y="34.54" width="0.8" height="1.3" fill="#af00db"/><rect x="7.1" y="34.54" width="0.8" height="1.3" fill="#795e26"/><rect x="8.1" y="34.54" width="0.8" height="1.3" fill="#795e26"/><rect x="9.1" y="34.54" width="0.8" height="1.3" fill="#795e26"/><rect x="10.1" y="34.54" width="0.8" height="1.3" fill="#795e26"/><rect x="11.1" y="34.54" width="0.8" height="1.3" fill="#795e26"/><rect x="12.1" y="34.54" width="0.8" height="1.3" fill="#795e26"/><rect x="13.1" y="34.54" width="0.8" height="1.3" fill="#795e26"/><rect x="14.1" y="34.54" width="0.8" height="1.3" fill="#795e26"/><rect x="15.1" y="34.54" width="0.8" height="1.3" fill="#795e26"/><rect x="16.1" y="34.54" width="0.8" height="1.3" fill="#795e26"/><rect x="17.1" y="34.54" width="0.8" height="1.3" fill="#3b3b3b"/><rect x="18.1" y="34.54" width="0.8" height="1.3" fill="#3b3b3b"/><rect x="19.1" y="34.54" width="0.8" height="1.3" fill="#3b3b3b"/><rect x="20.1" y="34.54" width="0.8" height="1.3" fill="#3b3b3b"/><rect x="21.1" y="34.54" width="0.8" height="1.3" fill="#3b3b3b"/><rect x="23.1" y="34.54" width="0.8" height="1.3" fill="#267f99"/><rect x="24.1" y="34.54" width="0.8" height="1.3" fill="#267f99"/><rect x="25.1" y="34.54" width="0.8" height="1.3" fill="#267f99"/><rect x="26.1" y="34.54" width="0.8" height="1.3" fill="#267f99"/><rect x="27.1" y="34.54" width="0.8" height="1.3" fill="#267f99"/><rect x="28.1" y="34.54" width="0.8" height="1.3" fill="#267f99"/><rect x="29.1" y="34.54" width="0.8" height="1.3" fill="#267f99"/><rect x="30.1" y="34.54" width="0.8" height="1.3" fill="#3b3b3b"/><rect x="31.1" y="34.54" width="0.8" height="1.3" fill="#3b3b3b"/><rect x="8.1" y="36.56" width="0.8" height="1.3" fill="#af00db"/><rect x="9.1" y="36.56" width="0.8" height="1.3" fill="#af00db"/><rect x="10.1" y="36.56" width="0.8" height="1.3" fill="#af00db"/><rect x="11.1" y="36.56" width="0.8" height="1.3" fill="#af00db"/><rect x="12.1" y="36.56" width="0.8" height="1.3" fill="#af00db"/><rect x="13.1" y="36.56" width="0.8" height="1.3" fill="#af00db"/><rect x="15.1" y="36.56" width="0.8" height="1.3" fill="#267f99"/><rect x="16.1" y="36.56" width="0.8" height="1.3" fill="#267f99"/><rect x="17.1" y="36.56" width="0.8" height="1.3" fill="#267f99"/><rect x="18.1" y="36.56" width="0.8" height="1.3" fill="#3b3b3b"/><rect x="19.1" y="36.56" width="0.8" height="1.3" fill="#3b3b3b"/><rect x="20.1" y="36.56" width="0.8" height="1.3" fill="#3b3b3b"/><rect x="21.1" y="36.56" width="0.8" height="1.3" fill="#3b3b3b"/><rect x="22.1" y="36.56" width="0.8" height="1.3" fill="#3b3b3b"/><rect x="24.1" y="36.56" width="0.8" height="1.3" fill="#af00db"/><rect x="25.1" y="36.56" width="0.8" height="1.3" fill="#af00db"/><rect x="27.1" y="36.56" width="0.8" height="1.3" fill="#3b3b3b"/><rect x="28.1" y="36.56" width="0.8" height="1.3" fill="#3b3b3b"/><rect x="29.1" y="36.56" width="0.8" height="1.3" fill="#3b3b3b"/><rect x="31.1" y="36.56" width="0.8" height="1.3" fill="#3b3b3b"/><rect x="33.1" y="36.56" width="0.8" height="1.3" fill="#098658"/><rect x="35.1" y="36.56" width="0.8" height="1.3" fill="#3b3b3b"/><rect x="36.1" y="36.56" width="0.8" height="1.3" fill="#3b3b3b"/><rect x="38.1" y="36.56" width="0.8" height="1.3" fill="#098658"/><rect x="40.1" y="36.56" width="0.8" height="1.3" fill="#af00db"/><rect x="41.1" y="36.56" width="0.8" height="1.3" fill="#af00db"/><rect x="42.1" y="36.56" width="0.8" height="1.3" fill="#af00db"/><rect x="43.1" y="36.56" width="0.8" height="1.3" fill="#af00db"/><rect x="45.1" y="36.56" width="0.8" height="1.3" fill="#267f99"/><rect x="46.1" y="36.56" width="0.8" height="1.3" fill="#267f99"/><rect x="47.1" y="36.56" width="0.8" height="1.3" fill="#267f99"/><rect x="48.1" y="36.56" width="0.8" height="1.3" fill="#267f99"/><rect x="49.1" y="36.56" width="0.8" height="1.3" fill="#267f99"/><rect x="50.1" y="36.56" width="0.8" height="1.3" fill="#3b3b3b"/><rect x="51.1" y="36.56" width="0.8" height="1.3" fill="#3b3b3b"/><rect x="52.1" y="36.56" width="0.8" height="1.3" fill="#3b3b3b"/><rect x="53.1" y="36.56" width="0.8" height="1.3" fill="#3b3b3b"/><rect x="54.1" y="36.56" width="0.8" height="1.3" fill="#3b3b3b"/><rect x="4.1" y="38.58" width="0.8" height="1.3" fill="#af00db"/><rect x="5.1" y="38.58" width="0.8" height="1.3" fill="#af00db"/><rect x="6.1" y="38.58" width="0.8" height="1.3" fill="#af00db"/><rect x="7.1" y="38.58" width="0.8" height="1.3" fill="#af00db"/><rect x="9.1" y="38.58" width="0.8" height="1.3" fill="#795e26"/><rect x="10.1" y="38.58" width="0.8" height="1.3" fill="#795e26"/><rect x="11.1" y="38.58" width="0.8" height="1.3" fill="#795e26"/><rect x="12.1" y="38.58" width="0.8" height="1.3" fill="#795e26"/><rect x="13.1" y="38.58" width="0.8" height="1.3" fill="#795e26"/><rect x="14.1" y="38.58" width="0.8" height="1.3" fill="#795e26"/><rect x="15.1" y="38.58" width="0.8" height="1.3" fill="#795e26"/><rect x="16.1" y="38.58" width="0.8" height="1.3" fill="#795e26"/><rect x="17.1" y="38.58" width="0.8" height="1.3" fill="#795e26"/><rect x="18.1" y="38.58" width="0.8" height="1.3" fill="#795e26"/><rect x="19.1" y="38.58" width="0.8" height="1.3" fill="#3b3b3b"/><rect x="20.1" y="38.58" width="0.8" height="1.3" fill="#3b3b3b"/><rect x="21.1" y="38.58" width="0.8" height="1.3" fill="#3b3b3b"/><rect x="22.1" y="38.58" width="0.8" height="1.3" fill="#3b3b3b"/><rect x="23.1" y="38.58" width="0.8" height="1.3" fill="#3b3b3b"/><rect x="25.1" y="38.58" width="0.8" height="1.3" fill="#267f99"/><rect x="26.1" y="38.58" width="0.8" height="1.3" fill="#267f99"/><rect x="27.1" y="38.58" width="0.8" height="1.3" fill="#267f99"/><rect x="28.1" y="38.58" width="0.8" height="1.3" fill="#267f99"/><rect x="29.1" y="38.58" width="0.8" height="1.3" fill="#3b3b3b"/><rect x="30.1" y="38.58" width="0.8" height="1.3" fill="#3b3b3b"/><rect x="8.1" y="40.60" width="0.8" height="1.3" fill="#af00db"/><rect x="9.1" y="40.60" width="0.8" height="1.3" fill="#af00db"/><rect x="10.1" y="40.60" width="0.8" height="1.3" fill="#af00db"/><rect x="11.1" y="40.60" width="0.8" height="1.3" fill="#af00db"/><rect x="12.1" y="40.60" width="0.8" height="1.3" fill="#af00db"/><rect x="13.1" y="40.60" width="0.8" height="1.3" fill="#af00db"/><rect x="15.1" y="40.60" width="0.8" height="1.3" fill="#3b3b3b"/><rect x="16.1" y="40.60" width="0.8" height="1.3" fill="#3b3b3b"/><rect x="17.1" y="40.60" width="0.8" height="1.3" fill="#3b3b3b"/><rect x="19.1" y="40.60" width="0.8" height="1.3" fill="#795e26"/><rect x="20.1" y="40.60" width="0.8" height="1.3" fill="#795e26"/><rect x="21.1" y="40.60" width="0.8" height="1.3" fill="#795e26"/><rect x="22.1" y="40.60" width="0.8" height="1.3" fill="#795e26"/><rect x="23.1" y="40.60" width="0.8" height="1.3" fill="#795e26"/><rect x="24.1" y="40.60" width="0.8" height="1.3" fill="#795e26"/><rect x="25.1" y="40.60" width="0.8" height="1.3" fill="#795e26"/><rect x="26.1" y="40.60" width="0.8" height="1.3" fill="#795e26"/><rect x="27.1" y="40.60" width="0.8" height="1.3" fill="#795e26"/><rect x="28.1" y="40.60" width="0.8" height="1.3" fill="#795e26"/><rect x="29.1" y="40.60" width="0.8" height="1.3" fill="#795e26"/><rect x="30.1" y="40.60" width="0.8" height="1.3" fill="#795e26"/><rect x="31.1" y="40.60" width="0.8" height="1.3" fill="#795e26"/><rect x="32.1" y="40.60" width="0.8" height="1.3" fill="#795e26"/><rect x="33.1" y="40.60" width="0.8" height="1.3" fill="#795e26"/><rect x="34.1" y="40.60" width="0.8" height="1.3" fill="#795e26"/><rect x="35.1" y="40.60" width="0.8" height="1.3" fill="#795e26"/><rect x="36.1" y="40.60" width="0.8" height="1.3" fill="#3b3b3b"/><rect x="37.1" y="40.60" width="0.8" height="1.3" fill="#3b3b3b"/><rect x="38.1" y="40.60" width="0.8" height="1.3" fill="#3b3b3b"/><rect x="40.1" y="40.60" width="0.8" height="1.3" fill="#af00db"/><rect x="41.1" y="40.60" width="0.8" height="1.3" fill="#af00db"/><rect x="42.1" y="40.60" width="0.8" height="1.3" fill="#af00db"/><rect x="44.1" y="40.60" width="0.8" height="1.3" fill="#3b3b3b"/><rect x="45.1" y="40.60" width="0.8" height="1.3" fill="#3b3b3b"/><rect x="47.1" y="40.60" width="0.8" height="1.3" fill="#3b3b3b"/><rect x="49.1" y="40.60" width="0.8" height="1.3" fill="#af00db"/><rect x="50.1" y="40.60" width="0.8" height="1.3" fill="#af00db"/><rect x="52.1" y="40.60" width="0.8" height="1.3" fill="#3b3b3b"/><rect x="53.1" y="40.60" width="0.8" height="1.3" fill="#3b3b3b"/><rect x="54.1" y="40.60" width="0.8" height="1.3" fill="#3b3b3b"/><rect x="55.1" y="40.60" width="0.8" height="1.3" fill="#3b3b3b"/><rect x="56.1" y="40.60" width="0.8" height="1.3" fill="#795e26"/><rect x="57.1" y="40.60" width="0.8" height="1.3" fill="#795e26"/><rect x="58.1" y="40.60" width="0.8" height="1.3" fill="#795e26"/><rect x="59.1" y="40.60" width="0.8" height="1.3" fill="#795e26"/><rect x="60.1" y="40.60" width="0.8" height="1.3" fill="#795e26"/><rect x="61.1" y="40.60" width="0.8" height="1.3" fill="#3b3b3b"/><rect x="62.1" y="40.60" width="0.8" height="1.3" fill="#3b3b3b"/><rect x="63.1" y="40.60" width="0.8" height="1.3" fill="#3b3b3b"/><rect x="4.1" y="42.62" width="0.8" height="1.3" fill="#af00db"/><rect x="5.1" y="42.62" width="0.8" height="1.3" fill="#af00db"/><rect x="6.1" y="42.62" width="0.8" height="1.3" fill="#af00db"/><rect x="7.1" y="42.62" width="0.8" height="1.3" fill="#af00db"/><rect x="9.1" y="42.62" width="0.8" height="1.3" fill="#795e26"/><rect x="10.1" y="42.62" width="0.8" height="1.3" fill="#795e26"/><rect x="11.1" y="42.62" width="0.8" height="1.3" fill="#795e26"/><rect x="12.1" y="42.62" width="0.8" height="1.3" fill="#795e26"/><rect x="13.1" y="42.62" width="0.8" height="1.3" fill="#795e26"/><rect x="14.1" y="42.62" width="0.8" height="1.3" fill="#795e26"/><rect x="15.1" y="42.62" width="0.8" height="1.3" fill="#795e26"/><rect x="16.1" y="42.62" width="0.8" height="1.3" fill="#795e26"/><rect x="17.1" y="42.62" width="0.8" height="1.3" fill="#795e26"/><rect x="18.1" y="42.62" width="0.8" height="1.3" fill="#795e26"/><rect x="19.1" y="42.62" width="0.8" height="1.3" fill="#3b3b3b"/><rect x="20.1" y="42.62" width="0.8" height="1.3" fill="#3b3b3b"/><rect x="21.1" y="42.62" width="0.8" height="1.3" fill="#3b3b3b"/><rect x="22.1" y="42.62" width="0.8" height="1.3" fill="#3b3b3b"/><rect x="23.1" y="42.62" width="0.8" height="1.3" fill="#3b3b3b"/><rect x="25.1" y="42.62" width="0.8" height="1.3" fill="#267f99"/><rect x="26.1" y="42.62" width="0.8" height="1.3" fill="#267f99"/><rect x="27.1" y="42.62" width="0.8" height="1.3" fill="#267f99"/><rect x="28.1" y="42.62" width="0.8" height="1.3" fill="#267f99"/><rect x="29.1" y="42.62" width="0.8" height="1.3" fill="#3b3b3b"/><rect x="30.1" y="42.62" width="0.8" height="1.3" fill="#3b3b3b"/><rect x="8.1" y="44.64" width="0.8" height="1.3" fill="#af00db"/><rect x="9.1" y="44.64" width="0.8" height="1.3" fill="#af00db"/><rect x="10.1" y="44.64" width="0.8" height="1.3" fill="#af00db"/><rect x="11.1" y="44.64" width="0.8" height="1.3" fill="#af00db"/><rect x="12.1" y="44.64" width="0.8" height="1.3" fill="#af00db"/><rect x="13.1" y="44.64" width="0.8" height="1.3" fill="#af00db"/><rect x="15.1" y="44.64" width="0.8" height="1.3" fill="#3b3b3b"/><rect x="16.1" y="44.64" width="0.8" height="1.3" fill="#795e26"/><rect x="17.1" y="44.64" width="0.8" height="1.3" fill="#795e26"/><rect x="18.1" y="44.64" width="0.8" height="1.3" fill="#795e26"/><rect x="19.1" y="44.64" width="0.8" height="1.3" fill="#795e26"/><rect x="20.1" y="44.64" width="0.8" height="1.3" fill="#795e26"/><rect x="21.1" y="44.64" width="0.8" height="1.3" fill="#795e26"/><rect x="22.1" y="44.64" width="0.8" height="1.3" fill="#795e26"/><rect x="23.1" y="44.64" width="0.8" height="1.3" fill="#795e26"/><rect x="24.1" y="44.64" width="0.8" height="1.3" fill="#795e26"/><rect x="25.1" y="44.64" width="0.8" height="1.3" fill="#795e26"/><rect x="26.1" y="44.64" width="0.8" height="1.3" fill="#795e26"/><rect x="27.1" y="44.64" width="0.8" height="1.3" fill="#795e26"/><rect x="28.1" y="44.64" width="0.8" height="1.3" fill="#795e26"/><rect x="29.1" y="44.64" width="0.8" height="1.3" fill="#795e26"/><rect x="30.1" y="44.64" width="0.8" height="1.3" fill="#795e26"/><rect x="31.1" y="44.64" width="0.8" height="1.3" fill="#795e26"/><rect x="32.1" y="44.64" width="0.8" height="1.3" fill="#795e26"/><rect x="33.1" y="44.64" width="0.8" height="1.3" fill="#3b3b3b"/><rect x="34.1" y="44.64" width="0.8" height="1.3" fill="#3b3b3b"/><rect x="35.1" y="44.64" width="0.8" height="1.3" fill="#3b3b3b"/><rect x="37.1" y="44.64" width="0.8" height="1.3" fill="#af00db"/><rect x="38.1" y="44.64" width="0.8" height="1.3" fill="#af00db"/><rect x="39.1" y="44.64" width="0.8" height="1.3" fill="#af00db"/><rect x="41.1" y="44.64" width="0.8" height="1.3" fill="#3b3b3b"/><rect x="43.1" y="44.64" width="0.8" height="1.3" fill="#af00db"/><rect x="44.1" y="44.64" width="0.8" height="1.3" fill="#af00db"/><rect x="46.1" y="44.64" width="0.8" height="1.3" fill="#3b3b3b"/><rect x="47.1" y="44.64" width="0.8" height="1.3" fill="#3b3b3b"/><rect x="48.1" y="44.64" width="0.8" height="1.3" fill="#3b3b3b"/><rect x="49.1" y="44.64" width="0.8" height="1.3" fill="#3b3b3b"/><rect x="4.1" y="46.66" width="0.8" height="1.3" fill="#af00db"/><rect x="5.1" y="46.66" width="0.8" height="1.3" fill="#af00db"/><rect x="6.1" y="46.66" width="0.8" height="1.3" fill="#af00db"/><rect x="7.1" y="46.66" width="0.8" height="1.3" fill="#af00db"/><rect x="8.1" y="46.66" width="0.8" height="1.3" fill="#af00db"/><rect x="9.1" y="46.66" width="0.8" height="1.3" fill="#af00db"/><rect x="11.1" y="46.66" width="0.8" height="1.3" fill="#3b3b3b"/><rect x="12.1" y="46.66" width="0.8" height="1.3" fill="#3b3b3b"/><rect x="13.1" y="46.66" width="0.8" height="1.3" fill="#3b3b3b"/><rect x="0.1" y="52.72" width="0.8" height="1.3" fill="#0000ff"/><rect x="1.1" y="52.72" width="0.8" height="1.3" fill="#0000ff"/><rect x="2.1" y="52.72" width="0.8" height="1.3" fill="#0000ff"/><rect x="4.1" y="52.72" width="0.8" height="1.3" fill="#795e26"/><rect x="5.1" y="52.72" width="0.8" height="1.3" fill="#795e26"/><rect x="6.1" y="52.72" width="0.8" height="1.3" fill="#795e26"/><rect x="7.1" y="52.72" width="0.8" height="1.3" fill="#795e26"/><rect x="8.1" y="52.72" width="0.8" height="1.3" fill="#795e26"/><rect x="9.1" y="52.72" width="0.8" height="1.3" fill="#795e26"/><rect x="10.1" y="52.72" width="0.8" height="1.3" fill="#795e26"/><rect x="11.1" y="52.72" width="0.8" height="1.3" fill="#795e26"/><rect x="12.1" y="52.72" width="0.8" height="1.3" fill="#795e26"/><rect x="13.1" y="52.72" width="0.8" height="1.3" fill="#795e26"/><rect x="14.1" y="52.72" width="0.8" height="1.3" fill="#795e26"/><rect x="15.1" y="52.72" width="0.8" height="1.3" fill="#795e26"/><rect x="16.1" y="52.72" width="0.8" height="1.3" fill="#795e26"/><rect x="17.1" y="52.72" width="0.8" height="1.3" fill="#795e26"/><rect x="18.1" y="52.72" width="0.8" height="1.3" fill="#3b3b3b"/><rect x="19.1" y="52.72" width="0.8" height="1.3" fill="#3b3b3b"/><rect x="20.1" y="52.72" width="0.8" height="1.3" fill="#3b3b3b"/><rect x="21.1" y="52.72" width="0.8" height="1.3" fill="#3b3b3b"/><rect x="22.1" y="52.72" width="0.8" height="1.3" fill="#3b3b3b"/><rect x="23.1" y="52.72" width="0.8" height="1.3" fill="#3b3b3b"/><rect x="24.1" y="52.72" width="0.8" height="1.3" fill="#3b3b3b"/><rect x="26.1" y="52.72" width="0.8" height="1.3" fill="#3b3b3b"/><rect x="27.1" y="52.72" width="0.8" height="1.3" fill="#3b3b3b"/><rect x="28.1" y="52.72" width="0.8" height="1.3" fill="#3b3b3b"/><rect x="29.1" y="52.72" width="0.8" height="1.3" fill="#3b3b3b"/><rect x="30.1" y="52.72" width="0.8" height="1.3" fill="#3b3b3b"/><rect x="31.1" y="52.72" width="0.8" height="1.3" fill="#3b3b3b"/><rect x="32.1" y="52.72" width="0.8" height="1.3" fill="#3b3b3b"/><rect x="33.1" y="52.72" width="0.8" height="1.3" fill="#3b3b3b"/><rect x="34.1" y="52.72" width="0.8" height="1.3" fill="#3b3b3b"/><rect x="4.1" y="54.74" width="0.8" height="1.3" fill="#3b3b3b"/><rect x="5.1" y="54.74" width="0.8" height="1.3" fill="#3b3b3b"/><rect x="6.1" y="54.74" width="0.8" height="1.3" fill="#3b3b3b"/><rect x="7.1" y="54.74" width="0.8" height="1.3" fill="#3b3b3b"/><rect x="8.1" y="54.74" width="0.8" height="1.3" fill="#3b3b3b"/><rect x="9.1" y="54.74" width="0.8" height="1.3" fill="#3b3b3b"/><rect x="11.1" y="54.74" width="0.8" height="1.3" fill="#3b3b3b"/><rect x="13.1" y="54.74" width="0.8" height="1.3" fill="#3b3b3b"/><rect x="14.1" y="54.74" width="0.8" height="1.3" fill="#3b3b3b"/><rect x="15.1" y="54.74" width="0.8" height="1.3" fill="#3b3b3b"/><rect x="16.1" y="54.74" width="0.8" height="1.3" fill="#3b3b3b"/><rect x="17.1" y="54.74" width="0.8" height="1.3" fill="#3b3b3b"/><rect x="18.1" y="54.74" width="0.8" height="1.3" fill="#3b3b3b"/><rect x="19.1" y="54.74" width="0.8" height="1.3" fill="#795e26"/><rect x="20.1" y="54.74" width="0.8" height="1.3" fill="#795e26"/><rect x="21.1" y="54.74" width="0.8" height="1.3" fill="#795e26"/><rect x="22.1" y="54.74" width="0.8" height="1.3" fill="#3b3b3b"/><rect x="23.1" y="54.74" width="0.8" height="1.3" fill="#a31515"/><rect x="24.1" y="54.74" width="0.8" height="1.3" fill="#a31515"/><rect x="25.1" y="54.74" width="0.8" height="1.3" fill="#a31515"/><rect x="26.1" y="54.74" width="0.8" height="1.3" fill="#a31515"/><rect x="27.1" y="54.74" width="0.8" height="1.3" fill="#a31515"/><rect x="28.1" y="54.74" width="0.8" height="1.3" fill="#a31515"/><rect x="29.1" y="54.74" width="0.8" height="1.3" fill="#a31515"/><rect x="30.1" y="54.74" width="0.8" height="1.3" fill="#a31515"/><rect x="31.1" y="54.74" width="0.8" height="1.3" fill="#a31515"/><rect x="32.1" y="54.74" width="0.8" height="1.3" fill="#a31515"/><rect x="33.1" y="54.74" width="0.8" height="1.3" fill="#a31515"/><rect x="34.1" y="54.74" width="0.8" height="1.3" fill="#a31515"/><rect x="35.1" y="54.74" width="0.8" height="1.3" fill="#3b3b3b"/><rect x="37.1" y="54.74" width="0.8" height="1.3" fill="#af00db"/><rect x="38.1" y="54.74" width="0.8" height="1.3" fill="#af00db"/><rect x="40.1" y="54.74" width="0.8" height="1.3" fill="#3b3b3b"/><rect x="41.1" y="54.74" width="0.8" height="1.3" fill="#3b3b3b"/><rect x="42.1" y="54.74" width="0.8" height="1.3" fill="#3b3b3b"/><rect x="43.1" y="54.74" width="0.8" height="1.3" fill="#3b3b3b"/><rect x="44.1" y="54.74" width="0.8" height="1.3" fill="#3b3b3b"/><rect x="45.1" y="54.74" width="0.8" height="1.3" fill="#3b3b3b"/><rect x="46.1" y="54.74" width="0.8" height="1.3" fill="#795e26"/><rect x="47.1" y="54.74" width="0.8" height="1.3" fill="#795e26"/><rect x="48.1" y="54.74" width="0.8" height="1.3" fill="#795e26"/><rect x="49.1" y="54.74" width="0.8" height="1.3" fill="#3b3b3b"/><rect x="50.1" y="54.74" width="0.8" height="1.3" fill="#a31515"/><rect x="51.1" y="54.74" width="0.8" height="1.3" fill="#a31515"/><rect x="52.1" y="54.74" width="0.8" height="1.3" fill="#a31515"/><rect x="53.1" y="54.74" width="0.8" height="1.3" fill="#a31515"/><rect x="54.1" y="54.74" width="0.8" height="1.3" fill="#a31515"/><rect x="55.1" y="54.74" width="0.8" height="1.3" fill="#a31515"/><rect x="56.1" y="54.74" width="0.8" height="1.3" fill="#a31515"/><rect x="57.1" y="54.74" width="0.8" height="1.3" fill="#a31515"/><rect x="58.1" y="54.74" width="0.8" height="1.3" fill="#a31515"/><rect x="59.1" y="54.74" width="0.8" height="1.3" fill="#a31515"/><rect x="60.1" y="54.74" width="0.8" height="1.3" fill="#a31515"/><rect x="61.1" y="54.74" width="0.8" height="1.3" fill="#a31515"/><rect x="62.1" y="54.74" width="0.8" height="1.3" fill="#a31515"/><rect x="63.1" y="54.74" width="0.8" height="1.3" fill="#a31515"/><rect x="64.1" y="54.74" width="0.8" height="1.3" fill="#a31515"/><rect x="65.1" y="54.74" width="0.8" height="1.3" fill="#a31515"/><rect x="66.1" y="54.74" width="0.8" height="1.3" fill="#3b3b3b"/><rect x="68.1" y="54.74" width="0.8" height="1.3" fill="#3b3b3b"/><rect x="69.1" y="54.74" width="0.8" height="1.3" fill="#3b3b3b"/><rect x="70.1" y="54.74" width="0.8" height="1.3" fill="#3b3b3b"/><rect x="71.1" y="54.74" width="0.8" height="1.3" fill="#3b3b3b"/><rect x="72.1" y="54.74" width="0.8" height="1.3" fill="#795e26"/><rect x="73.1" y="54.74" width="0.8" height="1.3" fill="#795e26"/><rect x="74.1" y="54.74" width="0.8" height="1.3" fill="#795e26"/><rect x="75.1" y="54.74" width="0.8" height="1.3" fill="#3b3b3b"/><rect x="76.1" y="54.74" width="0.8" height="1.3" fill="#a31515"/><rect x="77.1" y="54.74" width="0.8" height="1.3" fill="#a31515"/><rect x="78.1" y="54.74" width="0.8" height="1.3" fill="#a31515"/><rect x="79.1" y="54.74" width="0.8" height="1.3" fill="#a31515"/><rect x="80.1" y="54.74" width="0.8" height="1.3" fill="#a31515"/><rect x="81.1" y="54.74" width="0.8" height="1.3" fill="#a31515"/><rect x="82.1" y="54.74" width="0.8" height="1.3" fill="#3b3b3b"/><rect x="84.1" y="54.74" width="0.8" height="1.3" fill="#3b3b3b"/><rect x="85.1" y="54.74" width="0.8" height="1.3" fill="#3b3b3b"/><rect x="86.1" y="54.74" width="0.8" height="1.3" fill="#3b3b3b"/><rect x="87.1" y="54.74" width="0.8" height="1.3" fill="#3b3b3b"/><rect x="88.1" y="54.74" width="0.8" height="1.3" fill="#795e26"/><rect x="89.1" y="54.74" width="0.8" height="1.3" fill="#795e26"/><rect x="90.1" y="54.74" width="0.8" height="1.3" fill="#795e26"/><rect x="91.1" y="54.74" width="0.8" height="1.3" fill="#3b3b3b"/><rect x="92.1" y="54.74" width="0.8" height="1.3" fill="#a31515"/><rect x="93.1" y="54.74" width="0.8" height="1.3" fill="#a31515"/><rect x="94.1" y="54.74" width="0.8" height="1.3" fill="#a31515"/><rect x="95.1" y="54.74" width="0.8" height="1.3" fill="#a31515"/><rect x="96.1" y="54.74" width="0.8" height="1.3" fill="#a31515"/><rect x="97.1" y="54.74" width="0.8" height="1.3" fill="#a31515"/><rect x="98.1" y="54.74" width="0.8" height="1.3" fill="#a31515"/><rect x="99.1" y="54.74" width="0.8" height="1.3" fill="#a31515"/><rect x="100.1" y="54.74" width="0.8" height="1.3" fill="#3b3b3b"/><rect x="4.1" y="56.76" width="0.8" height="1.3" fill="#af00db"/><rect x="5.1" y="56.76" width="0.8" height="1.3" fill="#af00db"/><rect x="7.1" y="56.76" width="0.8" height="1.3" fill="#3b3b3b"/><rect x="8.1" y="56.76" width="0.8" height="1.3" fill="#3b3b3b"/><rect x="9.1" y="56.76" width="0.8" height="1.3" fill="#3b3b3b"/><rect x="10.1" y="56.76" width="0.8" height="1.3" fill="#3b3b3b"/><rect x="11.1" y="56.76" width="0.8" height="1.3" fill="#3b3b3b"/><rect x="12.1" y="56.76" width="0.8" height="1.3" fill="#3b3b3b"/><rect x="14.1" y="56.76" width="0.8" height="1.3" fill="#3b3b3b"/><rect x="15.1" y="56.76" width="0.8" height="1.3" fill="#3b3b3b"/><rect x="17.1" y="56.76" width="0.8" height="1.3" fill="#a31515"/><rect x="18.1" y="56.76" width="0.8" height="1.3" fill="#a31515"/><rect x="19.1" y="56.76" width="0.8" height="1.3" fill="#a31515"/><rect x="20.1" y="56.76" width="0.8" height="1.3" fill="#a31515"/><rect x="21.1" y="56.76" width="0.8" height="1.3" fill="#a31515"/><rect x="22.1" y="56.76" width="0.8" height="1.3" fill="#a31515"/><rect x="23.1" y="56.76" width="0.8" height="1.3" fill="#a31515"/><rect x="24.1" y="56.76" width="0.8" height="1.3" fill="#a31515"/><rect x="25.1" y="56.76" width="0.8" height="1.3" fill="#a31515"/><rect x="26.1" y="56.76" width="0.8" height="1.3" fill="#3b3b3b"/><rect x="8.1" y="58.78" width="0.8" height="1.3" fill="#af00db"/><rect x="9.1" y="58.78" width="0.8" height="1.3" fill="#af00db"/><rect x="10.1" y="58.78" width="0.8" height="1.3" fill="#af00db"/><rect x="11.1" y="58.78" width="0.8" height="1.3" fill="#af00db"/><rect x="12.1" y="58.78" width="0.8" height="1.3" fill="#af00db"/><rect x="13.1" y="58.78" width="0.8" height="1.3" fill="#af00db"/><rect x="15.1" y="58.78" width="0.8" height="1.3" fill="#795e26"/><rect x="16.1" y="58.78" width="0.8" height="1.3" fill="#795e26"/><rect x="17.1" y="58.78" width="0.8" height="1.3" fill="#795e26"/><rect x="18.1" y="58.78" width="0.8" height="1.3" fill="#795e26"/><rect x="19.1" y="58.78" width="0.8" height="1.3" fill="#795e26"/><rect x="20.1" y="58.78" width="0.8" height="1.3" fill="#795e26"/><rect x="21.1" y="58.78" width="0.8" height="1.3" fill="#795e26"/><rect x="22.1" y="58.78" width="0.8" height="1.3" fill="#3b3b3b"/><rect x="23.1" y="58.78" width="0.8" height="1.3" fill="#3b3b3b"/><rect x="4.1" y="62.82" width="0.8" height="1.3" fill="#af00db"/><rect x="5.1" y="62.82" width="0.8" height="1.3" fill="#af00db"/><rect x="6.1" y="62.82" width="0.8" height="1.3" fill="#af00db"/><rect x="7.1" y="62.82" width="0.8" height="1.3" fill="#3b3b3b"/><rect x="8.1" y="64.84" width="0.8" height="1.3" fill="#af00db"/><rect x="9.1" y="64.84" width="0.8" height="1.3" fill="#af00db"/><rect x="11.1" y="64.84" width="0.8" height="1.3" fill="#af00db"/><rect x="12.1" y="64.84" width="0.8" height="1.3" fill="#af00db"/><rect x="13.1" y="64.84" width="0.8" height="1.3" fill="#af00db"/><rect x="15.1" y="64.84" width="0.8" height="1.3" fill="#3b3b3b"/><rect x="16.1" y="64.84" width="0.8" height="1.3" fill="#3b3b3b"/><rect x="17.1" y="64.84" width="0.8" height="1.3" fill="#3b3b3b"/><rect x="18.1" y="64.84" width="0.8" height="1.3" fill="#3b3b3b"/><rect x="19.1" y="64.84" width="0.8" height="1.3" fill="#3b3b3b"/><rect x="20.1" y="64.84" width="0.8" height="1.3" fill="#3b3b3b"/><rect x="12.1" y="66.86" width="0.8" height="1.3" fill="#af00db"/><rect x="13.1" y="66.86" width="0.8" height="1.3" fill="#af00db"/><rect x="14.1" y="66.86" width="0.8" height="1.3" fill="#af00db"/><rect x="15.1" y="66.86" width="0.8" height="1.3" fill="#af00db"/><rect x="16.1" y="66.86" width="0.8" height="1.3" fill="#af00db"/><rect x="17.1" y="66.86" width="0.8" height="1.3" fill="#af00db"/><rect x="19.1" y="66.86" width="0.8" height="1.3" fill="#795e26"/><rect x="20.1" y="66.86" width="0.8" height="1.3" fill="#795e26"/><rect x="21.1" y="66.86" width="0.8" height="1.3" fill="#795e26"/><rect x="22.1" y="66.86" width="0.8" height="1.3" fill="#795e26"/><rect x="23.1" y="66.86" width="0.8" height="1.3" fill="#795e26"/><rect x="24.1" y="66.86" width="0.8" height="1.3" fill="#3b3b3b"/><rect x="25.1" y="66.86" width="0.8" height="1.3" fill="#098658"/><rect x="26.1" y="66.86" width="0.8" height="1.3" fill="#098658"/><rect x="27.1" y="66.86" width="0.8" height="1.3" fill="#098658"/><rect x="28.1" y="66.86" width="0.8" height="1.3" fill="#3b3b3b"/><rect x="30.1" y="66.86" width="0.8" height="1.3" fill="#a31515"/><rect x="31.1" y="66.86" width="0.8" height="1.3" fill="#a31515"/><rect x="32.1" y="66.86" width="0.8" height="1.3" fill="#a31515"/><rect x="33.1" y="66.86" width="0.8" height="1.3" fill="#a31515"/><rect x="34.1" y="66.86" width="0.8" height="1.3" fill="#a31515"/><rect x="35.1" y="66.86" width="0.8" height="1.3" fill="#a31515"/><rect x="36.1" y="66.86" width="0.8" height="1.3" fill="#a31515"/><rect x="37.1" y="66.86" width="0.8" height="1.3" fill="#a31515"/><rect x="38.1" y="66.86" width="0.8" height="1.3" fill="#a31515"/><rect x="39.1" y="66.86" width="0.8" height="1.3" fill="#a31515"/><rect x="40.1" y="66.86" width="0.8" height="1.3" fill="#a31515"/><rect x="41.1" y="66.86" width="0.8" height="1.3" fill="#a31515"/><rect x="42.1" y="66.86" width="0.8" height="1.3" fill="#a31515"/><rect x="43.1" y="66.86" width="0.8" height="1.3" fill="#a31515"/><rect x="44.1" y="66.86" width="0.8" height="1.3" fill="#a31515"/><rect x="45.1" y="66.86" width="0.8" height="1.3" fill="#a31515"/><rect x="46.1" y="66.86" width="0.8" height="1.3" fill="#a31515"/><rect x="47.1" y="66.86" width="0.8" height="1.3" fill="#a31515"/><rect x="48.1" y="66.86" width="0.8" height="1.3" fill="#a31515"/><rect x="49.1" y="66.86" width="0.8" height="1.3" fill="#a31515"/><rect x="50.1" y="66.86" width="0.8" height="1.3" fill="#a31515"/><rect x="51.1" y="66.86" width="0.8" height="1.3" fill="#a31515"/><rect x="52.1" y="66.86" width="0.8" height="1.3" fill="#a31515"/><rect x="53.1" y="66.86" width="0.8" height="1.3" fill="#a31515"/><rect x="54.1" y="66.86" width="0.8" height="1.3" fill="#a31515"/><rect x="55.1" y="66.86" width="0.8" height="1.3" fill="#a31515"/><rect x="56.1" y="66.86" width="0.8" height="1.3" fill="#a31515"/><rect x="57.1" y="66.86" width="0.8" height="1.3" fill="#a31515"/><rect x="58.1" y="66.86" width="0.8" height="1.3" fill="#a31515"/><rect x="59.1" y="66.86" width="0.8" height="1.3" fill="#a31515"/><rect x="60.1" y="66.86" width="0.8" height="1.3" fill="#a31515"/><rect x="61.1" y="66.86" width="0.8" height="1.3" fill="#a31515"/><rect x="62.1" y="66.86" width="0.8" height="1.3" fill="#a31515"/><rect x="63.1" y="66.86" width="0.8" height="1.3" fill="#a31515"/><rect x="64.1" y="66.86" width="0.8" height="1.3" fill="#a31515"/><rect x="65.1" y="66.86" width="0.8" height="1.3" fill="#a31515"/><rect x="66.1" y="66.86" width="0.8" height="1.3" fill="#a31515"/><rect x="67.1" y="66.86" width="0.8" height="1.3" fill="#3b3b3b"/><rect x="8.1" y="70.90" width="0.8" height="1.3" fill="#3b3b3b"/><rect x="9.1" y="70.90" width="0.8" height="1.3" fill="#3b3b3b"/><rect x="10.1" y="70.90" width="0.8" height="1.3" fill="#3b3b3b"/><rect x="11.1" y="70.90" width="0.8" height="1.3" fill="#3b3b3b"/><rect x="12.1" y="70.90" width="0.8" height="1.3" fill="#3b3b3b"/><rect x="13.1" y="70.90" width="0.8" height="1.3" fill="#3b3b3b"/><rect x="15.1" y="70.90" width="0.8" height="1.3" fill="#3b3b3b"/><rect x="17.1" y="70.90" width="0.8" height="1.3" fill="#3b3b3b"/><rect x="18.1" y="70.90" width="0.8" height="1.3" fill="#3b3b3b"/><rect x="19.1" y="70.90" width="0.8" height="1.3" fill="#3b3b3b"/><rect x="20.1" y="70.90" width="0.8" height="1.3" fill="#3b3b3b"/><rect x="21.1" y="70.90" width="0.8" height="1.3" fill="#3b3b3b"/><rect x="22.1" y="70.90" width="0.8" height="1.3" fill="#3b3b3b"/><rect x="23.1" y="70.90" width="0.8" height="1.3" fill="#795e26"/><rect x="24.1" y="70.90" width="0.8" height="1.3" fill="#795e26"/><rect x="25.1" y="70.90" width="0.8" height="1.3" fill="#795e26"/><rect x="26.1" y="70.90" width="0.8" height="1.3" fill="#3b3b3b"/><rect x="27.1" y="70.90" width="0.8" height="1.3" fill="#a31515"/><rect x="28.1" y="70.90" width="0.8" height="1.3" fill="#a31515"/><rect x="29.1" y="70.90" width="0.8" height="1.3" fill="#a31515"/><rect x="30.1" y="70.90" width="0.8" height="1.3" fill="#a31515"/><rect x="31.1" y="70.90" width="0.8" height="1.3" fill="#a31515"/><rect x="32.1" y="70.90" width="0.8" height="1.3" fill="#a31515"/><rect x="33.1" y="70.90" width="0.8" height="1.3" fill="#a31515"/><rect x="34.1" y="70.90" width="0.8" height="1.3" fill="#a31515"/><rect x="35.1" y="70.90" width="0.8" height="1.3" fill="#a31515"/><rect x="36.1" y="70.90" width="0.8" height="1.3" fill="#a31515"/><rect x="37.1" y="70.90" width="0.8" height="1.3" fill="#a31515"/><rect x="38.1" y="70.90" width="0.8" height="1.3" fill="#a31515"/><rect x="39.1" y="70.90" width="0.8" height="1.3" fill="#a31515"/><rect x="40.1" y="70.90" width="0.8" height="1.3" fill="#a31515"/><rect x="41.1" y="70.90" width="0.8" height="1.3" fill="#a31515"/><rect x="42.1" y="70.90" width="0.8" height="1.3" fill="#a31515"/><rect x="43.1" y="70.90" width="0.8" height="1.3" fill="#a31515"/><rect x="44.1" y="70.90" width="0.8" height="1.3" fill="#a31515"/><rect x="45.1" y="70.90" width="0.8" height="1.3" fill="#a31515"/><rect x="46.1" y="70.90" width="0.8" height="1.3" fill="#a31515"/><rect x="47.1" y="70.90" width="0.8" height="1.3" fill="#a31515"/><rect x="48.1" y="70.90" width="0.8" height="1.3" fill="#a31515"/><rect x="49.1" y="70.90" width="0.8" height="1.3" fill="#a31515"/><rect x="50.1" y="70.90" width="0.8" height="1.3" fill="#3b3b3b"/><rect x="52.1" y="70.90" width="0.8" height="1.3" fill="#af00db"/><rect x="53.1" y="70.90" width="0.8" height="1.3" fill="#af00db"/><rect x="55.1" y="70.90" width="0.8" height="1.3" fill="#3b3b3b"/><rect x="56.1" y="70.90" width="0.8" height="1.3" fill="#3b3b3b"/><rect x="8.1" y="72.92" width="0.8" height="1.3" fill="#3b3b3b"/><rect x="9.1" y="72.92" width="0.8" height="1.3" fill="#3b3b3b"/><rect x="10.1" y="72.92" width="0.8" height="1.3" fill="#3b3b3b"/><rect x="11.1" y="72.92" width="0.8" height="1.3" fill="#3b3b3b"/><rect x="12.1" y="72.92" width="0.8" height="1.3" fill="#3b3b3b"/><rect x="14.1" y="72.92" width="0.8" height="1.3" fill="#3b3b3b"/><rect x="16.1" y="72.92" width="0.8" height="1.3" fill="#267f99"/><rect x="17.1" y="72.92" width="0.8" height="1.3" fill="#267f99"/><rect x="18.1" y="72.92" width="0.8" height="1.3" fill="#267f99"/><rect x="19.1" y="72.92" width="0.8" height="1.3" fill="#3b3b3b"/><rect x="20.1" y="72.92" width="0.8" height="1.3" fill="#3b3b3b"/><rect x="21.1" y="72.92" width="0.8" height="1.3" fill="#3b3b3b"/><rect x="22.1" y="72.92" width="0.8" height="1.3" fill="#3b3b3b"/><rect x="23.1" y="72.92" width="0.8" height="1.3" fill="#3b3b3b"/><rect x="24.1" y="72.92" width="0.8" height="1.3" fill="#3b3b3b"/><rect x="25.1" y="72.92" width="0.8" height="1.3" fill="#3b3b3b"/><rect x="26.1" y="72.92" width="0.8" height="1.3" fill="#3b3b3b"/><rect x="27.1" y="72.92" width="0.8" height="1.3" fill="#795e26"/><rect x="28.1" y="72.92" width="0.8" height="1.3" fill="#795e26"/><rect x="29.1" y="72.92" width="0.8" height="1.3" fill="#795e26"/><rect x="30.1" y="72.92" width="0.8" height="1.3" fill="#3b3b3b"/><rect x="31.1" y="72.92" width="0.8" height="1.3" fill="#a31515"/><rect x="32.1" y="72.92" width="0.8" height="1.3" fill="#a31515"/><rect x="33.1" y="72.92" width="0.8" height="1.3" fill="#a31515"/><rect x="34.1" y="72.92" width="0.8" height="1.3" fill="#a31515"/><rect x="35.1" y="72.92" width="0.8" height="1.3" fill="#a31515"/><rect x="36.1" y="72.92" width="0.8" height="1.3" fill="#a31515"/><rect x="37.1" y="72.92" width="0.8" height="1.3" fill="#a31515"/><rect x="38.1" y="72.92" width="0.8" height="1.3" fill="#3b3b3b"/><rect x="40.1" y="72.92" width="0.8" height="1.3" fill="#098658"/><rect x="41.1" y="72.92" width="0.8" height="1.3" fill="#098658"/><rect x="42.1" y="72.92" width="0.8" height="1.3" fill="#3b3b3b"/><rect x="43.1" y="72.92" width="0.8" height="1.3" fill="#3b3b3b"/><rect x="8.1" y="76.96" width="0.8" height="1.3" fill="#008000"/><rect x="9.1" y="76.96" width="0.8" height="1.3" fill="#008000"/><rect x="10.1" y="76.96" width="0.8" height="1.3" fill="#008000"/><rect x="11.1" y="76.96" width="0.8" height="1.3" fill="#008000"/><rect x="12.1" y="76.96" width="0.8" height="1.3" fill="#008000"/><rect x="13.1" y="76.96" width="0.8" height="1.3" fill="#008000"/><rect x="14.1" y="76.96" width="0.8" height="1.3" fill="#008000"/><rect x="15.1" y="76.96" width="0.8" height="1.3" fill="#008000"/><rect x="16.1" y="76.96" width="0.8" height="1.3" fill="#008000"/><rect x="17.1" y="76.96" width="0.8" height="1.3" fill="#008000"/><rect x="18.1" y="76.96" width="0.8" height="1.3" fill="#008000"/><rect x="19.1" y="76.96" width="0.8" height="1.3" fill="#008000"/><rect x="20.1" y="76.96" width="0.8" height="1.3" fill="#008000"/><rect x="21.1" y="76.96" width="0.8" height="1.3" fill="#008000"/><rect x="22.1" y="76.96" width="0.8" height="1.3" fill="#008000"/><rect x="8.1" y="78.98" width="0.8" height="1.3" fill="#3b3b3b"/><rect x="9.1" y="78.98" width="0.8" height="1.3" fill="#3b3b3b"/><rect x="10.1" y="78.98" width="0.8" height="1.3" fill="#3b3b3b"/><rect x="11.1" y="78.98" width="0.8" height="1.3" fill="#3b3b3b"/><rect x="12.1" y="78.98" width="0.8" height="1.3" fill="#3b3b3b"/><rect x="13.1" y="78.98" width="0.8" height="1.3" fill="#3b3b3b"/><rect x="14.1" y="78.98" width="0.8" height="1.3" fill="#3b3b3b"/><rect x="15.1" y="78.98" width="0.8" height="1.3" fill="#3b3b3b"/><rect x="16.1" y="78.98" width="0.8" height="1.3" fill="#3b3b3b"/><rect x="18.1" y="78.98" width="0.8" height="1.3" fill="#3b3b3b"/><rect x="20.1" y="78.98" width="0.8" height="1.3" fill="#3b3b3b"/><rect x="21.1" y="78.98" width="0.8" height="1.3" fill="#3b3b3b"/><rect x="8.1" y="81.00" width="0.8" height="1.3" fill="#3b3b3b"/><rect x="9.1" y="81.00" width="0.8" height="1.3" fill="#3b3b3b"/><rect x="10.1" y="81.00" width="0.8" height="1.3" fill="#3b3b3b"/><rect x="11.1" y="81.00" width="0.8" height="1.3" fill="#3b3b3b"/><rect x="12.1" y="81.00" width="0.8" height="1.3" fill="#3b3b3b"/><rect x="13.1" y="81.00" width="0.8" height="1.3" fill="#3b3b3b"/><rect x="14.1" y="81.00" width="0.8" height="1.3" fill="#3b3b3b"/><rect x="16.1" y="81.00" width="0.8" height="1.3" fill="#3b3b3b"/><rect x="18.1" y="81.00" width="0.8" height="1.3" fill="#3b3b3b"/><rect x="19.1" y="81.00" width="0.8" height="1.3" fill="#3b3b3b"/><rect x="8.1" y="85.04" width="0.8" height="1.3" fill="#af00db"/><rect x="9.1" y="85.04" width="0.8" height="1.3" fill="#af00db"/><rect x="10.1" y="85.04" width="0.8" height="1.3" fill="#af00db"/><rect x="11.1" y="85.04" width="0.8" height="1.3" fill="#af00db"/><rect x="12.1" y="85.04" width="0.8" height="1.3" fill="#af00db"/><rect x="14.1" y="85.04" width="0.8" height="1.3" fill="#0000ff"/><rect x="15.1" y="85.04" width="0.8" height="1.3" fill="#0000ff"/><rect x="16.1" y="85.04" width="0.8" height="1.3" fill="#0000ff"/><rect x="17.1" y="85.04" width="0.8" height="1.3" fill="#0000ff"/><rect x="18.1" y="85.04" width="0.8" height="1.3" fill="#3b3b3b"/><rect x="12.1" y="87.06" width="0.8" height="1.3" fill="#3b3b3b"/><rect x="13.1" y="87.06" width="0.8" height="1.3" fill="#3b3b3b"/><rect x="14.1" y="87.06" width="0.8" height="1.3" fill="#3b3b3b"/><rect x="15.1" y="87.06" width="0.8" height="1.3" fill="#3b3b3b"/><rect x="16.1" y="87.06" width="0.8" height="1.3" fill="#3b3b3b"/><rect x="17.1" y="87.06" width="0.8" height="1.3" fill="#3b3b3b"/><rect x="18.1" y="87.06" width="0.8" height="1.3" fill="#3b3b3b"/><rect x="19.1" y="87.06" width="0.8" height="1.3" fill="#3b3b3b"/><rect x="21.1" y="87.06" width="0.8" height="1.3" fill="#3b3b3b"/><rect x="23.1" y="87.06" width="0.8" height="1.3" fill="#3b3b3b"/><rect x="24.1" y="87.06" width="0.8" height="1.3" fill="#3b3b3b"/><rect x="25.1" y="87.06" width="0.8" height="1.3" fill="#3b3b3b"/><rect x="26.1" y="87.06" width="0.8" height="1.3" fill="#3b3b3b"/><rect x="27.1" y="87.06" width="0.8" height="1.3" fill="#3b3b3b"/><rect x="28.1" y="87.06" width="0.8" height="1.3" fill="#3b3b3b"/><rect x="29.1" y="87.06" width="0.8" height="1.3" fill="#795e26"/><rect x="30.1" y="87.06" width="0.8" height="1.3" fill="#795e26"/><rect x="31.1" y="87.06" width="0.8" height="1.3" fill="#795e26"/><rect x="32.1" y="87.06" width="0.8" height="1.3" fill="#795e26"/><rect x="33.1" y="87.06" width="0.8" height="1.3" fill="#3b3b3b"/><rect x="34.1" y="87.06" width="0.8" height="1.3" fill="#3b3b3b"/><rect x="35.1" y="87.06" width="0.8" height="1.3" fill="#3b3b3b"/><rect x="36.1" y="87.06" width="0.8" height="1.3" fill="#3b3b3b"/><rect x="37.1" y="87.06" width="0.8" height="1.3" fill="#3b3b3b"/><rect x="38.1" y="87.06" width="0.8" height="1.3" fill="#3b3b3b"/><rect x="39.1" y="87.06" width="0.8" height="1.3" fill="#3b3b3b"/><rect x="40.1" y="87.06" width="0.8" height="1.3" fill="#3b3b3b"/><rect x="41.1" y="87.06" width="0.8" height="1.3" fill="#3b3b3b"/><rect x="42.1" y="87.06" width="0.8" height="1.3" fill="#3b3b3b"/><rect x="43.1" y="87.06" width="0.8" height="1.3" fill="#3b3b3b"/><rect x="12.1" y="89.08" width="0.8" height="1.3" fill="#3b3b3b"/><rect x="13.1" y="89.08" width="0.8" height="1.3" fill="#3b3b3b"/><rect x="14.1" y="89.08" width="0.8" height="1.3" fill="#3b3b3b"/><rect x="15.1" y="89.08" width="0.8" height="1.3" fill="#3b3b3b"/><rect x="16.1" y="89.08" width="0.8" height="1.3" fill="#3b3b3b"/><rect x="17.1" y="89.08" width="0.8" height="1.3" fill="#3b3b3b"/><rect x="18.1" y="89.08" width="0.8" height="1.3" fill="#3b3b3b"/><rect x="19.1" y="89.08" width="0.8" height="1.3" fill="#3b3b3b"/><rect x="20.1" y="89.08" width="0.8" height="1.3" fill="#3b3b3b"/><rect x="21.1" y="89.08" width="0.8" height="1.3" fill="#3b3b3b"/><rect x="22.1" y="89.08" width="0.8" height="1.3" fill="#795e26"/><rect x="23.1" y="89.08" width="0.8" height="1.3" fill="#795e26"/><rect x="24.1" y="89.08" width="0.8" height="1.3" fill="#795e26"/><rect x="25.1" y="89.08" width="0.8" height="1.3" fill="#795e26"/><rect x="26.1" y="89.08" width="0.8" height="1.3" fill="#795e26"/><rect x="27.1" y="89.08" width="0.8" height="1.3" fill="#795e26"/><rect x="28.1" y="89.08" width="0.8" height="1.3" fill="#3b3b3b"/><rect x="29.1" y="89.08" width="0.8" height="1.3" fill="#3b3b3b"/><rect x="30.1" y="89.08" width="0.8" height="1.3" fill="#3b3b3b"/><rect x="31.1" y="89.08" width="0.8" height="1.3" fill="#3b3b3b"/><rect x="32.1" y="89.08" width="0.8" height="1.3" fill="#3b3b3b"/><rect x="33.1" y="89.08" width="0.8" height="1.3" fill="#3b3b3b"/><rect x="34.1" y="89.08" width="0.8" height="1.3" fill="#3b3b3b"/><rect x="35.1" y="89.08" width="0.8" height="1.3" fill="#3b3b3b"/><rect x="36.1" y="89.08" width="0.8" height="1.3" fill="#3b3b3b"/><rect x="37.1" y="89.08" width="0.8" height="1.3" fill="#3b3b3b"/><rect x="38.1" y="89.08" width="0.8" height="1.3" fill="#795e26"/><rect x="39.1" y="89.08" width="0.8" height="1.3" fill="#795e26"/><rect x="40.1" y="89.08" width="0.8" height="1.3" fill="#795e26"/><rect x="41.1" y="89.08" width="0.8" height="1.3" fill="#3b3b3b"/><rect x="42.1" y="89.08" width="0.8" height="1.3" fill="#a31515"/><rect x="43.1" y="89.08" width="0.8" height="1.3" fill="#a31515"/><rect x="44.1" y="89.08" width="0.8" height="1.3" fill="#a31515"/><rect x="45.1" y="89.08" width="0.8" height="1.3" fill="#a31515"/><rect x="46.1" y="89.08" width="0.8" height="1.3" fill="#a31515"/><rect x="47.1" y="89.08" width="0.8" height="1.3" fill="#a31515"/><rect x="48.1" y="89.08" width="0.8" height="1.3" fill="#a31515"/><rect x="49.1" y="89.08" width="0.8" height="1.3" fill="#3b3b3b"/><rect x="51.1" y="89.08" width="0.8" height="1.3" fill="#3b3b3b"/><rect x="52.1" y="89.08" width="0.8" height="1.3" fill="#3b3b3b"/><rect x="53.1" y="89.08" width="0.8" height="1.3" fill="#3b3b3b"/><rect x="54.1" y="89.08" width="0.8" height="1.3" fill="#3b3b3b"/><rect x="12.1" y="93.12" width="0.8" height="1.3" fill="#af00db"/><rect x="13.1" y="93.12" width="0.8" height="1.3" fill="#af00db"/><rect x="15.1" y="93.12" width="0.8" height="1.3" fill="#a31515"/><rect x="16.1" y="93.12" width="0.8" height="1.3" fill="#a31515"/><rect x="17.1" y="93.12" width="0.8" height="1.3" fill="#a31515"/><rect x="18.1" y="93.12" width="0.8" height="1.3" fill="#a31515"/><rect x="19.1" y="93.12" width="0.8" height="1.3" fill="#a31515"/><rect x="20.1" y="93.12" width="0.8" height="1.3" fill="#a31515"/><rect x="21.1" y="93.12" width="0.8" height="1.3" fill="#a31515"/><rect x="22.1" y="93.12" width="0.8" height="1.3" fill="#a31515"/><rect x="23.1" y="93.12" width="0.8" height="1.3" fill="#a31515"/><rect x="24.1" y="93.12" width="0.8" height="1.3" fill="#a31515"/><rect x="25.1" y="93.12" width="0.8" height="1.3" fill="#a31515"/><rect x="26.1" y="93.12" width="0.8" height="1.3" fill="#a31515"/><rect x="27.1" y="93.12" width="0.8" height="1.3" fill="#a31515"/><rect x="28.1" y="93.12" width="0.8" height="1.3" fill="#a31515"/><rect x="29.1" y="93.12" width="0.8" height="1.3" fill="#a31515"/><rect x="30.1" y="93.12" width="0.8" height="1.3" fill="#a31515"/><rect x="31.1" y="93.12" width="0.8" height="1.3" fill="#a31515"/><rect x="32.1" y="93.12" width="0.8" height="1.3" fill="#a31515"/><rect x="34.1" y="93.12" width="0.8" height="1.3" fill="#af00db"/><rect x="35.1" y="93.12" width="0.8" height="1.3" fill="#af00db"/><rect x="36.1" y="93.12" width="0.8" height="1.3" fill="#af00db"/><rect x="38.1" y="93.12" width="0.8" height="1.3" fill="#af00db"/><rect x="39.1" y="93.12" width="0.8" height="1.3" fill="#af00db"/><rect x="41.1" y="93.12" width="0.8" height="1.3" fill="#3b3b3b"/><rect x="42.1" y="93.12" width="0.8" height="1.3" fill="#3b3b3b"/><rect x="43.1" y="93.12" width="0.8" height="1.3" fill="#3b3b3b"/><rect x="44.1" y="93.12" width="0.8" height="1.3" fill="#3b3b3b"/><rect x="45.1" y="93.12" width="0.8" height="1.3" fill="#3b3b3b"/><rect x="46.1" y="93.12" width="0.8" height="1.3" fill="#3b3b3b"/><rect x="47.1" y="93.12" width="0.8" height="1.3" fill="#3b3b3b"/><rect x="48.1" y="93.12" width="0.8" height="1.3" fill="#3b3b3b"/><rect x="49.1" y="93.12" width="0.8" height="1.3" fill="#3b3b3b"/><rect x="16.1" y="95.14" width="0.8" height="1.3" fill="#af00db"/><rect x="17.1" y="95.14" width="0.8" height="1.3" fill="#af00db"/><rect x="18.1" y="95.14" width="0.8" height="1.3" fill="#af00db"/><rect x="19.1" y="95.14" width="0.8" height="1.3" fill="#af00db"/><rect x="20.1" y="95.14" width="0.8" height="1.3" fill="#af00db"/><rect x="12.1" y="97.16" width="0.8" height="1.3" fill="#3b3b3b"/><rect x="13.1" y="97.16" width="0.8" height="1.3" fill="#3b3b3b"/><rect x="14.1" y="97.16" width="0.8" height="1.3" fill="#3b3b3b"/><rect x="15.1" y="97.16" width="0.8" height="1.3" fill="#3b3b3b"/><rect x="16.1" y="97.16" width="0.8" height="1.3" fill="#3b3b3b"/><rect x="17.1" y="97.16" width="0.8" height="1.3" fill="#3b3b3b"/><rect x="18.1" y="97.16" width="0.8" height="1.3" fill="#3b3b3b"/><rect x="19.1" y="97.16" width="0.8" height="1.3" fill="#3b3b3b"/><rect x="20.1" y="97.16" width="0.8" height="1.3" fill="#a31515"/><rect x="21.1" y="97.16" width="0.8" height="1.3" fill="#a31515"/><rect x="22.1" y="97.16" width="0.8" height="1.3" fill="#a31515"/><rect x="23.1" y="97.16" width="0.8" height="1.3" fill="#a31515"/><rect x="24.1" y="97.16" width="0.8" height="1.3" fill="#a31515"/><rect x="25.1" y="97.16" width="0.8" height="1.3" fill="#a31515"/><rect x="26.1" y="97.16" width="0.8" height="1.3" fill="#a31515"/><rect x="27.1" y="97.16" width="0.8" height="1.3" fill="#a31515"/><rect x="28.1" y="97.16" width="0.8" height="1.3" fill="#a31515"/><rect x="29.1" y="97.16" width="0.8" height="1.3" fill="#a31515"/><rect x="30.1" y="97.16" width="0.8" height="1.3" fill="#a31515"/><rect x="31.1" y="97.16" width="0.8" height="1.3" fill="#a31515"/><rect x="32.1" y="97.16" width="0.8" height="1.3" fill="#a31515"/><rect x="33.1" y="97.16" width="0.8" height="1.3" fill="#a31515"/><rect x="34.1" y="97.16" width="0.8" height="1.3" fill="#a31515"/><rect x="35.1" y="97.16" width="0.8" height="1.3" fill="#a31515"/><rect x="36.1" y="97.16" width="0.8" height="1.3" fill="#a31515"/><rect x="37.1" y="97.16" width="0.8" height="1.3" fill="#a31515"/><rect x="38.1" y="97.16" width="0.8" height="1.3" fill="#a31515"/><rect x="39.1" y="97.16" width="0.8" height="1.3" fill="#3b3b3b"/><rect x="41.1" y="97.16" width="0.8" height="1.3" fill="#3b3b3b"/><rect x="43.1" y="97.16" width="0.8" height="1.3" fill="#3b3b3b"/><rect x="44.1" y="97.16" width="0.8" height="1.3" fill="#3b3b3b"/><rect x="45.1" y="97.16" width="0.8" height="1.3" fill="#3b3b3b"/><rect x="46.1" y="97.16" width="0.8" height="1.3" fill="#3b3b3b"/><rect x="47.1" y="97.16" width="0.8" height="1.3" fill="#3b3b3b"/><rect x="48.1" y="97.16" width="0.8" height="1.3" fill="#3b3b3b"/><rect x="49.1" y="97.16" width="0.8" height="1.3" fill="#3b3b3b"/><rect x="50.1" y="97.16" width="0.8" height="1.3" fill="#3b3b3b"/><rect x="51.1" y="97.16" width="0.8" height="1.3" fill="#3b3b3b"/><rect x="52.1" y="97.16" width="0.8" height="1.3" fill="#a31515"/><rect x="53.1" y="97.16" width="0.8" height="1.3" fill="#a31515"/><rect x="54.1" y="97.16" width="0.8" height="1.3" fill="#a31515"/><rect x="55.1" y="97.16" width="0.8" height="1.3" fill="#a31515"/><rect x="56.1" y="97.16" width="0.8" height="1.3" fill="#a31515"/><rect x="57.1" y="97.16" width="0.8" height="1.3" fill="#a31515"/><rect x="58.1" y="97.16" width="0.8" height="1.3" fill="#a31515"/><rect x="59.1" y="97.16" width="0.8" height="1.3" fill="#a31515"/><rect x="60.1" y="97.16" width="0.8" height="1.3" fill="#a31515"/><rect x="61.1" y="97.16" width="0.8" height="1.3" fill="#a31515"/><rect x="62.1" y="97.16" width="0.8" height="1.3" fill="#a31515"/><rect x="63.1" y="97.16" width="0.8" height="1.3" fill="#a31515"/><rect x="64.1" y="97.16" width="0.8" height="1.3" fill="#a31515"/><rect x="65.1" y="97.16" width="0.8" height="1.3" fill="#a31515"/><rect x="66.1" y="97.16" width="0.8" height="1.3" fill="#a31515"/><rect x="67.1" y="97.16" width="0.8" height="1.3" fill="#a31515"/><rect x="68.1" y="97.16" width="0.8" height="1.3" fill="#a31515"/><rect x="69.1" y="97.16" width="0.8" height="1.3" fill="#a31515"/><rect x="70.1" y="97.16" width="0.8" height="1.3" fill="#3b3b3b"/><rect x="8.1" y="101.20" width="0.8" height="1.3" fill="#008000"/><rect x="9.1" y="101.20" width="0.8" height="1.3" fill="#008000"/><rect x="10.1" y="101.20" width="0.8" height="1.3" fill="#008000"/><rect x="11.1" y="101.20" width="0.8" height="1.3" fill="#008000"/><rect x="12.1" y="101.20" width="0.8" height="1.3" fill="#008000"/><rect x="13.1" y="101.20" width="0.8" height="1.3" fill="#008000"/><rect x="14.1" y="101.20" width="0.8" height="1.3" fill="#008000"/><rect x="15.1" y="101.20" width="0.8" height="1.3" fill="#008000"/><rect x="16.1" y="101.20" width="0.8" height="1.3" fill="#008000"/><rect x="17.1" y="101.20" width="0.8" height="1.3" fill="#008000"/><rect x="18.1" y="101.20" width="0.8" height="1.3" fill="#008000"/><rect x="19.1" y="101.20" width="0.8" height="1.3" fill="#008000"/><rect x="20.1" y="101.20" width="0.8" height="1.3" fill="#008000"/><rect x="21.1" y="101.20" width="0.8" height="1.3" fill="#008000"/><rect x="22.1" y="101.20" width="0.8" height="1.3" fill="#008000"/><rect x="23.1" y="101.20" width="0.8" height="1.3" fill="#008000"/><rect x="24.1" y="101.20" width="0.8" height="1.3" fill="#008000"/><rect x="25.1" y="101.20" width="0.8" height="1.3" fill="#008000"/><rect x="26.1" y="101.20" width="0.8" height="1.3" fill="#008000"/><rect x="27.1" y="101.20" width="0.8" height="1.3" fill="#008000"/><rect x="28.1" y="101.20" width="0.8" height="1.3" fill="#008000"/><rect x="29.1" y="101.20" width="0.8" height="1.3" fill="#008000"/><rect x="30.1" y="101.20" width="0.8" height="1.3" fill="#008000"/><rect x="31.1" y="101.20" width="0.8" height="1.3" fill="#008000"/><rect x="32.1" y="101.20" width="0.8" height="1.3" fill="#008000"/><rect x="33.1" y="101.20" width="0.8" height="1.3" fill="#008000"/><rect x="8.1" y="103.22" width="0.8" height="1.3" fill="#3b3b3b"/><rect x="9.1" y="103.22" width="0.8" height="1.3" fill="#3b3b3b"/><rect x="10.1" y="103.22" width="0.8" height="1.3" fill="#3b3b3b"/><rect x="11.1" y="103.22" width="0.8" height="1.3" fill="#3b3b3b"/><rect x="12.1" y="103.22" width="0.8" height="1.3" fill="#3b3b3b"/><rect x="13.1" y="103.22" width="0.8" height="1.3" fill="#3b3b3b"/><rect x="14.1" y="103.22" width="0.8" height="1.3" fill="#3b3b3b"/><rect x="15.1" y="103.22" width="0.8" height="1.3" fill="#3b3b3b"/><rect x="16.1" y="103.22" width="0.8" height="1.3" fill="#3b3b3b"/><rect x="17.1" y="103.22" width="0.8" height="1.3" fill="#3b3b3b"/><rect x="18.1" y="103.22" width="0.8" height="1.3" fill="#795e26"/><rect x="19.1" y="103.22" width="0.8" height="1.3" fill="#795e26"/><rect x="20.1" y="103.22" width="0.8" height="1.3" fill="#795e26"/><rect x="21.1" y="103.22" width="0.8" height="1.3" fill="#795e26"/><rect x="22.1" y="103.22" width="0.8" height="1.3" fill="#3b3b3b"/><rect x="23.1" y="103.22" width="0.8" height="1.3" fill="#3b3b3b"/><rect x="24.1" y="103.22" width="0.8" height="1.3" fill="#3b3b3b"/><rect x="25.1" y="103.22" width="0.8" height="1.3" fill="#3b3b3b"/><rect x="26.1" y="103.22" width="0.8" height="1.3" fill="#3b3b3b"/><rect x="27.1" y="103.22" width="0.8" height="1.3" fill="#0000ff"/><rect x="28.1" y="103.22" width="0.8" height="1.3" fill="#0000ff"/><rect x="29.1" y="103.22" width="0.8" height="1.3" fill="#0000ff"/><rect x="30.1" y="103.22" width="0.8" height="1.3" fill="#0000ff"/><rect x="31.1" y="103.22" width="0.8" height="1.3" fill="#0000ff"/><rect x="32.1" y="103.22" width="0.8" height="1.3" fill="#0000ff"/><rect x="34.1" y="103.22" width="0.8" height="1.3" fill="#3b3b3b"/><rect x="35.1" y="103.22" width="0.8" height="1.3" fill="#3b3b3b"/><rect x="37.1" y="103.22" width="0.8" height="1.3" fill="#3b3b3b"/><rect x="38.1" y="103.22" width="0.8" height="1.3" fill="#3b3b3b"/><rect x="39.1" y="103.22" width="0.8" height="1.3" fill="#795e26"/><rect x="40.1" y="103.22" width="0.8" height="1.3" fill="#795e26"/><rect x="41.1" y="103.22" width="0.8" height="1.3" fill="#795e26"/><rect x="42.1" y="103.22" width="0.8" height="1.3" fill="#3b3b3b"/><rect x="43.1" y="103.22" width="0.8" height="1.3" fill="#a31515"/><rect x="44.1" y="103.22" width="0.8" height="1.3" fill="#a31515"/><rect x="45.1" y="103.22" width="0.8" height="1.3" fill="#a31515"/><rect x="46.1" y="103.22" width="0.8" height="1.3" fill="#a31515"/><rect x="47.1" y="103.22" width="0.8" height="1.3" fill="#a31515"/><rect x="48.1" y="103.22" width="0.8" height="1.3" fill="#a31515"/><rect x="49.1" y="103.22" width="0.8" height="1.3" fill="#a31515"/><rect x="50.1" y="103.22" width="0.8" height="1.3" fill="#3b3b3b"/><rect x="52.1" y="103.22" width="0.8" height="1.3" fill="#098658"/><rect x="53.1" y="103.22" width="0.8" height="1.3" fill="#3b3b3b"/><rect x="54.1" y="103.22" width="0.8" height="1.3" fill="#3b3b3b"/><rect x="56.1" y="103.22" width="0.8" height="1.3" fill="#3b3b3b"/><rect x="57.1" y="103.22" width="0.8" height="1.3" fill="#3b3b3b"/><rect x="58.1" y="103.22" width="0.8" height="1.3" fill="#3b3b3b"/><rect x="59.1" y="103.22" width="0.8" height="1.3" fill="#3b3b3b"/><rect x="60.1" y="103.22" width="0.8" height="1.3" fill="#3b3b3b"/><rect x="61.1" y="103.22" width="0.8" height="1.3" fill="#3b3b3b"/><rect x="62.1" y="103.22" width="0.8" height="1.3" fill="#3b3b3b"/><rect x="63.1" y="103.22" width="0.8" height="1.3" fill="#3b3b3b"/><rect x="64.1" y="103.22" width="0.8" height="1.3" fill="#0000ff"/><rect x="65.1" y="103.22" width="0.8" height="1.3" fill="#0000ff"/><rect x="66.1" y="103.22" width="0.8" height="1.3" fill="#0000ff"/><rect x="67.1" y="103.22" width="0.8" height="1.3" fill="#0000ff"/><rect x="68.1" y="103.22" width="0.8" height="1.3" fill="#3b3b3b"/><rect x="8.1" y="107.26" width="0.8" height="1.3" fill="#008000"/><rect x="9.1" y="107.26" width="0.8" height="1.3" fill="#008000"/><rect x="10.1" y="107.26" width="0.8" height="1.3" fill="#008000"/><rect x="11.1" y="107.26" width="0.8" height="1.3" fill="#008000"/><rect x="12.1" y="107.26" width="0.8" height="1.3" fill="#008000"/><rect x="13.1" y="107.26" width="0.8" height="1.3" fill="#008000"/><rect x="14.1" y="107.26" width="0.8" height="1.3" fill="#008000"/><rect x="15.1" y="107.26" width="0.8" height="1.3" fill="#008000"/><rect x="16.1" y="107.26" width="0.8" height="1.3" fill="#008000"/><rect x="17.1" y="107.26" width="0.8" height="1.3" fill="#008000"/><rect x="18.1" y="107.26" width="0.8" height="1.3" fill="#008000"/><rect x="8.1" y="109.28" width="0.8" height="1.3" fill="#3b3b3b"/><rect x="9.1" y="109.28" width="0.8" height="1.3" fill="#3b3b3b"/><rect x="10.1" y="109.28" width="0.8" height="1.3" fill="#3b3b3b"/><rect x="11.1" y="109.28" width="0.8" height="1.3" fill="#3b3b3b"/><rect x="12.1" y="109.28" width="0.8" height="1.3" fill="#3b3b3b"/><rect x="13.1" y="109.28" width="0.8" height="1.3" fill="#3b3b3b"/><rect x="14.1" y="109.28" width="0.8" height="1.3" fill="#3b3b3b"/><rect x="15.1" y="109.28" width="0.8" height="1.3" fill="#3b3b3b"/><rect x="17.1" y="109.28" width="0.8" height="1.3" fill="#3b3b3b"/><rect x="19.1" y="109.28" width="0.8" height="1.3" fill="#3b3b3b"/><rect x="20.1" y="109.28" width="0.8" height="1.3" fill="#3b3b3b"/><rect x="21.1" y="109.28" width="0.8" height="1.3" fill="#3b3b3b"/><rect x="22.1" y="109.28" width="0.8" height="1.3" fill="#3b3b3b"/><rect x="23.1" y="109.28" width="0.8" height="1.3" fill="#3b3b3b"/><rect x="24.1" y="109.28" width="0.8" height="1.3" fill="#3b3b3b"/><rect x="25.1" y="109.28" width="0.8" height="1.3" fill="#3b3b3b"/><rect x="26.1" y="109.28" width="0.8" height="1.3" fill="#3b3b3b"/><rect x="27.1" y="109.28" width="0.8" height="1.3" fill="#3b3b3b"/><rect x="28.1" y="109.28" width="0.8" height="1.3" fill="#3b3b3b"/><rect x="29.1" y="109.28" width="0.8" height="1.3" fill="#3b3b3b"/><rect x="30.1" y="109.28" width="0.8" height="1.3" fill="#3b3b3b"/><rect x="31.1" y="109.28" width="0.8" height="1.3" fill="#3b3b3b"/><rect x="32.1" y="109.28" width="0.8" height="1.3" fill="#3b3b3b"/><rect x="33.1" y="109.28" width="0.8" height="1.3" fill="#3b3b3b"/><rect x="34.1" y="109.28" width="0.8" height="1.3" fill="#3b3b3b"/><rect x="35.1" y="109.28" width="0.8" height="1.3" fill="#3b3b3b"/><rect x="8.1" y="113.32" width="0.8" height="1.3" fill="#008000"/><rect x="9.1" y="113.32" width="0.8" height="1.3" fill="#008000"/><rect x="10.1" y="113.32" width="0.8" height="1.3" fill="#008000"/><rect x="11.1" y="113.32" width="0.8" height="1.3" fill="#008000"/><rect x="12.1" y="113.32" width="0.8" height="1.3" fill="#008000"/><rect x="13.1" y="113.32" width="0.8" height="1.3" fill="#008000"/><rect x="14.1" y="113.32" width="0.8" height="1.3" fill="#008000"/><rect x="15.1" y="113.32" width="0.8" height="1.3" fill="#008000"/><rect x="16.1" y="113.32" width="0.8" height="1.3" fill="#008000"/><rect x="17.1" y="113.32" width="0.8" height="1.3" fill="#008000"/><rect x="18.1" y="113.32" width="0.8" height="1.3" fill="#008000"/><rect x="19.1" y="113.32" width="0.8" height="1.3" fill="#008000"/><rect x="20.1" y="113.32" width="0.8" height="1.3" fill="#008000"/><rect x="21.1" y="113.32" width="0.8" height="1.3" fill="#008000"/><rect x="22.1" y="113.32" width="0.8" height="1.3" fill="#008000"/><rect x="23.1" y="113.32" width="0.8" height="1.3" fill="#008000"/><rect x="24.1" y="113.32" width="0.8" height="1.3" fill="#008000"/><rect x="8.1" y="115.34" width="0.8" height="1.3" fill="#3b3b3b"/><rect x="9.1" y="115.34" width="0.8" height="1.3" fill="#3b3b3b"/><rect x="10.1" y="115.34" width="0.8" height="1.3" fill="#3b3b3b"/><rect x="11.1" y="115.34" width="0.8" height="1.3" fill="#3b3b3b"/><rect x="12.1" y="115.34" width="0.8" height="1.3" fill="#3b3b3b"/><rect x="13.1" y="115.34" width="0.8" height="1.3" fill="#3b3b3b"/><rect x="14.1" y="115.34" width="0.8" height="1.3" fill="#3b3b3b"/><rect x="15.1" y="115.34" width="0.8" height="1.3" fill="#3b3b3b"/><rect x="16.1" y="115.34" width="0.8" height="1.3" fill="#3b3b3b"/><rect x="17.1" y="115.34" width="0.8" height="1.3" fill="#3b3b3b"/><rect x="18.1" y="115.34" width="0.8" height="1.3" fill="#3b3b3b"/><rect x="19.1" y="115.34" width="0.8" height="1.3" fill="#3b3b3b"/><rect x="20.1" y="115.34" width="0.8" height="1.3" fill="#3b3b3b"/><rect x="22.1" y="115.34" width="0.8" height="1.3" fill="#3b3b3b"/><rect x="24.1" y="115.34" width="0.8" height="1.3" fill="#3b3b3b"/><rect x="25.1" y="115.34" width="0.8" height="1.3" fill="#3b3b3b"/><rect x="8.1" y="117.36" width="0.8" height="1.3" fill="#af00db"/><rect x="9.1" y="117.36" width="0.8" height="1.3" fill="#af00db"/><rect x="10.1" y="117.36" width="0.8" height="1.3" fill="#af00db"/><rect x="12.1" y="117.36" width="0.8" height="1.3" fill="#3b3b3b"/><rect x="13.1" y="117.36" width="0.8" height="1.3" fill="#3b3b3b"/><rect x="14.1" y="117.36" width="0.8" height="1.3" fill="#3b3b3b"/><rect x="16.1" y="117.36" width="0.8" height="1.3" fill="#af00db"/><rect x="17.1" y="117.36" width="0.8" height="1.3" fill="#af00db"/><rect x="19.1" y="117.36" width="0.8" height="1.3" fill="#3b3b3b"/><rect x="20.1" y="117.36" width="0.8" height="1.3" fill="#3b3b3b"/><rect x="21.1" y="117.36" width="0.8" height="1.3" fill="#3b3b3b"/><rect x="22.1" y="117.36" width="0.8" height="1.3" fill="#3b3b3b"/><rect x="23.1" y="117.36" width="0.8" height="1.3" fill="#3b3b3b"/><rect x="24.1" y="117.36" width="0.8" height="1.3" fill="#3b3b3b"/><rect x="25.1" y="117.36" width="0.8" height="1.3" fill="#3b3b3b"/><rect x="26.1" y="117.36" width="0.8" height="1.3" fill="#3b3b3b"/><rect x="27.1" y="117.36" width="0.8" height="1.3" fill="#3b3b3b"/><rect x="12.1" y="119.38" width="0.8" height="1.3" fill="#3b3b3b"/><rect x="13.1" y="119.38" width="0.8" height="1.3" fill="#3b3b3b"/><rect x="14.1" y="119.38" width="0.8" height="1.3" fill="#3b3b3b"/><rect x="15.1" y="119.38" width="0.8" height="1.3" fill="#3b3b3b"/><rect x="16.1" y="119.38" width="0.8" height="1.3" fill="#3b3b3b"/><rect x="17.1" y="119.38" width="0.8" height="1.3" fill="#3b3b3b"/><rect x="18.1" y="119.38" width="0.8" height="1.3" fill="#3b3b3b"/><rect x="19.1" y="119.38" width="0.8" height="1.3" fill="#3b3b3b"/><rect x="20.1" y="119.38" width="0.8" height="1.3" fill="#3b3b3b"/><rect x="21.1" y="119.38" width="0.8" height="1.3" fill="#3b3b3b"/><rect x="22.1" y="119.38" width="0.8" height="1.3" fill="#3b3b3b"/><rect x="23.1" y="119.38" width="0.8" height="1.3" fill="#3b3b3b"/><rect x="24.1" y="119.38" width="0.8" height="1.3" fill="#3b3b3b"/><rect x="25.1" y="119.38" width="0.8" height="1.3" fill="#3b3b3b"/><rect x="26.1" y="119.38" width="0.8" height="1.3" fill="#795e26"/><rect x="27.1" y="119.38" width="0.8" height="1.3" fill="#795e26"/><rect x="28.1" y="119.38" width="0.8" height="1.3" fill="#795e26"/><rect x="29.1" y="119.38" width="0.8" height="1.3" fill="#795e26"/><rect x="30.1" y="119.38" width="0.8" height="1.3" fill="#795e26"/><rect x="31.1" y="119.38" width="0.8" height="1.3" fill="#795e26"/><rect x="32.1" y="119.38" width="0.8" height="1.3" fill="#3b3b3b"/><rect x="33.1" y="119.38" width="0.8" height="1.3" fill="#3b3b3b"/><rect x="16.1" y="121.40" width="0.8" height="1.3" fill="#a31515"/><rect x="17.1" y="121.40" width="0.8" height="1.3" fill="#a31515"/><rect x="18.1" y="121.40" width="0.8" height="1.3" fill="#a31515"/><rect x="19.1" y="121.40" width="0.8" height="1.3" fill="#a31515"/><rect x="20.1" y="121.40" width="0.8" height="1.3" fill="#a31515"/><rect x="21.1" y="121.40" width="0.8" height="1.3" fill="#a31515"/><rect x="22.1" y="121.40" width="0.8" height="1.3" fill="#a31515"/><rect x="23.1" y="121.40" width="0.8" height="1.3" fill="#a31515"/><rect x="24.1" y="121.40" width="0.8" height="1.3" fill="#a31515"/><rect x="25.1" y="121.40" width="0.8" height="1.3" fill="#a31515"/><rect x="26.1" y="121.40" width="0.8" height="1.3" fill="#3b3b3b"/><rect x="28.1" y="121.40" width="0.8" height="1.3" fill="#3b3b3b"/><rect x="29.1" y="121.40" width="0.8" height="1.3" fill="#3b3b3b"/><rect x="30.1" y="121.40" width="0.8" height="1.3" fill="#3b3b3b"/><rect x="31.1" y="121.40" width="0.8" height="1.3" fill="#3b3b3b"/><rect x="32.1" y="121.40" width="0.8" height="1.3" fill="#795e26"/><rect x="33.1" y="121.40" width="0.8" height="1.3" fill="#795e26"/><rect x="34.1" y="121.40" width="0.8" height="1.3" fill="#795e26"/><rect x="35.1" y="121.40" width="0.8" height="1.3" fill="#3b3b3b"/><rect x="36.1" y="121.40" width="0.8" height="1.3" fill="#a31515"/><rect x="37.1" y="121.40" width="0.8" height="1.3" fill="#a31515"/><rect x="38.1" y="121.40" width="0.8" height="1.3" fill="#a31515"/><rect x="39.1" y="121.40" width="0.8" height="1.3" fill="#a31515"/><rect x="40.1" y="121.40" width="0.8" height="1.3" fill="#a31515"/><rect x="41.1" y="121.40" width="0.8" height="1.3" fill="#a31515"/><rect x="42.1" y="121.40" width="0.8" height="1.3" fill="#a31515"/><rect x="43.1" y="121.40" width="0.8" height="1.3" fill="#a31515"/><rect x="44.1" y="121.40" width="0.8" height="1.3" fill="#a31515"/><rect x="45.1" y="121.40" width="0.8" height="1.3" fill="#a31515"/><rect x="46.1" y="121.40" width="0.8" height="1.3" fill="#3b3b3b"/><rect x="48.1" y="121.40" width="0.8" height="1.3" fill="#a31515"/><rect x="49.1" y="121.40" width="0.8" height="1.3" fill="#a31515"/><rect x="50.1" y="121.40" width="0.8" height="1.3" fill="#3b3b3b"/><rect x="51.1" y="121.40" width="0.8" height="1.3" fill="#3b3b3b"/><rect x="16.1" y="123.42" width="0.8" height="1.3" fill="#a31515"/><rect x="17.1" y="123.42" width="0.8" height="1.3" fill="#a31515"/><rect x="18.1" y="123.42" width="0.8" height="1.3" fill="#a31515"/><rect x="19.1" y="123.42" width="0.8" height="1.3" fill="#a31515"/><rect x="20.1" y="123.42" width="0.8" height="1.3" fill="#a31515"/><rect x="21.1" y="123.42" width="0.8" height="1.3" fill="#a31515"/><rect x="22.1" y="123.42" width="0.8" height="1.3" fill="#a31515"/><rect x="23.1" y="123.42" width="0.8" height="1.3" fill="#3b3b3b"/><rect x="25.1" y="123.42" width="0.8" height="1.3" fill="#795e26"/><rect x="26.1" y="123.42" width="0.8" height="1.3" fill="#795e26"/><rect x="27.1" y="123.42" width="0.8" height="1.3" fill="#795e26"/><rect x="28.1" y="123.42" width="0.8" height="1.3" fill="#795e26"/><rect x="29.1" y="123.42" width="0.8" height="1.3" fill="#795e26"/><rect x="30.1" y="123.42" width="0.8" height="1.3" fill="#795e26"/><rect x="31.1" y="123.42" width="0.8" height="1.3" fill="#795e26"/><rect x="32.1" y="123.42" width="0.8" height="1.3" fill="#795e26"/><rect x="33.1" y="123.42" width="0.8" height="1.3" fill="#795e26"/><rect x="34.1" y="123.42" width="0.8" height="1.3" fill="#795e26"/><rect x="35.1" y="123.42" width="0.8" height="1.3" fill="#795e26"/><rect x="36.1" y="123.42" width="0.8" height="1.3" fill="#795e26"/><rect x="37.1" y="123.42" width="0.8" height="1.3" fill="#795e26"/><rect x="38.1" y="123.42" width="0.8" height="1.3" fill="#795e26"/><rect x="39.1" y="123.42" width="0.8" height="1.3" fill="#795e26"/><rect x="40.1" y="123.42" width="0.8" height="1.3" fill="#795e26"/><rect x="41.1" y="123.42" width="0.8" height="1.3" fill="#795e26"/><rect x="42.1" y="123.42" width="0.8" height="1.3" fill="#3b3b3b"/><rect x="43.1" y="123.42" width="0.8" height="1.3" fill="#3b3b3b"/><rect x="44.1" y="123.42" width="0.8" height="1.3" fill="#3b3b3b"/><rect x="45.1" y="123.42" width="0.8" height="1.3" fill="#3b3b3b"/><rect x="46.1" y="123.42" width="0.8" height="1.3" fill="#3b3b3b"/><rect x="47.1" y="123.42" width="0.8" height="1.3" fill="#795e26"/><rect x="48.1" y="123.42" width="0.8" height="1.3" fill="#795e26"/><rect x="49.1" y="123.42" width="0.8" height="1.3" fill="#795e26"/><rect x="50.1" y="123.42" width="0.8" height="1.3" fill="#3b3b3b"/><rect x="51.1" y="123.42" width="0.8" height="1.3" fill="#a31515"/><rect x="52.1" y="123.42" width="0.8" height="1.3" fill="#a31515"/><rect x="53.1" y="123.42" width="0.8" height="1.3" fill="#a31515"/><rect x="54.1" y="123.42" width="0.8" height="1.3" fill="#a31515"/><rect x="55.1" y="123.42" width="0.8" height="1.3" fill="#a31515"/><rect x="56.1" y="123.42" width="0.8" height="1.3" fill="#a31515"/><rect x="57.1" y="123.42" width="0.8" height="1.3" fill="#a31515"/><rect x="58.1" y="123.42" width="0.8" height="1.3" fill="#3b3b3b"/><rect x="60.1" y="123.42" width="0.8" height="1.3" fill="#098658"/><rect x="61.1" y="123.42" width="0.8" height="1.3" fill="#3b3b3b"/><rect x="62.1" y="123.42" width="0.8" height="1.3" fill="#3b3b3b"/><rect x="63.1" y="123.42" width="0.8" height="1.3" fill="#3b3b3b"/><rect x="16.1" y="125.44" width="0.8" height="1.3" fill="#a31515"/><rect x="17.1" y="125.44" width="0.8" height="1.3" fill="#a31515"/><rect x="18.1" y="125.44" width="0.8" height="1.3" fill="#a31515"/><rect x="19.1" y="125.44" width="0.8" height="1.3" fill="#a31515"/><rect x="20.1" y="125.44" width="0.8" height="1.3" fill="#a31515"/><rect x="21.1" y="125.44" width="0.8" height="1.3" fill="#a31515"/><rect x="22.1" y="125.44" width="0.8" height="1.3" fill="#a31515"/><rect x="23.1" y="125.44" width="0.8" height="1.3" fill="#a31515"/><rect x="24.1" y="125.44" width="0.8" height="1.3" fill="#a31515"/><rect x="25.1" y="125.44" width="0.8" height="1.3" fill="#a31515"/><rect x="26.1" y="125.44" width="0.8" height="1.3" fill="#a31515"/><rect x="27.1" y="125.44" width="0.8" height="1.3" fill="#3b3b3b"/><rect x="29.1" y="125.44" width="0.8" height="1.3" fill="#3b3b3b"/><rect x="30.1" y="125.44" width="0.8" height="1.3" fill="#3b3b3b"/><rect x="31.1" y="125.44" width="0.8" height="1.3" fill="#3b3b3b"/><rect x="32.1" y="125.44" width="0.8" height="1.3" fill="#3b3b3b"/><rect x="33.1" y="125.44" width="0.8" height="1.3" fill="#795e26"/><rect x="34.1" y="125.44" width="0.8" height="1.3" fill="#795e26"/><rect x="35.1" y="125.44" width="0.8" height="1.3" fill="#795e26"/><rect x="36.1" y="125.44" width="0.8" height="1.3" fill="#3b3b3b"/><rect x="37.1" y="125.44" width="0.8" height="1.3" fill="#a31515"/><rect x="38.1" y="125.44" width="0.8" height="1.3" fill="#a31515"/><rect x="39.1" y="125.44" width="0.8" height="1.3" fill="#a31515"/><rect x="40.1" y="125.44" width="0.8" height="1.3" fill="#a31515"/><rect x="41.1" y="125.44" width="0.8" height="1.3" fill="#a31515"/><rect x="42.1" y="125.44" width="0.8" height="1.3" fill="#a31515"/><rect x="43.1" y="125.44" width="0.8" height="1.3" fill="#a31515"/><rect x="44.1" y="125.44" width="0.8" height="1.3" fill="#a31515"/><rect x="45.1" y="125.44" width="0.8" height="1.3" fill="#a31515"/><rect x="46.1" y="125.44" width="0.8" height="1.3" fill="#a31515"/><rect x="47.1" y="125.44" width="0.8" height="1.3" fill="#a31515"/><rect x="48.1" y="125.44" width="0.8" height="1.3" fill="#3b3b3b"/><rect x="50.1" y="125.44" width="0.8" height="1.3" fill="#a31515"/><rect x="51.1" y="125.44" width="0.8" height="1.3" fill="#a31515"/><rect x="52.1" y="125.44" width="0.8" height="1.3" fill="#3b3b3b"/><rect x="53.1" y="125.44" width="0.8" height="1.3" fill="#3b3b3b"/><rect x="16.1" y="127.46" width="0.8" height="1.3" fill="#a31515"/><rect x="17.1" y="127.46" width="0.8" height="1.3" fill="#a31515"/><rect x="18.1" y="127.46" width="0.8" height="1.3" fill="#a31515"/><rect x="19.1" y="127.46" width="0.8" height="1.3" fill="#a31515"/><rect x="20.1" y="127.46" width="0.8" height="1.3" fill="#a31515"/><rect x="21.1" y="127.46" width="0.8" height="1.3" fill="#a31515"/><rect x="22.1" y="127.46" width="0.8" height="1.3" fill="#a31515"/><rect x="23.1" y="127.46" width="0.8" height="1.3" fill="#a31515"/><rect x="24.1" y="127.46" width="0.8" height="1.3" fill="#a31515"/><rect x="25.1" y="127.46" width="0.8" height="1.3" fill="#a31515"/><rect x="26.1" y="127.46" width="0.8" height="1.3" fill="#a31515"/><rect x="27.1" y="127.46" width="0.8" height="1.3" fill="#a31515"/><rect x="28.1" y="127.46" width="0.8" height="1.3" fill="#a31515"/><rect x="29.1" y="127.46" width="0.8" height="1.3" fill="#a31515"/><rect x="30.1" y="127.46" width="0.8" height="1.3" fill="#3b3b3b"/><rect x="32.1" y="127.46" width="0.8" height="1.3" fill="#3b3b3b"/><rect x="33.1" y="127.46" width="0.8" height="1.3" fill="#3b3b3b"/><rect x="34.1" y="127.46" width="0.8" height="1.3" fill="#3b3b3b"/><rect x="35.1" y="127.46" width="0.8" height="1.3" fill="#3b3b3b"/><rect x="36.1" y="127.46" width="0.8" height="1.3" fill="#795e26"/><rect x="37.1" y="127.46" width="0.8" height="1.3" fill="#795e26"/><rect x="38.1" y="127.46" width="0.8" height="1.3" fill="#795e26"/><rect x="39.1" y="127.46" width="0.8" height="1.3" fill="#3b3b3b"/><rect x="40.1" y="127.46" width="0.8" height="1.3" fill="#a31515"/><rect x="41.1" y="127.46" width="0.8" height="1.3" fill="#a31515"/><rect x="42.1" y="127.46" width="0.8" height="1.3" fill="#a31515"/><rect x="43.1" y="127.46" width="0.8" height="1.3" fill="#a31515"/><rect x="44.1" y="127.46" width="0.8" height="1.3" fill="#a31515"/><rect x="45.1" y="127.46" width="0.8" height="1.3" fill="#a31515"/><rect x="46.1" y="127.46" width="0.8" height="1.3" fill="#a31515"/><rect x="47.1" y="127.46" width="0.8" height="1.3" fill="#a31515"/><rect x="48.1" y="127.46" width="0.8" height="1.3" fill="#a31515"/><rect x="49.1" y="127.46" width="0.8" height="1.3" fill="#a31515"/><rect x="50.1" y="127.46" width="0.8" height="1.3" fill="#a31515"/><rect x="51.1" y="127.46" width="0.8" height="1.3" fill="#a31515"/><rect x="52.1" y="127.46" width="0.8" height="1.3" fill="#a31515"/><rect x="53.1" y="127.46" width="0.8" height="1.3" fill="#a31515"/><rect x="54.1" y="127.46" width="0.8" height="1.3" fill="#3b3b3b"/><rect x="56.1" y="127.46" width="0.8" height="1.3" fill="#a31515"/><rect x="57.1" y="127.46" width="0.8" height="1.3" fill="#a31515"/><rect x="58.1" y="127.46" width="0.8" height="1.3" fill="#3b3b3b"/><rect x="12.1" y="129.48" width="0.8" height="1.3" fill="#3b3b3b"/><rect x="13.1" y="129.48" width="0.8" height="1.3" fill="#3b3b3b"/><rect x="8.1" y="133.52" width="0.8" height="1.3" fill="#af00db"/><rect x="9.1" y="133.52" width="0.8" height="1.3" fill="#af00db"/><rect x="10.1" y="133.52" width="0.8" height="1.3" fill="#af00db"/><rect x="11.1" y="133.52" width="0.8" height="1.3" fill="#af00db"/><rect x="12.1" y="133.52" width="0.8" height="1.3" fill="#af00db"/><rect x="13.1" y="133.52" width="0.8" height="1.3" fill="#af00db"/><rect x="15.1" y="133.52" width="0.8" height="1.3" fill="#795e26"/><rect x="16.1" y="133.52" width="0.8" height="1.3" fill="#795e26"/><rect x="17.1" y="133.52" width="0.8" height="1.3" fill="#3b3b3b"/><rect x="18.1" y="133.52" width="0.8" height="1.3" fill="#3b3b3b"/><rect x="12.1" y="135.54" width="0.8" height="1.3" fill="#a31515"/><rect x="13.1" y="135.54" width="0.8" height="1.3" fill="#a31515"/><rect x="14.1" y="135.54" width="0.8" height="1.3" fill="#a31515"/><rect x="15.1" y="135.54" width="0.8" height="1.3" fill="#a31515"/><rect x="16.1" y="135.54" width="0.8" height="1.3" fill="#a31515"/><rect x="17.1" y="135.54" width="0.8" height="1.3" fill="#a31515"/><rect x="18.1" y="135.54" width="0.8" height="1.3" fill="#a31515"/><rect x="19.1" y="135.54" width="0.8" height="1.3" fill="#3b3b3b"/><rect x="21.1" y="135.54" width="0.8" height="1.3" fill="#3b3b3b"/><rect x="22.1" y="135.54" width="0.8" height="1.3" fill="#3b3b3b"/><rect x="23.1" y="135.54" width="0.8" height="1.3" fill="#3b3b3b"/><rect x="24.1" y="135.54" width="0.8" height="1.3" fill="#3b3b3b"/><rect x="25.1" y="135.54" width="0.8" height="1.3" fill="#3b3b3b"/><rect x="26.1" y="135.54" width="0.8" height="1.3" fill="#3b3b3b"/><rect x="27.1" y="135.54" width="0.8" height="1.3" fill="#3b3b3b"/><rect x="28.1" y="135.54" width="0.8" height="1.3" fill="#3b3b3b"/><rect x="29.1" y="135.54" width="0.8" height="1.3" fill="#3b3b3b"/><rect x="30.1" y="135.54" width="0.8" height="1.3" fill="#3b3b3b"/><rect x="31.1" y="135.54" width="0.8" height="1.3" fill="#3b3b3b"/><rect x="32.1" y="135.54" width="0.8" height="1.3" fill="#3b3b3b"/><rect x="33.1" y="135.54" width="0.8" height="1.3" fill="#3b3b3b"/><rect x="34.1" y="135.54" width="0.8" height="1.3" fill="#3b3b3b"/><rect x="12.1" y="137.56" width="0.8" height="1.3" fill="#a31515"/><rect x="13.1" y="137.56" width="0.8" height="1.3" fill="#a31515"/><rect x="14.1" y="137.56" width="0.8" height="1.3" fill="#a31515"/><rect x="15.1" y="137.56" width="0.8" height="1.3" fill="#a31515"/><rect x="16.1" y="137.56" width="0.8" height="1.3" fill="#a31515"/><rect x="17.1" y="137.56" width="0.8" height="1.3" fill="#a31515"/><rect x="18.1" y="137.56" width="0.8" height="1.3" fill="#a31515"/><rect x="19.1" y="137.56" width="0.8" height="1.3" fill="#a31515"/><rect x="20.1" y="137.56" width="0.8" height="1.3" fill="#a31515"/><rect x="21.1" y="137.56" width="0.8" height="1.3" fill="#a31515"/><rect x="22.1" y="137.56" width="0.8" height="1.3" fill="#a31515"/><rect x="23.1" y="137.56" width="0.8" height="1.3" fill="#a31515"/><rect x="24.1" y="137.56" width="0.8" height="1.3" fill="#3b3b3b"/><rect x="26.1" y="137.56" width="0.8" height="1.3" fill="#795e26"/><rect x="27.1" y="137.56" width="0.8" height="1.3" fill="#795e26"/><rect x="28.1" y="137.56" width="0.8" height="1.3" fill="#795e26"/><rect x="29.1" y="137.56" width="0.8" height="1.3" fill="#3b3b3b"/><rect x="30.1" y="137.56" width="0.8" height="1.3" fill="#3b3b3b"/><rect x="31.1" y="137.56" width="0.8" height="1.3" fill="#3b3b3b"/><rect x="32.1" y="137.56" width="0.8" height="1.3" fill="#3b3b3b"/><rect x="33.1" y="137.56" width="0.8" height="1.3" fill="#3b3b3b"/><rect x="34.1" y="137.56" width="0.8" height="1.3" fill="#3b3b3b"/><rect x="35.1" y="137.56" width="0.8" height="1.3" fill="#3b3b3b"/><rect x="36.1" y="137.56" width="0.8" height="1.3" fill="#3b3b3b"/><rect x="37.1" y="137.56" width="0.8" height="1.3" fill="#3b3b3b"/><rect x="38.1" y="137.56" width="0.8" height="1.3" fill="#3b3b3b"/><rect x="39.1" y="137.56" width="0.8" height="1.3" fill="#3b3b3b"/><rect x="8.1" y="139.58" width="0.8" height="1.3" fill="#3b3b3b"/><rect x="9.1" y="139.58" width="0.8" height="1.3" fill="#3b3b3b"/><rect x="4.1" y="143.62" width="0.8" height="1.3" fill="#af00db"/><rect x="5.1" y="143.62" width="0.8" height="1.3" fill="#af00db"/><rect x="6.1" y="143.62" width="0.8" height="1.3" fill="#af00db"/><rect x="7.1" y="143.62" width="0.8" height="1.3" fill="#af00db"/><rect x="8.1" y="143.62" width="0.8" height="1.3" fill="#af00db"/><rect x="9.1" y="143.62" width="0.8" height="1.3" fill="#af00db"/><rect x="11.1" y="143.62" width="0.8" height="1.3" fill="#267f99"/><rect x="12.1" y="143.62" width="0.8" height="1.3" fill="#267f99"/><rect x="13.1" y="143.62" width="0.8" height="1.3" fill="#267f99"/><rect x="14.1" y="143.62" width="0.8" height="1.3" fill="#267f99"/><rect x="15.1" y="143.62" width="0.8" height="1.3" fill="#267f99"/><rect x="16.1" y="143.62" width="0.8" height="1.3" fill="#267f99"/><rect x="17.1" y="143.62" width="0.8" height="1.3" fill="#267f99"/><rect x="18.1" y="143.62" width="0.8" height="1.3" fill="#267f99"/><rect x="19.1" y="143.62" width="0.8" height="1.3" fill="#267f99"/><rect x="21.1" y="143.62" width="0.8" height="1.3" fill="#af00db"/><rect x="22.1" y="143.62" width="0.8" height="1.3" fill="#af00db"/><rect x="24.1" y="143.62" width="0.8" height="1.3" fill="#3b3b3b"/><rect x="25.1" y="143.62" width="0.8" height="1.3" fill="#3b3b3b"/><rect x="8.1" y="145.64" width="0.8" height="1.3" fill="#795e26"/><rect x="9.1" y="145.64" width="0.8" height="1.3" fill="#795e26"/><rect x="10.1" y="145.64" width="0.8" height="1.3" fill="#795e26"/><rect x="11.1" y="145.64" width="0.8" height="1.3" fill="#795e26"/><rect x="12.1" y="145.64" width="0.8" height="1.3" fill="#795e26"/><rect x="13.1" y="145.64" width="0.8" height="1.3" fill="#3b3b3b"/><rect x="14.1" y="145.64" width="0.8" height="1.3" fill="#a31515"/><rect x="15.1" y="145.64" width="0.8" height="1.3" fill="#a31515"/><rect x="16.1" y="145.64" width="0.8" height="1.3" fill="#a31515"/><rect x="17.1" y="145.64" width="0.8" height="1.3" fill="#a31515"/><rect x="18.1" y="145.64" width="0.8" height="1.3" fill="#a31515"/><rect x="19.1" y="145.64" width="0.8" height="1.3" fill="#a31515"/><rect x="20.1" y="145.64" width="0.8" height="1.3" fill="#a31515"/><rect x="21.1" y="145.64" width="0.8" height="1.3" fill="#a31515"/><rect x="22.1" y="145.64" width="0.8" height="1.3" fill="#a31515"/><rect x="23.1" y="145.64" width="0.8" height="1.3" fill="#a31515"/><rect x="24.1" y="145.64" width="0.8" height="1.3" fill="#a31515"/><rect x="25.1" y="145.64" width="0.8" height="1.3" fill="#a31515"/><rect x="26.1" y="145.64" width="0.8" height="1.3" fill="#a31515"/><rect x="27.1" y="145.64" width="0.8" height="1.3" fill="#a31515"/><rect x="28.1" y="145.64" width="0.8" height="1.3" fill="#a31515"/><rect x="29.1" y="145.64" width="0.8" height="1.3" fill="#a31515"/><rect x="30.1" y="145.64" width="0.8" height="1.3" fill="#a31515"/><rect x="31.1" y="145.64" width="0.8" height="1.3" fill="#a31515"/><rect x="32.1" y="145.64" width="0.8" height="1.3" fill="#a31515"/><rect x="33.1" y="145.64" width="0.8" height="1.3" fill="#a31515"/><rect x="34.1" y="145.64" width="0.8" height="1.3" fill="#a31515"/><rect x="35.1" y="145.64" width="0.8" height="1.3" fill="#a31515"/><rect x="36.1" y="145.64" width="0.8" height="1.3" fill="#a31515"/><rect x="37.1" y="145.64" width="0.8" height="1.3" fill="#a31515"/><rect x="38.1" y="145.64" width="0.8" height="1.3" fill="#a31515"/><rect x="39.1" y="145.64" width="0.8" height="1.3" fill="#a31515"/><rect x="40.1" y="145.64" width="0.8" height="1.3" fill="#a31515"/><rect x="41.1" y="145.64" width="0.8" height="1.3" fill="#a31515"/><rect x="42.1" y="145.64" width="0.8" height="1.3" fill="#a31515"/><rect x="43.1" y="145.64" width="0.8" height="1.3" fill="#a31515"/><rect x="44.1" y="145.64" width="0.8" height="1.3" fill="#a31515"/><rect x="45.1" y="145.64" width="0.8" height="1.3" fill="#a31515"/><rect x="46.1" y="145.64" width="0.8" height="1.3" fill="#a31515"/><rect x="47.1" y="145.64" width="0.8" height="1.3" fill="#a31515"/><rect x="48.1" y="145.64" width="0.8" height="1.3" fill="#a31515"/><rect x="49.1" y="145.64" width="0.8" height="1.3" fill="#3b3b3b"/><rect x="8.1" y="147.66" width="0.8" height="1.3" fill="#af00db"/><rect x="9.1" y="147.66" width="0.8" height="1.3" fill="#af00db"/><rect x="10.1" y="147.66" width="0.8" height="1.3" fill="#af00db"/><rect x="11.1" y="147.66" width="0.8" height="1.3" fill="#af00db"/><rect x="12.1" y="147.66" width="0.8" height="1.3" fill="#af00db"/><rect x="13.1" y="147.66" width="0.8" height="1.3" fill="#af00db"/><rect x="15.1" y="147.66" width="0.8" height="1.3" fill="#3b3b3b"/><rect x="16.1" y="147.66" width="0.8" height="1.3" fill="#3b3b3b"/><rect x="17.1" y="147.66" width="0.8" height="1.3" fill="#3b3b3b"/><rect x="18.1" y="147.66" width="0.8" height="1.3" fill="#3b3b3b"/><rect x="19.1" y="147.66" width="0.8" height="1.3" fill="#3b3b3b"/><rect x="20.1" y="147.66" width="0.8" height="1.3" fill="#3b3b3b"/><rect x="21.1" y="147.66" width="0.8" height="1.3" fill="#3b3b3b"/><rect x="22.1" y="147.66" width="0.8" height="1.3" fill="#3b3b3b"/><rect x="23.1" y="147.66" width="0.8" height="1.3" fill="#3b3b3b"/><rect x="8.1" y="149.68" width="0.8" height="1.3" fill="#3b3b3b"/><rect x="9.1" y="149.68" width="0.8" height="1.3" fill="#3b3b3b"/><rect x="10.1" y="149.68" width="0.8" height="1.3" fill="#3b3b3b"/><rect x="11.1" y="149.68" width="0.8" height="1.3" fill="#3b3b3b"/><rect x="12.1" y="149.68" width="0.8" height="1.3" fill="#3b3b3b"/><rect x="13.1" y="149.68" width="0.8" height="1.3" fill="#3b3b3b"/><rect x="14.1" y="149.68" width="0.8" height="1.3" fill="#3b3b3b"/><rect x="15.1" y="149.68" width="0.8" height="1.3" fill="#3b3b3b"/><rect x="16.1" y="149.68" width="0.8" height="1.3" fill="#3b3b3b"/><rect x="17.1" y="149.68" width="0.8" height="1.3" fill="#3b3b3b"/><rect x="18.1" y="149.68" width="0.8" height="1.3" fill="#795e26"/><rect x="19.1" y="149.68" width="0.8" height="1.3" fill="#795e26"/><rect x="20.1" y="149.68" width="0.8" height="1.3" fill="#795e26"/><rect x="21.1" y="149.68" width="0.8" height="1.3" fill="#795e26"/><rect x="22.1" y="149.68" width="0.8" height="1.3" fill="#795e26"/><rect x="23.1" y="149.68" width="0.8" height="1.3" fill="#795e26"/><rect x="24.1" y="149.68" width="0.8" height="1.3" fill="#795e26"/><rect x="25.1" y="149.68" width="0.8" height="1.3" fill="#795e26"/><rect x="26.1" y="149.68" width="0.8" height="1.3" fill="#795e26"/><rect x="27.1" y="149.68" width="0.8" height="1.3" fill="#3b3b3b"/><rect x="28.1" y="149.68" width="0.8" height="1.3" fill="#3b3b3b"/><rect x="8.1" y="151.70" width="0.8" height="1.3" fill="#af00db"/><rect x="9.1" y="151.70" width="0.8" height="1.3" fill="#af00db"/><rect x="10.1" y="151.70" width="0.8" height="1.3" fill="#af00db"/><rect x="11.1" y="151.70" width="0.8" height="1.3" fill="#af00db"/><rect x="12.1" y="151.70" width="0.8" height="1.3" fill="#af00db"/><rect x="13.1" y="151.70" width="0.8" height="1.3" fill="#af00db"/><rect x="15.1" y="151.70" width="0.8" height="1.3" fill="#795e26"/><rect x="16.1" y="151.70" width="0.8" height="1.3" fill="#795e26"/><rect x="17.1" y="151.70" width="0.8" height="1.3" fill="#795e26"/><rect x="18.1" y="151.70" width="0.8" height="1.3" fill="#795e26"/><rect x="19.1" y="151.70" width="0.8" height="1.3" fill="#795e26"/><rect x="20.1" y="151.70" width="0.8" height="1.3" fill="#3b3b3b"/><rect x="21.1" y="151.70" width="0.8" height="1.3" fill="#098658"/><rect x="22.1" y="151.70" width="0.8" height="1.3" fill="#098658"/><rect x="23.1" y="151.70" width="0.8" height="1.3" fill="#098658"/><rect x="24.1" y="151.70" width="0.8" height="1.3" fill="#3b3b3b"/><rect x="26.1" y="151.70" width="0.8" height="1.3" fill="#a31515"/><rect x="27.1" y="151.70" width="0.8" height="1.3" fill="#a31515"/><rect x="28.1" y="151.70" width="0.8" height="1.3" fill="#a31515"/><rect x="29.1" y="151.70" width="0.8" height="1.3" fill="#a31515"/><rect x="30.1" y="151.70" width="0.8" height="1.3" fill="#a31515"/><rect x="31.1" y="151.70" width="0.8" height="1.3" fill="#a31515"/><rect x="32.1" y="151.70" width="0.8" height="1.3" fill="#a31515"/><rect x="33.1" y="151.70" width="0.8" height="1.3" fill="#a31515"/><rect x="34.1" y="151.70" width="0.8" height="1.3" fill="#a31515"/><rect x="35.1" y="151.70" width="0.8" height="1.3" fill="#a31515"/><rect x="36.1" y="151.70" width="0.8" height="1.3" fill="#a31515"/><rect x="37.1" y="151.70" width="0.8" height="1.3" fill="#a31515"/><rect x="38.1" y="151.70" width="0.8" height="1.3" fill="#a31515"/><rect x="39.1" y="151.70" width="0.8" height="1.3" fill="#a31515"/><rect x="40.1" y="151.70" width="0.8" height="1.3" fill="#a31515"/><rect x="41.1" y="151.70" width="0.8" height="1.3" fill="#a31515"/><rect x="42.1" y="151.70" width="0.8" height="1.3" fill="#a31515"/><rect x="43.1" y="151.70" width="0.8" height="1.3" fill="#a31515"/><rect x="44.1" y="151.70" width="0.8" height="1.3" fill="#a31515"/><rect x="45.1" y="151.70" width="0.8" height="1.3" fill="#a31515"/><rect x="46.1" y="151.70" width="0.8" height="1.3" fill="#a31515"/><rect x="47.1" y="151.70" width="0.8" height="1.3" fill="#a31515"/><rect x="48.1" y="151.70" width="0.8" height="1.3" fill="#a31515"/><rect x="49.1" y="151.70" width="0.8" height="1.3" fill="#a31515"/><rect x="50.1" y="151.70" width="0.8" height="1.3" fill="#a31515"/><rect x="51.1" y="151.70" width="0.8" height="1.3" fill="#a31515"/><rect x="52.1" y="151.70" width="0.8" height="1.3" fill="#a31515"/><rect x="53.1" y="151.70" width="0.8" height="1.3" fill="#3b3b3b"/></svg><!-- amazon q tip -->
<div class="a" style="left:747px;top:576px;width:321px;height:12px;background:#252526;border-radius:2px"></div>
<div class="a" style="left:751px;top:576px;font-family:'Liberation Mono',monospace;font-size:8.1px;line-height:12px;color:#fff;font-weight:700;letter-spacing:-0.02px">Amazon Q Tip 1/3: Start typing to get suggestions ([ESC] to exit)</div>
<!-- editor scrollbar -->
<div class="a" style="left:1434px;top:576px;width:1px;height:320px;background:#e8e8e8"></div>
<div class="a" style="left:1435px;top:576px;width:8px;height:106px;background:#f0f0f0"></div>
<div class="a" style="left:1435px;top:576px;width:8px;height:1px;background:#a0a0a0"></div>
<!-- toast -->
<div class="a" style="left:1152px;top:880px;width:283px;height:30px;background:#fff;box-shadow:0 0 4px rgba(0,0,0,0.25)"></div>
<svg class="a" style="left:1159px;top:888px" width="10" height="10" viewBox="0 0 10 10"><circle cx="5" cy="5" r="4.3" stroke="#1a85ff" stroke-width="0.9" fill="none"/><path d="M5 4.3 V7.5" stroke="#1a85ff" stroke-width="0.9"/></svg>
<div class="a" style="left:1173px;top:889px;font-size:8px;color:#3b3b3b">See what's new in the code editor</div>
<svg class="a" style="left:1400px;top:888px" width="10" height="10" viewBox="0 0 10 10"><circle cx="5" cy="5" r="3.5" stroke="#3b3b3b" stroke-width="1.2" fill="none" stroke-dasharray="2 1"/><circle cx="5" cy="5" r="1.3" stroke="#3b3b3b" stroke-width="0.8" fill="none"/></svg>
<svg class="a" style="left:1419px;top:890px" width="7" height="7" viewBox="0 0 7 7"><path d="M0.5 0.5 L6.5 6.5 M6.5 0.5 L0.5 6.5" stroke="#3b3b3b" stroke-width="0.9"/></svg>
<!-- right border of container -->
<div class="a" style="left:1443px;top:500px;width:1px;height:396px;background:#c6c6cd"></div>
<div class="a" style="left:444px;top:500px;width:1px;height:396px;background:#c6c6cd"></div>
<!-- footer -->
<div class="a" style="left:0;top:896px;width:1901px;height:22px;background:#161d26"></div>
<svg class="a" style="left:10px;top:901px" width="10" height="11" viewBox="0 0 10 11"><rect x="0.6" y="0.6" width="8.8" height="9.8" rx="1.5" stroke="#fff" stroke-width="1" fill="none"/><path d="M2.5 3.5 L4.5 5.3 L2.5 7 M5 7.8 H7.5" stroke="#fff" stroke-width="0.9" fill="none"/></svg>
<div class="a wt" style="left:23px;top:902px;font-size:7.6px;letter-spacing:-0.05px">CloudShell</div>
<div class="a wt" style="left:75px;top:901px;font-size:7.6px;letter-spacing:-0.15px">Feedback</div>
<svg class="a" style="left:123px;top:900px" width="8" height="12" viewBox="0 0 8 12"><rect x="0.6" y="1" width="5.5" height="10" rx="1" stroke="#fff" stroke-width="0.9" fill="none"/><path d="M5 1 V4 M3.5 2.5 H6.5" stroke="#fff" stroke-width="0.9"/></svg>
<div class="a wt" style="left:134px;top:901px;font-size:7.6px;letter-spacing:-0.02px">Console Mobile App</div>
<div class="a wt" style="left:1560px;top:901px;font-size:7.6px;letter-spacing:-0.03px;color:#e8e8e8">© 2025, Amazon Web Services, Inc. or its affiliates.</div>
<div class="a wt" style="left:1750px;top:901px;font-size:7.6px;letter-spacing:-0.15px">Privacy</div>
<div class="a wt" style="left:1790px;top:901px;font-size:7.6px;letter-spacing:-0.15px">Terms</div>
<div class="a wt" style="left:1827px;top:901px;font-size:7.6px;letter-spacing:-0.2px">Cookie preferences</div>
<!-- scrollbar -->
<div class="a" style="left:1901px;top:0;width:18px;height:918px;background:#2b2b2b"></div>
<svg class="a" style="left:1904px;top:4px" width="14" height="11" viewBox="0 0 14 11"><path d="M7 1.5 L12.5 9.5 H1.5Z" fill="#a3a3a3"/></svg>
<div class="a" style="left:1905px;top:22px;width:11px;height:602px;background:#a3a3a3;border-radius:6px"></div>
<svg class="a" style="left:1904px;top:903px" width="14" height="11" viewBox="0 0 14 11"><path d="M1.5 1.5 H12.5 L7 9.5Z" fill="#a3a3a3"/></svg>
<!-- taskbar -->
<div class="a" style="left:0;top:918px;width:1919px;height:59px;background:linear-gradient(90deg,#192a37 0%,#1b2731 30%,#1c2027 50%,#1b2630 70%,#172a3b 100%);border-top:1px solid #33424e"></div>
<!-- taskbar icons -->
<svg class="a" style="left:697px;top:934px" width="30" height="30" viewBox="0 0 30 30">
<defs><linearGradient id="wg" x1="0" y1="0" x2="1" y2="1"><stop offset="0" stop-color="#8ee0fb"/><stop offset="1" stop-color="#1294ec"/></linearGradient></defs>
<rect x="0" y="0" width="14.2" height="14.2" rx="1" fill="url(#wg)"/><rect x="15.2" y="0" width="14.2" height="14.2" rx="1" fill="url(#wg)"/>
<rect x="0" y="15.2" width="14.2" height="14.2" rx="1" fill="url(#wg)"/><rect x="15.2" y="15.2" width="14.2" height="14.2" rx="1" fill="url(#wg)"/>
</svg>
<svg class="a" style="left:754px;top:933px" width="26" height="30" viewBox="0 0 26 30"><circle cx="11.5" cy="12" r="10" fill="#3f4852" stroke="#e8e8e8" stroke-width="2.6"/><path d="M18.5 19.5 L24.5 26" stroke="#d8d8d8" stroke-width="3" stroke-linecap="round"/></svg>
<svg class="a" style="left:807px;top:933px" width="30" height="31" viewBox="0 0 30 31"><path d="M8 7 V2.5 H22 V7" stroke="#2ea8e6" stroke-width="2" fill="none"/><rect x="1" y="5.5" width="28" height="25" rx="4" fill="#f3f3f3"/><rect x="9" y="13" width="5" height="5" fill="#f25022"/><rect x="15" y="13" width="5" height="5" fill="#7fba00"/><rect x="9" y="19" width="5" height="5" fill="#00a4ef"/><rect x="15" y="19" width="5" height="5" fill="#ffb900"/></svg>
<svg class="a" style="left:863px;top:934px" width="30" height="28" viewBox="0 0 30 28"><path d="M0 2 Q0 0 2 0 H10 L13 3 H29 Q30 3 30 5 V27 H0Z" fill="#e8a920"/><rect x="0" y="5" width="30" height="22" rx="1" fill="#fcd35a"/><rect x="5" y="19" width="20" height="9" rx="2.5" fill="#1a74d0"/><path d="M8 22.5 H22" stroke="#0d4f96" stroke-width="1"/></svg>
<div class="a" style="left:874px;top:969px;width:8px;height:3px;border-radius:2px;background:#9ea3a8"></div>
<svg class="a" style="left:917px;top:935px" width="31" height="27" viewBox="0 0 31 27"><defs><linearGradient id="kg" x1="0" y1="0" x2="0" y2="1"><stop offset="0" stop-color="#f4f4f4"/><stop offset="1" stop-color="#bdbdbd"/></linearGradient></defs>
<path d="M2 3 Q2 1 4 1 H13 Q15 1 15 3 L15.5 12 Q15.5 14 13.5 14 H3.5 Q1.5 14 1.5 12Z" fill="url(#kg)"/>
<path d="M17 3 Q17 1 19 1 H27 Q29 1 29 3 L29.5 12 Q29.5 14 27.5 14 H18 Q16 14 16 12Z" fill="url(#kg)"/>
<path d="M9.5 13 Q9.5 11 11.5 11 H20 Q22 11 22 13 L22.5 23.5 Q22.5 25.5 20.5 25.5 H11 Q9 25.5 9 23.5Z" fill="url(#kg)"/>
<text x="5.5" y="9" font-size="7" font-weight="700" fill="#e3344f" font-family="Liberation Sans">u</text><text x="21.5" y="9" font-size="7" font-weight="700" fill="#e3344f" font-family="Liberation Sans">i</text><text x="13" y="20" font-size="7" font-weight="700" fill="#e3344f" font-family="Liberation Sans">n</text></svg>
<svg class="a" style="left:974px;top:935px" width="29" height="26" viewBox="0 0 29 26"><defs><linearGradient id="cgl" x1="0" y1="0" x2="0" y2="1"><stop offset="0" stop-color="#1aa0f2"/><stop offset="0.45" stop-color="#3bb39a"/><stop offset="0.75" stop-color="#d7c21c"/><stop offset="1" stop-color="#f7b500"/></linearGradient><linearGradient id="cgr" x1="1" y1="0" x2="0.3" y2="1"><stop offset="0" stop-color="#9b4ff5"/><stop offset="0.5" stop-color="#ef5a8f"/><stop offset="1" stop-color="#ffae3d"/></linearGradient></defs>
<path d="M6.2 0.6 H19.5 Q21.3 0.6 20.7 2.5 L15 16.8 Q14.3 18.4 12.3 18.4 H2 Q0.1 18.4 0.6 16.4 L4.3 2.3 Q4.8 0.6 6.2 0.6Z" fill="url(#cgl)"/>
<path d="M15.5 0.6 H19.5 Q21.8 0.6 22.8 3 L24 6.5 H17.5 Z" fill="#1f56d6"/>
<path d="M6.5 18.4 H12.5 L11.5 24.8 H9 Q7.2 24.8 6.8 23 Z" fill="#f2522b"/>
<path d="M17.2 6.5 H26.3 Q28.4 6.5 27.9 8.6 L24 22.8 Q23.5 24.7 21.5 24.7 H9.5 Q7.6 24.7 8.2 22.8 L13.9 8.4 Q14.6 6.5 17.2 6.5Z" fill="url(#cgr)" stroke="#1c2027" stroke-width="0.9"/>
</svg>
<svg class="a" style="left:1027px;top:932px" width="31" height="31" viewBox="0 0 31 31"><defs><linearGradient id="eg1" x1="0" y1="0" x2="1" y2="0.7"><stop offset="0" stop-color="#2cb6f3"/><stop offset="0.55" stop-color="#36c3c8"/><stop offset="1" stop-color="#6be04a"/></linearGradient><linearGradient id="eg2" x1="0" y1="0" x2="0.6" y2="1"><stop offset="0" stop-color="#1d98e6"/><stop offset="1" stop-color="#0f6ed0"/></linearGradient></defs>
<circle cx="15.5" cy="15.3" r="15" fill="url(#eg1)"/>
<path d="M0.5 16 C0.5 10 5 7.5 10.5 7.5 C15.5 7.5 19.5 10 20.5 12.5 C19 11 17 10.2 15 10.2 C11.5 10.2 9.2 13 9.2 16.8 C9.2 23.5 15 28.2 21.5 28.2 C24.5 28.2 27 27 28.4 25.6 C25.8 28.6 21 30.3 15.5 30.3 C7.2 30.3 0.5 23.6 0.5 16Z" fill="url(#eg2)"/>
<path d="M9.2 16.8 C9.2 23.5 15 28.2 21.5 28.2 C24.5 28.2 27 27 28.4 25.6 L28.6 24.8 C26.5 26 24 26.2 21.8 25.6 C16.5 24.2 13 20 13.2 15.8 C13.4 12.8 15 11 17 10.6 C15.2 10.2 12 10.6 10.5 12.5 C9.6 13.6 9.2 15 9.2 16.8Z" fill="#0c58a6"/>
<ellipse cx="15.5" cy="13.2" rx="2.9" ry="3" fill="#1c2027"/>
<path d="M16.5 16 C18 16.8 20 16.6 21.5 16" stroke="#4fd26f" stroke-width="1.6" fill="none"/>
</svg>
<svg class="a" style="left:1087px;top:937px" width="22" height="22" viewBox="0 0 22 22"><rect x="0" y="0" width="22" height="22" rx="4" fill="#7b4ee8"/><path d="M7 17 Q5.5 17 6 14 L7 8 Q8 4 11.5 4 Q15.5 4 15.5 9 V17 Q13 16 12 18 Q10.5 16 9 18 Q8 16 7 17Z" fill="#fff"/><circle cx="11.2" cy="9" r="0.9" fill="#222"/><circle cx="13.5" cy="9" r="0.9" fill="#222"/></svg>
<div class="a" style="left:1094px;top:969px;width:8px;height:3px;border-radius:2px;background:#9ea3a8"></div>
<div class="a" style="left:1172px;top:923px;width:6px;height:49px;border-radius:0 5px 5px 0;background:#262b31"></div>
<div class="a" style="left:1128px;top:923px;width:45px;height:49px;border-radius:5px;background:#2d3238;border:1px solid #353a40"></div>
<svg class="a" style="left:1140px;top:935px" width="26" height="29" viewBox="0 0 26 29"><defs><linearGradient id="bg" x1="0" y1="0" x2="0" y2="1"><stop offset="0" stop-color="#ff5f1f"/><stop offset="1" stop-color="#f03a17"/></linearGradient></defs><path d="M6 0 H20 L23 3 L26 5 L25 11 L21 22 L13 29 L5 22 L1 11 L0 5 L3 3Z" fill="url(#bg)"/><path d="M7 7 L11 9 H15 L19 7 L21 10 L17 16 L15 20 L13 22 L11 20 L9 16 L5 10Z" fill="#fff"/><path d="M10 12 L12 14 M16 12 L14 14" stroke="#f03a17" stroke-width="1.2"/></svg>
<div class="a" style="left:1143px;top:968px;width:20px;height:4px;border-radius:2px;background:#4cc2ff"></div>
<svg class="a" style="left:1193px;top:933px" width="31" height="31" viewBox="0 0 31 31"><path d="M15.5 1.2 Q29.8 1.2 29.8 14.5 Q29.8 27.8 15.5 27.8 Q11 27.8 8 26.3 L2.5 29.5 L4.3 24 Q1.2 20 1.2 14.5 Q1.2 1.2 15.5 1.2Z" fill="#fff" stroke="#0a6cf5" stroke-width="2.4"/><text x="5.3" y="17.8" font-family="Liberation Sans" font-weight="700" font-size="9" letter-spacing="-0.3" fill="#0a6cf5">Zalo</text></svg>
<div class="a" style="left:1204px;top:969px;width:8px;height:3px;border-radius:2px;background:#9ea3a8"></div>
<!-- tray -->
<svg class="a" style="left:1640px;top:943px" width="16" height="10" viewBox="0 0 16 10"><path d="M1.5 8.5 L8 2 L14.5 8.5" stroke="#fff" stroke-width="1.5" fill="none"/></svg>
<svg class="a" style="left:1680px;top:938px" width="15" height="21" viewBox="0 0 15 21"><rect x="4" y="0.8" width="7" height="12" rx="3.5" stroke="#6ccdf2" stroke-width="1.5" fill="none"/><path d="M1 9 Q1 15.5 7.5 15.5 Q14 15.5 14 9 M7.5 15.5 V20.5" stroke="#6ccdf2" stroke-width="1.5" fill="none"/></svg>
<svg class="a" style="left:1717px;top:939px" width="22" height="17" viewBox="0 0 22 17"><path d="M1 6 Q11 -3 21 6 M4.5 9 Q11 3 17.5 9 M8 12 Q11 9.5 14 12" stroke="#fff" stroke-width="1.5" fill="none"/><circle cx="11" cy="15" r="1.5" fill="#fff"/></svg>
<svg class="a" style="left:1748px;top:939px" width="22" height="18" viewBox="0 0 22 18"><path d="M1 6 H4.5 L9 2 V16 L4.5 12 H1Z" stroke="#fff" stroke-width="1.3" fill="none" stroke-linejoin="round"/><path d="M12 6 Q14 9 12 12 M15 4 Q18.5 9 15 14" stroke="#fff" stroke-width="1.3" fill="none"/><path d="M18 2 Q22.5 9 18 16" stroke="#777" stroke-width="1.1" fill="none"/></svg>
<svg class="a" style="left:1778px;top:937px" width="21" height="22" viewBox="0 0 21 22"><path d="M3 5 H17 Q19 5 19 7 V13 M3 5 Q1 5 1 7 V16 Q1 17 3 17 H11" stroke="#fff" stroke-width="1.4" fill="none"/><path d="M5 1 L3 7 H7 L4.5 12" stroke="#fff" stroke-width="1.3" fill="none"/><path d="M15.5 21 L12 17.5 Q10.5 15.5 12.5 14.3 Q14.5 13.5 15.5 15.5 Q16.5 13.5 18.5 14.3 Q20.5 15.5 19 17.5Z" fill="#fff"/></svg>
<div class="a" style="left:1842px;top:928px;font-size:15.2px;color:#fff;letter-spacing:0px">6:55 pm</div>
<div class="a" style="left:1818px;top:949px;font-size:15.6px;color:#fff;letter-spacing:0px">09/12/2025</div>
</body></html>
